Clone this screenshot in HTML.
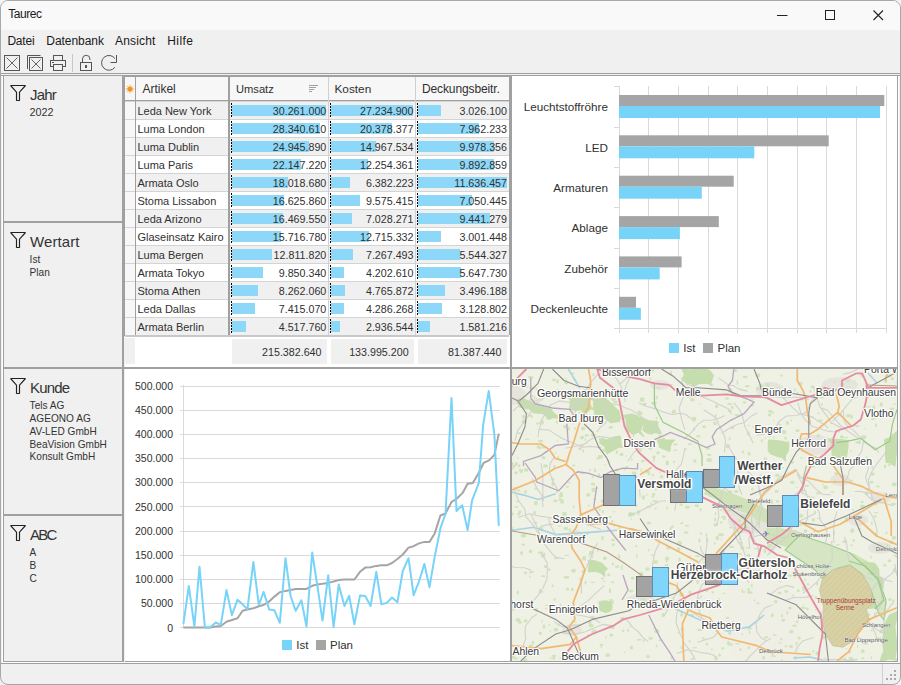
<!DOCTYPE html><html><head><meta charset="utf-8"><style>
*{box-sizing:border-box;margin:0;padding:0}
html,body{width:901px;height:685px;overflow:hidden;background:#f4f4f4;font-family:'Liberation Sans',sans-serif;color:#333}
.a{position:absolute}
.t{position:absolute;white-space:nowrap;line-height:1}
</style></head><body>
<div class="a" style="left:0;top:0;width:901px;height:685px;border:1px solid #a8a8a8;border-radius:8px;background:#f0f0f0;overflow:hidden">

<div class="a" style="left:-1px;top:-1px;width:901px;height:685px">
<div class="a" style="left:1px;top:1px;width:899px;height:29px;background:#f9f9f9;"></div>
<div class="t" style="left:8.2px;top:8.0px;font-size:12px;color:#1a1a1a;font-weight:400;letter-spacing:-0.45px">Taurec</div>
<svg class="a" style="left:0;top:0" width="901" height="30">
<line x1="777" y1="15.5" x2="787.5" y2="15.5" stroke="#222" stroke-width="1"/>
<rect x="825.5" y="10.5" width="9" height="9" fill="none" stroke="#222" stroke-width="1"/>
<path d="M873.5 10.5 L883 20 M883 10.5 L873.5 20" stroke="#222" stroke-width="1.1"/>
</svg>
<div class="t" style="left:7.4px;top:35.0px;font-size:12px;color:#1a1a1a;font-weight:400;letter-spacing:-0.2px">Datei</div>
<div class="t" style="left:46.3px;top:35.0px;font-size:12px;color:#1a1a1a;font-weight:400;letter-spacing:-0.05px">Datenbank</div>
<div class="t" style="left:115.1px;top:35.0px;font-size:12px;color:#1a1a1a;font-weight:400;letter-spacing:0.15px">Ansicht</div>
<div class="t" style="left:167.3px;top:35.0px;font-size:12px;color:#1a1a1a;font-weight:400;letter-spacing:0.4px">Hilfe</div>
<svg class="a" style="left:0;top:0" width="130" height="80" fill="none" stroke="#555" stroke-width="1">
<rect x="4.5" y="55.5" width="15" height="15"/>
<path d="M6.5 57.5 L17.5 68.5 M17.5 57.5 L6.5 68.5" stroke="#666"/>
<path d="M27.5 69 V55.5 H40.5"/>
<rect x="29.5" y="57.5" width="13" height="13"/>
<path d="M31.5 59.5 L40.5 68.5 M40.5 59.5 L31.5 68.5" stroke="#666"/>
<rect x="53.5" y="55.5" width="9" height="5"/>
<rect x="50.5" y="60.5" width="15" height="6"/>
<rect x="53.5" y="64.5" width="9" height="6" fill="#f0f0f0"/>
<line x1="52" y1="62.5" x2="54" y2="62.5"/>
<line x1="72.5" y1="54" x2="72.5" y2="72" stroke="#c8c8c8"/>
<rect x="80.5" y="62.5" width="11" height="8"/>
<path d="M82.5 62.5 V59 A3.7 3.7 0 0 1 89.9 59 V60"/>
<rect x="85.5" y="65.5" width="1" height="2" fill="#555"/>
<path d="M115.1 58.7 A7.4 7.4 0 1 0 114.9 67.3"/>
<path d="M116.5 55 V62.5 H110.5"/>
</svg>
<div class="a" style="left:1px;top:73px;width:899px;height:1px;background:#a0a0a0;"></div>
<div class="a" style="left:1px;top:75px;width:899px;height:1px;background:#a0a0a0;"></div>
<div class="a" style="left:1px;top:663px;width:899px;height:1px;background:#a0a0a0;"></div>
<div class="a" style="left:882px;top:664px;width:1px;height:20px;background:#d0d0d0;"></div>
<svg class="a" style="left:884px;top:668px" width="14" height="14" fill="#aaa"><rect x="10" y="2" width="2" height="2"/><rect x="6" y="6" width="2" height="2"/><rect x="10" y="6" width="2" height="2"/><rect x="2" y="10" width="2" height="2"/><rect x="6" y="10" width="2" height="2"/><rect x="10" y="10" width="2" height="2"/></svg>
<div class="a" style="left:3px;top:76px;width:119px;height:586px;background:#f0f0f0;border-left:1px solid #a0a0a0;border-bottom:1px solid #a0a0a0"></div>
<div class="a" style="left:2px;top:76px;width:1px;height:587px;background:#fff;"></div>
<svg class="a" style="left:0;top:75.0px" width="40" height="30" fill="none" stroke="#222" stroke-width="1.15" stroke-linejoin="miter" stroke-miterlimit="1.3"><path d="M10.6 10.5 H25.5 L19.5 17.2 V25.5 H16.5 V17.2 Z"/></svg>
<div class="t" style="left:30.0px;top:87.0px;font-size:15px;color:#333;font-weight:400;letter-spacing:-0.8px">Jahr</div>
<div class="t" style="left:29.6px;top:107.0px;font-size:10.8px;color:#333;font-weight:400;">2022</div>
<div class="a" style="left:4px;top:221px;width:118px;height:2px;background:#a0a0a0;"></div>
<svg class="a" style="left:0;top:222.0px" width="40" height="30" fill="none" stroke="#222" stroke-width="1.15" stroke-linejoin="miter" stroke-miterlimit="1.3"><path d="M10.6 10.5 H25.5 L19.5 17.2 V25.5 H16.5 V17.2 Z"/></svg>
<div class="t" style="left:30.0px;top:234.0px;font-size:15px;color:#333;font-weight:400;letter-spacing:0.1px">Wertart</div>
<div class="t" style="left:29.6px;top:255.0px;font-size:10.1px;color:#333;font-weight:400;">Ist</div>
<div class="t" style="left:29.6px;top:268.0px;font-size:10.1px;color:#333;font-weight:400;">Plan</div>
<div class="a" style="left:4px;top:367px;width:118px;height:2px;background:#a0a0a0;"></div>
<svg class="a" style="left:0;top:368.0px" width="40" height="30" fill="none" stroke="#222" stroke-width="1.15" stroke-linejoin="miter" stroke-miterlimit="1.3"><path d="M10.6 10.5 H25.5 L19.5 17.2 V25.5 H16.5 V17.2 Z"/></svg>
<div class="t" style="left:30.0px;top:380.0px;font-size:15px;color:#333;font-weight:400;letter-spacing:-0.8px">Kunde</div>
<div class="t" style="left:29.6px;top:401.0px;font-size:10.1px;color:#333;font-weight:400;">Tels AG</div>
<div class="t" style="left:29.6px;top:414.0px;font-size:10.1px;color:#333;font-weight:400;">AGEONO AG</div>
<div class="t" style="left:29.6px;top:427.0px;font-size:10.1px;color:#333;font-weight:400;">AV-LED GmbH</div>
<div class="t" style="left:29.6px;top:440.0px;font-size:10.1px;color:#333;font-weight:400;">BeaVision GmbH</div>
<div class="t" style="left:29.6px;top:452.0px;font-size:10.1px;color:#333;font-weight:400;">Konsult GmbH</div>
<div class="a" style="left:4px;top:514px;width:118px;height:2px;background:#a0a0a0;"></div>
<svg class="a" style="left:0;top:515.0px" width="40" height="30" fill="none" stroke="#222" stroke-width="1.15" stroke-linejoin="miter" stroke-miterlimit="1.3"><path d="M10.6 10.5 H25.5 L19.5 17.2 V25.5 H16.5 V17.2 Z"/></svg>
<div class="t" style="left:30.0px;top:527.0px;font-size:15px;color:#333;font-weight:400;letter-spacing:-1.8px">ABC</div>
<div class="t" style="left:29.6px;top:548.0px;font-size:10.1px;color:#333;font-weight:400;">A</div>
<div class="t" style="left:29.6px;top:561.0px;font-size:10.1px;color:#333;font-weight:400;">B</div>
<div class="t" style="left:29.6px;top:574.0px;font-size:10.1px;color:#333;font-weight:400;">C</div>
<div class="a" style="left:122px;top:76px;width:2px;height:587px;background:#a0a0a0;"></div>
<div class="a" style="left:124px;top:76px;width:1px;height:260px;background:#a0a0a0;"></div>
<div class="a" style="left:510px;top:76px;width:2px;height:587px;background:#a0a0a0;"></div>
<div class="a" style="left:122px;top:367px;width:776px;height:2px;background:#a0a0a0;"></div>
<div class="a" style="left:122px;top:75px;width:776px;height:1px;background:#a0a0a0;"></div>
<div class="a" style="left:122px;top:76px;width:388px;height:1px;background:#a0a0a0;"></div>
<div class="a" style="left:897px;top:76px;width:1px;height:587px;background:#a0a0a0;"></div>
<div class="a" style="left:898px;top:76px;width:1px;height:587px;background:#fff;"></div>
<div class="a" style="left:125px;top:661px;width:773px;height:1px;background:#a0a0a0;"></div>
<div class="a" style="left:3px;top:662px;width:896px;height:1px;background:#fff;"></div>
<div class="a" style="left:125px;top:77px;width:385px;height:290px;background:#fff;"></div>
<div class="a" style="left:125px;top:77px;width:385px;height:23px;background:#f7f7f7;"></div>
<div class="a" style="left:136px;top:101px;width:373px;height:18px;background:#f0f0f0;"></div>
<div class="a" style="left:125px;top:101px;width:10px;height:18px;background:#f7f7f7;"></div>
<div class="a" style="left:125px;top:101px;width:384px;height:1px;background:#d4d4d4;"></div>
<div class="a" style="left:136px;top:119px;width:373px;height:18px;background:#fff;"></div>
<div class="a" style="left:125px;top:119px;width:10px;height:18px;background:#f7f7f7;"></div>
<div class="a" style="left:125px;top:119px;width:384px;height:1px;background:#d4d4d4;"></div>
<div class="a" style="left:136px;top:137px;width:373px;height:18px;background:#f0f0f0;"></div>
<div class="a" style="left:125px;top:137px;width:10px;height:18px;background:#f7f7f7;"></div>
<div class="a" style="left:125px;top:137px;width:384px;height:1px;background:#d4d4d4;"></div>
<div class="a" style="left:136px;top:155px;width:373px;height:18px;background:#fff;"></div>
<div class="a" style="left:125px;top:155px;width:10px;height:18px;background:#f7f7f7;"></div>
<div class="a" style="left:125px;top:155px;width:384px;height:1px;background:#d4d4d4;"></div>
<div class="a" style="left:136px;top:173px;width:373px;height:18px;background:#f0f0f0;"></div>
<div class="a" style="left:125px;top:173px;width:10px;height:18px;background:#f7f7f7;"></div>
<div class="a" style="left:125px;top:173px;width:384px;height:1px;background:#d4d4d4;"></div>
<div class="a" style="left:136px;top:191px;width:373px;height:18px;background:#fff;"></div>
<div class="a" style="left:125px;top:191px;width:10px;height:18px;background:#f7f7f7;"></div>
<div class="a" style="left:125px;top:191px;width:384px;height:1px;background:#d4d4d4;"></div>
<div class="a" style="left:136px;top:209px;width:373px;height:18px;background:#f0f0f0;"></div>
<div class="a" style="left:125px;top:209px;width:10px;height:18px;background:#f7f7f7;"></div>
<div class="a" style="left:125px;top:209px;width:384px;height:1px;background:#d4d4d4;"></div>
<div class="a" style="left:136px;top:227px;width:373px;height:18px;background:#fff;"></div>
<div class="a" style="left:125px;top:227px;width:10px;height:18px;background:#f7f7f7;"></div>
<div class="a" style="left:125px;top:227px;width:384px;height:1px;background:#d4d4d4;"></div>
<div class="a" style="left:136px;top:245px;width:373px;height:18px;background:#f0f0f0;"></div>
<div class="a" style="left:125px;top:245px;width:10px;height:18px;background:#f7f7f7;"></div>
<div class="a" style="left:125px;top:245px;width:384px;height:1px;background:#d4d4d4;"></div>
<div class="a" style="left:136px;top:263px;width:373px;height:18px;background:#fff;"></div>
<div class="a" style="left:125px;top:263px;width:10px;height:18px;background:#f7f7f7;"></div>
<div class="a" style="left:125px;top:263px;width:384px;height:1px;background:#d4d4d4;"></div>
<div class="a" style="left:136px;top:281px;width:373px;height:18px;background:#f0f0f0;"></div>
<div class="a" style="left:125px;top:281px;width:10px;height:18px;background:#f7f7f7;"></div>
<div class="a" style="left:125px;top:281px;width:384px;height:1px;background:#d4d4d4;"></div>
<div class="a" style="left:136px;top:299px;width:373px;height:18px;background:#fff;"></div>
<div class="a" style="left:125px;top:299px;width:10px;height:18px;background:#f7f7f7;"></div>
<div class="a" style="left:125px;top:299px;width:384px;height:1px;background:#d4d4d4;"></div>
<div class="a" style="left:136px;top:317px;width:373px;height:18px;background:#f0f0f0;"></div>
<div class="a" style="left:125px;top:317px;width:10px;height:18px;background:#f7f7f7;"></div>
<div class="a" style="left:125px;top:317px;width:384px;height:1px;background:#d4d4d4;"></div>
<div class="a" style="left:125px;top:100px;width:385px;height:1px;background:#a0a0a0;"></div>
<div class="a" style="left:509px;top:77px;width:1px;height:258px;background:#a0a0a0;"></div>
<div class="a" style="left:135px;top:77px;width:1px;height:258px;background:#a0a0a0;"></div>
<div class="a" style="left:228px;top:77px;width:2px;height:258px;background:#a0a0a0;"></div>
<div class="a" style="left:328px;top:77px;width:1px;height:258px;background:#d0d0d0;"></div>
<div class="a" style="left:415px;top:77px;width:1px;height:258px;background:#d0d0d0;"></div>
<div class="t" style="left:137.4px;top:106.0px;font-size:11px;color:#303030;font-weight:400;">Leda New York</div>
<div class="a" style="left:232px;top:105px;width:94px;height:11px;background:#8dd8f8;"></div>
<div class="a" style="left:231px;top:103px;width:1px;height:15px;background:#000;background:repeating-linear-gradient(#000 0 2px,transparent 2px 3px)"></div>
<div class="t" style="left:236.3px;width:90px;text-align:right;top:106.0px;font-size:10.7px;color:#303030;font-weight:400;">30.261.000</div>
<div class="a" style="left:331px;top:105px;width:82px;height:11px;background:#8dd8f8;"></div>
<div class="a" style="left:330px;top:103px;width:1px;height:15px;background:#000;background:repeating-linear-gradient(#000 0 2px,transparent 2px 3px)"></div>
<div class="t" style="left:323.5px;width:90px;text-align:right;top:106.0px;font-size:10.7px;color:#303030;font-weight:400;">27.234.900</div>
<div class="a" style="left:418px;top:105px;width:23px;height:11px;background:#8dd8f8;"></div>
<div class="a" style="left:417px;top:103px;width:1px;height:15px;background:#000;background:repeating-linear-gradient(#000 0 2px,transparent 2px 3px)"></div>
<div class="t" style="left:417.0px;width:90px;text-align:right;top:106.0px;font-size:10.7px;color:#303030;font-weight:400;">3.026.100</div>
<div class="t" style="left:137.4px;top:124.0px;font-size:11px;color:#303030;font-weight:400;">Luma London</div>
<div class="a" style="left:232px;top:123px;width:88px;height:11px;background:#8dd8f8;"></div>
<div class="a" style="left:231px;top:121px;width:1px;height:15px;background:#000;background:repeating-linear-gradient(#000 0 2px,transparent 2px 3px)"></div>
<div class="t" style="left:236.3px;width:90px;text-align:right;top:124.0px;font-size:10.7px;color:#303030;font-weight:400;">28.340.610</div>
<div class="a" style="left:331px;top:123px;width:61px;height:11px;background:#8dd8f8;"></div>
<div class="a" style="left:330px;top:121px;width:1px;height:15px;background:#000;background:repeating-linear-gradient(#000 0 2px,transparent 2px 3px)"></div>
<div class="t" style="left:323.5px;width:90px;text-align:right;top:124.0px;font-size:10.7px;color:#303030;font-weight:400;">20.378.377</div>
<div class="a" style="left:418px;top:123px;width:61px;height:11px;background:#8dd8f8;"></div>
<div class="a" style="left:417px;top:121px;width:1px;height:15px;background:#000;background:repeating-linear-gradient(#000 0 2px,transparent 2px 3px)"></div>
<div class="t" style="left:417.0px;width:90px;text-align:right;top:124.0px;font-size:10.7px;color:#303030;font-weight:400;">7.962.233</div>
<div class="t" style="left:137.4px;top:142.0px;font-size:11px;color:#303030;font-weight:400;">Luma Dublin</div>
<div class="a" style="left:232px;top:141px;width:77px;height:11px;background:#8dd8f8;"></div>
<div class="a" style="left:231px;top:139px;width:1px;height:15px;background:#000;background:repeating-linear-gradient(#000 0 2px,transparent 2px 3px)"></div>
<div class="t" style="left:236.3px;width:90px;text-align:right;top:142.0px;font-size:10.7px;color:#303030;font-weight:400;">24.945.890</div>
<div class="a" style="left:331px;top:141px;width:45px;height:11px;background:#8dd8f8;"></div>
<div class="a" style="left:330px;top:139px;width:1px;height:15px;background:#000;background:repeating-linear-gradient(#000 0 2px,transparent 2px 3px)"></div>
<div class="t" style="left:323.5px;width:90px;text-align:right;top:142.0px;font-size:10.7px;color:#303030;font-weight:400;">14.967.534</div>
<div class="a" style="left:418px;top:141px;width:76px;height:11px;background:#8dd8f8;"></div>
<div class="a" style="left:417px;top:139px;width:1px;height:15px;background:#000;background:repeating-linear-gradient(#000 0 2px,transparent 2px 3px)"></div>
<div class="t" style="left:417.0px;width:90px;text-align:right;top:142.0px;font-size:10.7px;color:#303030;font-weight:400;">9.978.356</div>
<div class="t" style="left:137.4px;top:160.0px;font-size:11px;color:#303030;font-weight:400;">Luma Paris</div>
<div class="a" style="left:232px;top:159px;width:69px;height:11px;background:#8dd8f8;"></div>
<div class="a" style="left:231px;top:157px;width:1px;height:15px;background:#000;background:repeating-linear-gradient(#000 0 2px,transparent 2px 3px)"></div>
<div class="t" style="left:236.3px;width:90px;text-align:right;top:160.0px;font-size:10.7px;color:#303030;font-weight:400;">22.147.220</div>
<div class="a" style="left:331px;top:159px;width:37px;height:11px;background:#8dd8f8;"></div>
<div class="a" style="left:330px;top:157px;width:1px;height:15px;background:#000;background:repeating-linear-gradient(#000 0 2px,transparent 2px 3px)"></div>
<div class="t" style="left:323.5px;width:90px;text-align:right;top:160.0px;font-size:10.7px;color:#303030;font-weight:400;">12.254.361</div>
<div class="a" style="left:418px;top:159px;width:76px;height:11px;background:#8dd8f8;"></div>
<div class="a" style="left:417px;top:157px;width:1px;height:15px;background:#000;background:repeating-linear-gradient(#000 0 2px,transparent 2px 3px)"></div>
<div class="t" style="left:417.0px;width:90px;text-align:right;top:160.0px;font-size:10.7px;color:#303030;font-weight:400;">9.892.859</div>
<div class="t" style="left:137.4px;top:178.0px;font-size:11px;color:#303030;font-weight:400;">Armata Oslo</div>
<div class="a" style="left:232px;top:177px;width:56px;height:11px;background:#8dd8f8;"></div>
<div class="a" style="left:231px;top:175px;width:1px;height:15px;background:#000;background:repeating-linear-gradient(#000 0 2px,transparent 2px 3px)"></div>
<div class="t" style="left:236.3px;width:90px;text-align:right;top:178.0px;font-size:10.7px;color:#303030;font-weight:400;">18.018.680</div>
<div class="a" style="left:331px;top:177px;width:19px;height:11px;background:#8dd8f8;"></div>
<div class="a" style="left:330px;top:175px;width:1px;height:15px;background:#000;background:repeating-linear-gradient(#000 0 2px,transparent 2px 3px)"></div>
<div class="t" style="left:323.5px;width:90px;text-align:right;top:178.0px;font-size:10.7px;color:#303030;font-weight:400;">6.382.223</div>
<div class="a" style="left:418px;top:177px;width:89px;height:11px;background:#8dd8f8;"></div>
<div class="a" style="left:417px;top:175px;width:1px;height:15px;background:#000;background:repeating-linear-gradient(#000 0 2px,transparent 2px 3px)"></div>
<div class="t" style="left:417.0px;width:90px;text-align:right;top:178.0px;font-size:10.7px;color:#303030;font-weight:400;">11.636.457</div>
<div class="t" style="left:137.4px;top:196.0px;font-size:11px;color:#303030;font-weight:400;">Stoma Lissabon</div>
<div class="a" style="left:232px;top:195px;width:52px;height:11px;background:#8dd8f8;"></div>
<div class="a" style="left:231px;top:193px;width:1px;height:15px;background:#000;background:repeating-linear-gradient(#000 0 2px,transparent 2px 3px)"></div>
<div class="t" style="left:236.3px;width:90px;text-align:right;top:196.0px;font-size:10.7px;color:#303030;font-weight:400;">16.625.860</div>
<div class="a" style="left:331px;top:195px;width:29px;height:11px;background:#8dd8f8;"></div>
<div class="a" style="left:330px;top:193px;width:1px;height:15px;background:#000;background:repeating-linear-gradient(#000 0 2px,transparent 2px 3px)"></div>
<div class="t" style="left:323.5px;width:90px;text-align:right;top:196.0px;font-size:10.7px;color:#303030;font-weight:400;">9.575.415</div>
<div class="a" style="left:418px;top:195px;width:54px;height:11px;background:#8dd8f8;"></div>
<div class="a" style="left:417px;top:193px;width:1px;height:15px;background:#000;background:repeating-linear-gradient(#000 0 2px,transparent 2px 3px)"></div>
<div class="t" style="left:417.0px;width:90px;text-align:right;top:196.0px;font-size:10.7px;color:#303030;font-weight:400;">7.050.445</div>
<div class="t" style="left:137.4px;top:214.0px;font-size:11px;color:#303030;font-weight:400;">Leda Arizono</div>
<div class="a" style="left:232px;top:213px;width:51px;height:11px;background:#8dd8f8;"></div>
<div class="a" style="left:231px;top:211px;width:1px;height:15px;background:#000;background:repeating-linear-gradient(#000 0 2px,transparent 2px 3px)"></div>
<div class="t" style="left:236.3px;width:90px;text-align:right;top:214.0px;font-size:10.7px;color:#303030;font-weight:400;">16.469.550</div>
<div class="a" style="left:331px;top:213px;width:21px;height:11px;background:#8dd8f8;"></div>
<div class="a" style="left:330px;top:211px;width:1px;height:15px;background:#000;background:repeating-linear-gradient(#000 0 2px,transparent 2px 3px)"></div>
<div class="t" style="left:323.5px;width:90px;text-align:right;top:214.0px;font-size:10.7px;color:#303030;font-weight:400;">7.028.271</div>
<div class="a" style="left:418px;top:213px;width:72px;height:11px;background:#8dd8f8;"></div>
<div class="a" style="left:417px;top:211px;width:1px;height:15px;background:#000;background:repeating-linear-gradient(#000 0 2px,transparent 2px 3px)"></div>
<div class="t" style="left:417.0px;width:90px;text-align:right;top:214.0px;font-size:10.7px;color:#303030;font-weight:400;">9.441.279</div>
<div class="t" style="left:137.4px;top:232.0px;font-size:11px;color:#303030;font-weight:400;">Glaseinsatz Kairo</div>
<div class="a" style="left:232px;top:231px;width:49px;height:11px;background:#8dd8f8;"></div>
<div class="a" style="left:231px;top:229px;width:1px;height:15px;background:#000;background:repeating-linear-gradient(#000 0 2px,transparent 2px 3px)"></div>
<div class="t" style="left:236.3px;width:90px;text-align:right;top:232.0px;font-size:10.7px;color:#303030;font-weight:400;">15.716.780</div>
<div class="a" style="left:331px;top:231px;width:38px;height:11px;background:#8dd8f8;"></div>
<div class="a" style="left:330px;top:229px;width:1px;height:15px;background:#000;background:repeating-linear-gradient(#000 0 2px,transparent 2px 3px)"></div>
<div class="t" style="left:323.5px;width:90px;text-align:right;top:232.0px;font-size:10.7px;color:#303030;font-weight:400;">12.715.332</div>
<div class="a" style="left:418px;top:231px;width:23px;height:11px;background:#8dd8f8;"></div>
<div class="a" style="left:417px;top:229px;width:1px;height:15px;background:#000;background:repeating-linear-gradient(#000 0 2px,transparent 2px 3px)"></div>
<div class="t" style="left:417.0px;width:90px;text-align:right;top:232.0px;font-size:10.7px;color:#303030;font-weight:400;">3.001.448</div>
<div class="t" style="left:137.4px;top:250.0px;font-size:11px;color:#303030;font-weight:400;">Luma Bergen</div>
<div class="a" style="left:232px;top:249px;width:40px;height:11px;background:#8dd8f8;"></div>
<div class="a" style="left:231px;top:247px;width:1px;height:15px;background:#000;background:repeating-linear-gradient(#000 0 2px,transparent 2px 3px)"></div>
<div class="t" style="left:236.3px;width:90px;text-align:right;top:250.0px;font-size:10.7px;color:#303030;font-weight:400;">12.811.820</div>
<div class="a" style="left:331px;top:249px;width:22px;height:11px;background:#8dd8f8;"></div>
<div class="a" style="left:330px;top:247px;width:1px;height:15px;background:#000;background:repeating-linear-gradient(#000 0 2px,transparent 2px 3px)"></div>
<div class="t" style="left:323.5px;width:90px;text-align:right;top:250.0px;font-size:10.7px;color:#303030;font-weight:400;">7.267.493</div>
<div class="a" style="left:418px;top:249px;width:42px;height:11px;background:#8dd8f8;"></div>
<div class="a" style="left:417px;top:247px;width:1px;height:15px;background:#000;background:repeating-linear-gradient(#000 0 2px,transparent 2px 3px)"></div>
<div class="t" style="left:417.0px;width:90px;text-align:right;top:250.0px;font-size:10.7px;color:#303030;font-weight:400;">5.544.327</div>
<div class="t" style="left:137.4px;top:268.0px;font-size:11px;color:#303030;font-weight:400;">Armata Tokyo</div>
<div class="a" style="left:232px;top:267px;width:31px;height:11px;background:#8dd8f8;"></div>
<div class="a" style="left:231px;top:265px;width:1px;height:15px;background:#000;background:repeating-linear-gradient(#000 0 2px,transparent 2px 3px)"></div>
<div class="t" style="left:236.3px;width:90px;text-align:right;top:268.0px;font-size:10.7px;color:#303030;font-weight:400;">9.850.340</div>
<div class="a" style="left:331px;top:267px;width:13px;height:11px;background:#8dd8f8;"></div>
<div class="a" style="left:330px;top:265px;width:1px;height:15px;background:#000;background:repeating-linear-gradient(#000 0 2px,transparent 2px 3px)"></div>
<div class="t" style="left:323.5px;width:90px;text-align:right;top:268.0px;font-size:10.7px;color:#303030;font-weight:400;">4.202.610</div>
<div class="a" style="left:418px;top:267px;width:43px;height:11px;background:#8dd8f8;"></div>
<div class="a" style="left:417px;top:265px;width:1px;height:15px;background:#000;background:repeating-linear-gradient(#000 0 2px,transparent 2px 3px)"></div>
<div class="t" style="left:417.0px;width:90px;text-align:right;top:268.0px;font-size:10.7px;color:#303030;font-weight:400;">5.647.730</div>
<div class="t" style="left:137.4px;top:286.0px;font-size:11px;color:#303030;font-weight:400;">Stoma Athen</div>
<div class="a" style="left:232px;top:285px;width:26px;height:11px;background:#8dd8f8;"></div>
<div class="a" style="left:231px;top:283px;width:1px;height:15px;background:#000;background:repeating-linear-gradient(#000 0 2px,transparent 2px 3px)"></div>
<div class="t" style="left:236.3px;width:90px;text-align:right;top:286.0px;font-size:10.7px;color:#303030;font-weight:400;">8.262.060</div>
<div class="a" style="left:331px;top:285px;width:14px;height:11px;background:#8dd8f8;"></div>
<div class="a" style="left:330px;top:283px;width:1px;height:15px;background:#000;background:repeating-linear-gradient(#000 0 2px,transparent 2px 3px)"></div>
<div class="t" style="left:323.5px;width:90px;text-align:right;top:286.0px;font-size:10.7px;color:#303030;font-weight:400;">4.765.872</div>
<div class="a" style="left:418px;top:285px;width:27px;height:11px;background:#8dd8f8;"></div>
<div class="a" style="left:417px;top:283px;width:1px;height:15px;background:#000;background:repeating-linear-gradient(#000 0 2px,transparent 2px 3px)"></div>
<div class="t" style="left:417.0px;width:90px;text-align:right;top:286.0px;font-size:10.7px;color:#303030;font-weight:400;">3.496.188</div>
<div class="t" style="left:137.4px;top:304.0px;font-size:11px;color:#303030;font-weight:400;">Leda Dallas</div>
<div class="a" style="left:232px;top:303px;width:23px;height:11px;background:#8dd8f8;"></div>
<div class="a" style="left:231px;top:301px;width:1px;height:15px;background:#000;background:repeating-linear-gradient(#000 0 2px,transparent 2px 3px)"></div>
<div class="t" style="left:236.3px;width:90px;text-align:right;top:304.0px;font-size:10.7px;color:#303030;font-weight:400;">7.415.070</div>
<div class="a" style="left:331px;top:303px;width:13px;height:11px;background:#8dd8f8;"></div>
<div class="a" style="left:330px;top:301px;width:1px;height:15px;background:#000;background:repeating-linear-gradient(#000 0 2px,transparent 2px 3px)"></div>
<div class="t" style="left:323.5px;width:90px;text-align:right;top:304.0px;font-size:10.7px;color:#303030;font-weight:400;">4.286.268</div>
<div class="a" style="left:418px;top:303px;width:24px;height:11px;background:#8dd8f8;"></div>
<div class="a" style="left:417px;top:301px;width:1px;height:15px;background:#000;background:repeating-linear-gradient(#000 0 2px,transparent 2px 3px)"></div>
<div class="t" style="left:417.0px;width:90px;text-align:right;top:304.0px;font-size:10.7px;color:#303030;font-weight:400;">3.128.802</div>
<div class="t" style="left:137.4px;top:322.0px;font-size:11px;color:#303030;font-weight:400;">Armata Berlin</div>
<div class="a" style="left:232px;top:321px;width:14px;height:11px;background:#8dd8f8;"></div>
<div class="a" style="left:231px;top:319px;width:1px;height:15px;background:#000;background:repeating-linear-gradient(#000 0 2px,transparent 2px 3px)"></div>
<div class="t" style="left:236.3px;width:90px;text-align:right;top:322.0px;font-size:10.7px;color:#303030;font-weight:400;">4.517.760</div>
<div class="a" style="left:331px;top:321px;width:9px;height:11px;background:#8dd8f8;"></div>
<div class="a" style="left:330px;top:319px;width:1px;height:15px;background:#000;background:repeating-linear-gradient(#000 0 2px,transparent 2px 3px)"></div>
<div class="t" style="left:323.5px;width:90px;text-align:right;top:322.0px;font-size:10.7px;color:#303030;font-weight:400;">2.936.544</div>
<div class="a" style="left:418px;top:321px;width:12px;height:11px;background:#8dd8f8;"></div>
<div class="a" style="left:417px;top:319px;width:1px;height:15px;background:#000;background:repeating-linear-gradient(#000 0 2px,transparent 2px 3px)"></div>
<div class="t" style="left:417.0px;width:90px;text-align:right;top:322.0px;font-size:10.7px;color:#303030;font-weight:400;">1.581.216</div>
<svg class="a" style="left:124px;top:83px" width="12" height="12"><g stroke="#fbb970" stroke-width="1"><path d="M6 1.5 V10.5 M1.5 6 H10.5 M2.8 2.8 L9.2 9.2 M9.2 2.8 L2.8 9.2"/></g><circle cx="6" cy="6" r="2.6" fill="#f7931e"/></svg>
<div class="t" style="left:142.4px;top:83.0px;font-size:12px;color:#303030;font-weight:400;">Artikel</div>
<div class="t" style="left:235.9px;top:84.0px;font-size:11.2px;color:#303030;font-weight:400;">Umsatz</div>
<div class="t" style="left:334.5px;top:84.0px;font-size:11.8px;color:#303030;font-weight:400;">Kosten</div>
<div class="t" style="left:422.0px;top:83.0px;font-size:12px;color:#303030;font-weight:400;letter-spacing:-0.12px">Deckungsbeitr.</div>
<svg class="a" style="left:309px;top:84px" width="10" height="9" stroke="#a0a0a0" stroke-width="1"><path d="M0 1.5 H9 M0 3.5 H7 M0 5.5 H5 M0 7.5 H3"/></svg>
<div class="a" style="left:125px;top:335px;width:384px;height:2px;background:#c8c8c8;"></div>
<div class="a" style="left:125px;top:338px;width:10px;height:26px;background:#f0f0f0;"></div>
<div class="a" style="left:232px;top:339px;width:95px;height:25px;background:#f0f0f0;"></div>
<div class="t" style="left:231.5px;width:90px;text-align:right;top:347.0px;font-size:10.7px;color:#303030;font-weight:400;">215.382.640</div>
<div class="a" style="left:331px;top:339px;width:83px;height:25px;background:#f0f0f0;"></div>
<div class="t" style="left:318.6px;width:90px;text-align:right;top:347.0px;font-size:10.7px;color:#303030;font-weight:400;">133.995.200</div>
<div class="a" style="left:418px;top:339px;width:89px;height:25px;background:#f0f0f0;"></div>
<div class="t" style="left:411.5px;width:90px;text-align:right;top:347.0px;font-size:10.7px;color:#303030;font-weight:400;">81.387.440</div>
<div class="a" style="left:512px;top:76px;width:385px;height:291px;background:#fff;"></div>
<svg class="a" style="left:512px;top:77px" width="385" height="290">
<line x1="107.5" y1="9" x2="107.5" y2="256" stroke="#d9d9d9"/>
<line x1="136.5" y1="9" x2="136.5" y2="256" stroke="#d9d9d9"/>
<line x1="166.5" y1="9" x2="166.5" y2="256" stroke="#d9d9d9"/>
<line x1="196.5" y1="9" x2="196.5" y2="256" stroke="#d9d9d9"/>
<line x1="225.5" y1="9" x2="225.5" y2="256" stroke="#d9d9d9"/>
<line x1="255.5" y1="9" x2="255.5" y2="256" stroke="#d9d9d9"/>
<line x1="285.5" y1="9" x2="285.5" y2="256" stroke="#d9d9d9"/>
<line x1="314.5" y1="9" x2="314.5" y2="256" stroke="#d9d9d9"/>
<line x1="344.5" y1="9" x2="344.5" y2="256" stroke="#d9d9d9"/>
<line x1="374.5" y1="9" x2="374.5" y2="256" stroke="#d9d9d9"/>
<line x1="102" y1="9.5" x2="107" y2="9.5" stroke="#d9d9d9"/>
<line x1="102" y1="50.5" x2="107" y2="50.5" stroke="#d9d9d9"/>
<line x1="102" y1="90.5" x2="107" y2="90.5" stroke="#d9d9d9"/>
<line x1="102" y1="130.5" x2="107" y2="130.5" stroke="#d9d9d9"/>
<line x1="102" y1="171.5" x2="107" y2="171.5" stroke="#d9d9d9"/>
<line x1="102" y1="211.5" x2="107" y2="211.5" stroke="#d9d9d9"/>
<line x1="102" y1="251.5" x2="107" y2="251.5" stroke="#d9d9d9"/>
<line x1="102" y1="251.5" x2="374" y2="251.5" stroke="#d9d9d9"/>
<rect x="107" y="18.0" width="265.3" height="11" fill="#a5a5a5"/>
<rect x="107" y="29.0" width="261.0" height="12" fill="#78d3f8"/>
<rect x="107" y="58.3" width="209.7" height="11" fill="#a5a5a5"/>
<rect x="107" y="69.3" width="135.3" height="12" fill="#78d3f8"/>
<rect x="107" y="98.7" width="114.7" height="11" fill="#a5a5a5"/>
<rect x="107" y="109.7" width="82.8" height="12" fill="#78d3f8"/>
<rect x="107" y="139.1" width="99.8" height="11" fill="#a5a5a5"/>
<rect x="107" y="150.1" width="60.9" height="12" fill="#78d3f8"/>
<rect x="107" y="179.4" width="62.6" height="11" fill="#a5a5a5"/>
<rect x="107" y="190.4" width="40.7" height="12" fill="#78d3f8"/>
<rect x="107" y="219.8" width="17.0" height="11" fill="#a5a5a5"/>
<rect x="107" y="230.8" width="21.9" height="12" fill="#78d3f8"/>
</svg>
<div class="t" style="left:487.9px;width:120px;text-align:right;top:101.0px;font-size:11.7px;color:#303030;font-weight:400;">Leuchtstoffröhre</div>
<div class="t" style="left:487.9px;width:120px;text-align:right;top:142.0px;font-size:11.7px;color:#303030;font-weight:400;">LED</div>
<div class="t" style="left:487.9px;width:120px;text-align:right;top:182.0px;font-size:11.7px;color:#303030;font-weight:400;">Armaturen</div>
<div class="t" style="left:487.9px;width:120px;text-align:right;top:222.0px;font-size:11.7px;color:#303030;font-weight:400;">Ablage</div>
<div class="t" style="left:487.9px;width:120px;text-align:right;top:263.0px;font-size:11.7px;color:#303030;font-weight:400;">Zubehör</div>
<div class="t" style="left:487.9px;width:120px;text-align:right;top:303.0px;font-size:11.7px;color:#303030;font-weight:400;">Deckenleuchte</div>
<div class="a" style="left:669px;top:343px;width:10px;height:10px;background:#7dd4fa;"></div>
<div class="t" style="left:683.3px;top:343.0px;font-size:11.5px;color:#303030;font-weight:400;">Ist</div>
<div class="a" style="left:703px;top:343px;width:10px;height:10px;background:#a5a5a5;"></div>
<div class="t" style="left:717.5px;top:343.0px;font-size:11.5px;color:#303030;font-weight:400;">Plan</div>
<div class="a" style="left:125px;top:369px;width:385px;height:292px;background:#fff;"></div>
<svg class="a" style="left:125px;top:369px" width="385" height="292">
<line x1="55" y1="258.5" x2="375" y2="258.5" stroke="#d9d9d9"/>
<line x1="55" y1="234.5" x2="375" y2="234.5" stroke="#d9d9d9"/>
<line x1="55" y1="210.5" x2="375" y2="210.5" stroke="#d9d9d9"/>
<line x1="55" y1="186.5" x2="375" y2="186.5" stroke="#d9d9d9"/>
<line x1="55" y1="162.5" x2="375" y2="162.5" stroke="#d9d9d9"/>
<line x1="55" y1="137.5" x2="375" y2="137.5" stroke="#d9d9d9"/>
<line x1="55" y1="113.5" x2="375" y2="113.5" stroke="#d9d9d9"/>
<line x1="55" y1="89.5" x2="375" y2="89.5" stroke="#d9d9d9"/>
<line x1="55" y1="65.5" x2="375" y2="65.5" stroke="#d9d9d9"/>
<line x1="55" y1="41.5" x2="375" y2="41.5" stroke="#d9d9d9"/>
<line x1="55" y1="17.5" x2="375" y2="17.5" stroke="#d9d9d9"/>
<line x1="58.5" y1="16" x2="58.5" y2="259" stroke="#d9d9d9"/>
<polyline fill="none" stroke="#a5a5a5" stroke-width="2" stroke-linejoin="round" points="58.4,258.5 85.3,258.5 90.7,257.6 95.8,257.0 101.5,252.8 106.9,251.0 112.5,249.2 117.6,241.7 122.4,240.5 128.4,239.3 133.8,237.2 138.6,236.0 144.2,232.4 149.4,227.6 154.8,223.3 160.5,221.9 165.6,221.0 170.7,219.9 181.5,219.9 187.2,216.8 192.7,215.4 197.5,214.8 203.2,213.9 208.6,212.5 213.7,211.1 219.4,210.5 229.4,210.5 235.0,202.8 240.2,198.6 245.6,198.3 251.3,196.9 256.4,196.3 261.8,196.3 267.0,194.0 272.4,190.0 277.8,185.5 283.5,178.6 288.6,177.2 294.0,174.4 299.4,172.9 304.5,172.9 309.7,164.4 315.4,146.5 320.5,144.5 326.5,133.0 332.2,129.3 337.6,123.9 342.6,114.7 347.8,114.0 353.3,104.8 358.7,93.8 364.4,91.1 369.4,85.9 373.8,64.6"/>
<polyline fill="none" stroke="#78d3f8" stroke-width="2" stroke-linejoin="round" points="58.4,255.2 63.8,216.9 69.4,257.6 74.5,197.8 79.9,258.5 85.1,258.5 90.7,253.4 95.8,255.8 101.5,221.1 106.9,246.2 112.5,230.7 117.8,235.6 122.4,240.2 128.4,193.0 133.8,236.0 138.6,222.9 144.2,240.4 149.4,241.3 154.8,253.8 160.5,189.2 165.6,227.0 170.7,241.8 176.4,231.3 181.5,257.5 187.2,183.5 192.7,219.1 197.5,251.5 203.2,206.3 208.6,258.1 213.7,215.6 219.4,237.0 224.2,226.8 229.4,255.2 235.0,226.5 240.2,227.0 245.6,237.0 251.3,202.8 256.4,235.3 261.8,233.9 267.0,228.5 272.4,233.3 277.8,202.0 283.5,189.2 288.6,226.2 294.0,212.5 299.4,194.9 304.5,218.2 309.7,187.7 315.6,158.6 320.5,145.0 326.5,29.1 331.5,142.0 337.2,136.3 342.6,161.1 347.1,131.3 353.8,114.0 358.2,55.6 363.7,22.1 369.4,65.6 373.8,156.9"/>
</svg>
<div class="t" style="left:113.0px;width:60px;text-align:right;top:623.0px;font-size:10.5px;color:#303030;font-weight:400;">0</div>
<div class="t" style="left:113.0px;width:60px;text-align:right;top:598.0px;font-size:10.5px;color:#303030;font-weight:400;">50.000</div>
<div class="t" style="left:113.0px;width:60px;text-align:right;top:574.0px;font-size:10.5px;color:#303030;font-weight:400;">100.000</div>
<div class="t" style="left:113.0px;width:60px;text-align:right;top:550.0px;font-size:10.5px;color:#303030;font-weight:400;">150.000</div>
<div class="t" style="left:113.0px;width:60px;text-align:right;top:526.0px;font-size:10.5px;color:#303030;font-weight:400;">200.000</div>
<div class="t" style="left:113.0px;width:60px;text-align:right;top:502.0px;font-size:10.5px;color:#303030;font-weight:400;">250.000</div>
<div class="t" style="left:113.0px;width:60px;text-align:right;top:477.0px;font-size:10.5px;color:#303030;font-weight:400;">300.000</div>
<div class="t" style="left:113.0px;width:60px;text-align:right;top:453.0px;font-size:10.5px;color:#303030;font-weight:400;">350.000</div>
<div class="t" style="left:113.0px;width:60px;text-align:right;top:429.0px;font-size:10.5px;color:#303030;font-weight:400;">400.000</div>
<div class="t" style="left:113.0px;width:60px;text-align:right;top:405.0px;font-size:10.5px;color:#303030;font-weight:400;">450.000</div>
<div class="t" style="left:113.0px;width:60px;text-align:right;top:381.0px;font-size:10.5px;color:#303030;font-weight:400;">500.000</div>
<div class="a" style="left:282px;top:640px;width:10px;height:10px;background:#78d3f8;"></div>
<div class="t" style="left:296.2px;top:640.0px;font-size:11.5px;color:#303030;font-weight:400;">Ist</div>
<div class="a" style="left:316px;top:640px;width:10px;height:10px;background:#a5a5a5;"></div>
<div class="t" style="left:330.0px;top:640.0px;font-size:11.5px;color:#303030;font-weight:400;">Plan</div>
<svg class="a" style="left:512px;top:369px" width="385" height="292" viewBox="0 0 385 292">
<defs><pattern id="hatch" width="4" height="4" patternUnits="userSpaceOnUse" patternTransform="rotate(45)"><rect width="4" height="4" fill="#d6d2a6"/><line x1="0" y1="0" x2="0" y2="4" stroke="#dcbc92" stroke-width="1"/></pattern></defs>
<rect width="385" height="292" fill="#eff1e4"/>
<ellipse cx="0" cy="26" rx="14" ry="10" fill="#e4e2dc" opacity="0.9"/>
<ellipse cx="148" cy="16" rx="10" ry="5" fill="#e4e2dc" opacity="0.9"/>
<ellipse cx="258" cy="21" rx="14" ry="8" fill="#e4e2dc" opacity="0.9"/>
<ellipse cx="328" cy="16" rx="18" ry="8" fill="#e4e2dc" opacity="0.9"/>
<ellipse cx="303" cy="76" rx="18" ry="10" fill="#e4e2dc" opacity="0.9"/>
<ellipse cx="238" cy="151" rx="22" ry="14" fill="#e4e2dc" opacity="0.9"/>
<ellipse cx="188" cy="206" rx="14" ry="6" fill="#e4e2dc" opacity="0.9"/>
<ellipse cx="128" cy="231" rx="14" ry="6" fill="#e4e2dc" opacity="0.9"/>
<ellipse cx="60" cy="261" rx="10" ry="6" fill="#e4e2dc" opacity="0.9"/>
<ellipse cx="63" cy="166" rx="8" ry="5" fill="#e4e2dc" opacity="0.9"/>
<ellipse cx="51" cy="171" rx="10" ry="4" fill="#e4e2dc" opacity="0.9"/>
<ellipse cx="328" cy="111" rx="10" ry="6" fill="#e4e2dc" opacity="0.9"/>
<ellipse cx="346" cy="151" rx="10" ry="6" fill="#e4e2dc" opacity="0.9"/>
<ellipse cx="368" cy="179" rx="12" ry="6" fill="#e4e2dc" opacity="0.9"/>
<ellipse cx="368" cy="129" rx="10" ry="6" fill="#e4e2dc" opacity="0.9"/>
<ellipse cx="218" cy="141" rx="8" ry="5" fill="#e4e2dc" opacity="0.9"/>
<ellipse cx="318" cy="261" rx="10" ry="8" fill="#e4e2dc" opacity="0.9"/>
<polygon points="216.0,216.0 258.0,206.0 288.0,231.0 288.0,292.0 228.0,292.0 208.0,271.0" fill="#f0eee6" opacity="0.7"/>
<path fill="#d0e4bb" d="M171.7 163.5a2.4 1.3 0 1 0 4.9 0a2.4 1.3 0 1 0 -4.9 0M194.5 171.5a1.0 1.3 0 1 0 1.9 0a1.0 1.3 0 1 0 -1.9 0M241.7 231.5a0.8 1.0 0 1 0 1.6 0a0.8 1.0 0 1 0 -1.6 0M32.9 236.4a2.0 0.7 0 1 0 4.0 0a2.0 0.7 0 1 0 -4.0 0M376.2 281.7a1.9 1.5 0 1 0 3.8 0a1.9 1.5 0 1 0 -3.8 0M59.0 4.4a1.7 0.7 0 1 0 3.3 0a1.7 0.7 0 1 0 -3.3 0M72.6 70.6a0.7 1.2 0 1 0 1.3 0a0.7 1.2 0 1 0 -1.3 0M168.0 246.0a1.6 1.5 0 1 0 3.3 0a1.6 1.5 0 1 0 -3.3 0M190.9 193.4a1.5 1.0 0 1 0 3.0 0a1.5 1.0 0 1 0 -3.0 0M381.8 290.7a2.3 1.6 0 1 0 4.6 0a2.3 1.6 0 1 0 -4.6 0M120.2 67.1a1.2 0.7 0 1 0 2.4 0a1.2 0.7 0 1 0 -2.4 0M292.7 116.9a2.3 1.1 0 1 0 4.6 0a2.3 1.1 0 1 0 -4.6 0M368.2 247.4a0.6 0.9 0 1 0 1.2 0a0.6 0.9 0 1 0 -1.2 0M347.9 137.2a2.6 1.2 0 1 0 5.1 0a2.6 1.2 0 1 0 -5.1 0M26.0 183.8a2.2 1.0 0 1 0 4.3 0a2.2 1.0 0 1 0 -4.3 0M31.0 97.1a2.5 1.7 0 1 0 5.1 0a2.5 1.7 0 1 0 -5.1 0M44.6 71.9a0.8 0.7 0 1 0 1.6 0a0.8 0.7 0 1 0 -1.6 0M305.1 51.9a1.7 1.2 0 1 0 3.4 0a1.7 1.2 0 1 0 -3.4 0M72.6 213.7a0.9 1.5 0 1 0 1.7 0a0.9 1.5 0 1 0 -1.7 0M43.8 122.9a1.0 1.0 0 1 0 2.1 0a1.0 1.0 0 1 0 -2.1 0M372.6 234.6a1.2 1.8 0 1 0 2.4 0a1.2 1.8 0 1 0 -2.4 0M78.8 115.1a2.3 1.5 0 1 0 4.6 0a2.3 1.5 0 1 0 -4.6 0M37.6 288.9a1.0 1.0 0 1 0 2.1 0a1.0 1.0 0 1 0 -2.1 0M296.3 96.1a1.2 0.7 0 1 0 2.4 0a1.2 0.7 0 1 0 -2.4 0M33.6 170.2a1.1 1.4 0 1 0 2.2 0a1.1 1.4 0 1 0 -2.2 0M140.6 132.3a2.5 1.3 0 1 0 5.0 0a2.5 1.3 0 1 0 -5.0 0M220.2 253.0a1.0 0.8 0 1 0 1.9 0a1.0 0.8 0 1 0 -1.9 0M348.6 238.8a1.1 0.9 0 1 0 2.2 0a1.1 0.9 0 1 0 -2.2 0M283.7 274.6a1.0 1.9 0 1 0 2.0 0a1.0 1.9 0 1 0 -2.0 0M338.2 176.2a1.4 0.7 0 1 0 2.9 0a1.4 0.7 0 1 0 -2.9 0M13.8 281.1a1.1 1.6 0 1 0 2.2 0a1.1 1.6 0 1 0 -2.2 0M97.1 240.5a1.8 1.0 0 1 0 3.6 0a1.8 1.0 0 1 0 -3.6 0M66.8 210.3a0.7 0.9 0 1 0 1.5 0a0.7 0.9 0 1 0 -1.5 0M213.5 248.9a1.8 1.0 0 1 0 3.7 0a1.8 1.0 0 1 0 -3.7 0M352.6 59.6a0.6 1.0 0 1 0 1.3 0a0.6 1.0 0 1 0 -1.3 0M170.6 17.7a1.0 1.1 0 1 0 1.9 0a1.0 1.1 0 1 0 -1.9 0M219.0 38.4a1.3 1.8 0 1 0 2.6 0a1.3 1.8 0 1 0 -2.6 0M375.5 191.8a2.0 1.4 0 1 0 4.0 0a2.0 1.4 0 1 0 -4.0 0M53.4 10.2a0.6 1.9 0 1 0 1.3 0a0.6 1.9 0 1 0 -1.3 0M269.2 281.1a0.6 1.5 0 1 0 1.3 0a0.6 1.5 0 1 0 -1.3 0M184.4 213.3a1.2 2.0 0 1 0 2.5 0a1.2 2.0 0 1 0 -2.5 0M26.9 159.5a2.1 1.9 0 1 0 4.1 0a2.1 1.9 0 1 0 -4.1 0M281.6 205.5a2.2 1.9 0 1 0 4.4 0a2.2 1.9 0 1 0 -4.4 0M133.1 200.1a2.4 1.8 0 1 0 4.8 0a2.4 1.8 0 1 0 -4.8 0M158.3 230.8a2.3 1.4 0 1 0 4.7 0a2.3 1.4 0 1 0 -4.7 0M238.8 111.6a1.8 1.5 0 1 0 3.5 0a1.8 1.5 0 1 0 -3.5 0M28.3 186.7a2.6 1.8 0 1 0 5.2 0a2.6 1.8 0 1 0 -5.2 0M278.3 113.4a2.1 1.4 0 1 0 4.1 0a2.1 1.4 0 1 0 -4.1 0M168.8 244.8a0.8 1.7 0 1 0 1.5 0a0.8 1.7 0 1 0 -1.5 0M9.9 175.6a1.6 0.9 0 1 0 3.1 0a1.6 0.9 0 1 0 -3.1 0M267.0 145.2a1.8 1.9 0 1 0 3.7 0a1.8 1.9 0 1 0 -3.7 0M97.3 3.3a1.2 1.5 0 1 0 2.4 0a1.2 1.5 0 1 0 -2.4 0M75.6 49.5a2.4 1.5 0 1 0 4.8 0a2.4 1.5 0 1 0 -4.8 0M168.9 260.4a1.3 1.5 0 1 0 2.5 0a1.3 1.5 0 1 0 -2.5 0M74.2 125.8a2.2 1.9 0 1 0 4.4 0a2.2 1.9 0 1 0 -4.4 0M337.1 112.3a1.8 1.0 0 1 0 3.5 0a1.8 1.0 0 1 0 -3.5 0M50.2 145.0a2.3 1.8 0 1 0 4.5 0a2.3 1.8 0 1 0 -4.5 0M272.7 277.4a1.2 0.8 0 1 0 2.3 0a1.2 0.8 0 1 0 -2.3 0M172.5 80.3a1.0 1.2 0 1 0 2.1 0a1.0 1.2 0 1 0 -2.1 0M239.7 144.2a1.2 1.8 0 1 0 2.5 0a1.2 1.8 0 1 0 -2.5 0M377.3 132.1a0.7 0.6 0 1 0 1.5 0a0.7 0.6 0 1 0 -1.5 0M334.0 12.1a2.0 1.4 0 1 0 4.0 0a2.0 1.4 0 1 0 -4.0 0M118.3 231.1a0.6 0.8 0 1 0 1.3 0a0.6 0.8 0 1 0 -1.3 0M172.9 7.2a2.3 0.9 0 1 0 4.5 0a2.3 0.9 0 1 0 -4.5 0M52.4 13.7a1.9 1.2 0 1 0 3.7 0a1.9 1.2 0 1 0 -3.7 0M240.3 191.3a2.2 1.9 0 1 0 4.4 0a2.2 1.9 0 1 0 -4.4 0M262.0 58.2a1.6 0.9 0 1 0 3.1 0a1.6 0.9 0 1 0 -3.1 0M2.1 137.9a2.0 0.9 0 1 0 4.1 0a2.0 0.9 0 1 0 -4.1 0M102.9 101.0a2.0 1.3 0 1 0 4.0 0a2.0 1.3 0 1 0 -4.0 0M235.2 220.8a1.4 1.7 0 1 0 2.8 0a1.4 1.7 0 1 0 -2.8 0M346.4 25.5a2.5 1.6 0 1 0 4.9 0a2.5 1.6 0 1 0 -4.9 0M48.2 132.4a1.9 1.9 0 1 0 3.7 0a1.9 1.9 0 1 0 -3.7 0M142.7 166.1a2.4 1.7 0 1 0 4.7 0a2.4 1.7 0 1 0 -4.7 0M361.6 135.4a1.9 0.9 0 1 0 3.8 0a1.9 0.9 0 1 0 -3.8 0M276.1 239.0a1.9 1.6 0 1 0 3.8 0a1.9 1.6 0 1 0 -3.8 0M79.6 262.8a2.6 2.0 0 1 0 5.1 0a2.6 2.0 0 1 0 -5.1 0M205.5 230.9a1.2 1.9 0 1 0 2.5 0a1.2 1.9 0 1 0 -2.5 0M328.7 101.8a0.8 1.2 0 1 0 1.5 0a0.8 1.2 0 1 0 -1.5 0M210.3 224.3a1.6 0.6 0 1 0 3.1 0a1.6 0.6 0 1 0 -3.1 0M309.3 18.7a2.2 0.8 0 1 0 4.4 0a2.2 0.8 0 1 0 -4.4 0M128.1 230.1a0.9 0.8 0 1 0 1.8 0a0.9 0.8 0 1 0 -1.8 0M196.6 211.3a2.3 1.6 0 1 0 4.6 0a2.3 1.6 0 1 0 -4.6 0M361.6 143.8a2.5 0.7 0 1 0 5.0 0a2.5 0.7 0 1 0 -5.0 0M84.1 153.8a1.2 1.6 0 1 0 2.4 0a1.2 1.6 0 1 0 -2.4 0M243.7 152.7a2.3 1.4 0 1 0 4.6 0a2.3 1.4 0 1 0 -4.6 0M117.7 111.3a2.3 1.9 0 1 0 4.6 0a2.3 1.9 0 1 0 -4.6 0M77.6 248.4a2.5 1.3 0 1 0 5.1 0a2.5 1.3 0 1 0 -5.1 0M218.9 58.7a1.7 1.3 0 1 0 3.3 0a1.7 1.3 0 1 0 -3.3 0M230.5 8.1a2.5 1.3 0 1 0 5.1 0a2.5 1.3 0 1 0 -5.1 0M152.5 233.9a1.7 1.3 0 1 0 3.5 0a1.7 1.3 0 1 0 -3.5 0M264.4 19.2a1.7 1.2 0 1 0 3.4 0a1.7 1.2 0 1 0 -3.4 0M367.3 269.6a1.1 1.3 0 1 0 2.3 0a1.1 1.3 0 1 0 -2.3 0M46.7 126.6a2.2 1.9 0 1 0 4.5 0a2.2 1.9 0 1 0 -4.5 0M182.5 92.6a1.0 1.5 0 1 0 2.0 0a1.0 1.5 0 1 0 -2.0 0M354.1 37.8a2.2 0.6 0 1 0 4.3 0a2.2 0.6 0 1 0 -4.3 0M72.8 66.4a2.0 1.1 0 1 0 3.9 0a2.0 1.1 0 1 0 -3.9 0M136.0 181.0a0.8 1.6 0 1 0 1.6 0a0.8 1.6 0 1 0 -1.6 0M46.2 149.1a1.1 0.9 0 1 0 2.2 0a1.1 0.9 0 1 0 -2.2 0M202.8 127.5a1.4 1.2 0 1 0 2.7 0a1.4 1.2 0 1 0 -2.7 0M202.8 46.6a1.0 1.5 0 1 0 2.0 0a1.0 1.5 0 1 0 -2.0 0M243.5 154.6a2.3 1.5 0 1 0 4.6 0a2.3 1.5 0 1 0 -4.6 0M327.8 67.9a2.1 1.7 0 1 0 4.2 0a2.1 1.7 0 1 0 -4.2 0M346.3 92.2a1.2 1.9 0 1 0 2.5 0a1.2 1.9 0 1 0 -2.5 0M81.6 291.5a2.4 0.8 0 1 0 4.8 0a2.4 0.8 0 1 0 -4.8 0M91.0 212.2a1.1 0.7 0 1 0 2.2 0a1.1 0.7 0 1 0 -2.2 0M318.2 123.1a2.2 0.8 0 1 0 4.4 0a2.2 0.8 0 1 0 -4.4 0M154.4 200.1a0.6 0.9 0 1 0 1.3 0a0.6 0.9 0 1 0 -1.3 0M260.2 266.1a2.5 0.8 0 1 0 5.1 0a2.5 0.8 0 1 0 -5.1 0M193.1 221.4a1.6 1.6 0 1 0 3.2 0a1.6 1.6 0 1 0 -3.2 0M72.0 20.6a0.8 0.7 0 1 0 1.6 0a0.8 0.7 0 1 0 -1.6 0M210.7 150.3a1.7 0.8 0 1 0 3.5 0a1.7 0.8 0 1 0 -3.5 0M68.8 59.5a2.3 2.0 0 1 0 4.6 0a2.3 2.0 0 1 0 -4.6 0M356.1 27.8a0.7 1.9 0 1 0 1.4 0a0.7 1.9 0 1 0 -1.4 0M176.6 223.3a1.3 1.3 0 1 0 2.5 0a1.3 1.3 0 1 0 -2.5 0M196.6 125.6a1.8 0.6 0 1 0 3.6 0a1.8 0.6 0 1 0 -3.6 0M268.9 246.5a1.0 1.2 0 1 0 1.9 0a1.0 1.2 0 1 0 -1.9 0M283.7 118.3a1.0 0.8 0 1 0 2.0 0a1.0 0.8 0 1 0 -2.0 0M194.9 4.5a2.4 1.7 0 1 0 4.8 0a2.4 1.7 0 1 0 -4.8 0M269.4 251.3a1.9 1.2 0 1 0 3.7 0a1.9 1.2 0 1 0 -3.7 0M228.3 147.3a2.6 1.7 0 1 0 5.1 0a2.6 1.7 0 1 0 -5.1 0M97.3 266.1a2.1 1.7 0 1 0 4.2 0a2.1 1.7 0 1 0 -4.2 0M311.2 118.4a2.4 1.8 0 1 0 4.8 0a2.4 1.8 0 1 0 -4.8 0M265.4 224.0a2.1 1.2 0 1 0 4.3 0a2.1 1.2 0 1 0 -4.3 0M276.9 20.6a1.3 1.3 0 1 0 2.6 0a1.3 1.3 0 1 0 -2.6 0M2.2 103.8a1.9 1.5 0 1 0 3.8 0a1.9 1.5 0 1 0 -3.8 0M87.4 275.8a1.9 1.1 0 1 0 3.9 0a1.9 1.1 0 1 0 -3.9 0M252.3 166.3a1.7 1.1 0 1 0 3.3 0a1.7 1.1 0 1 0 -3.3 0M383.0 187.5a2.0 1.7 0 1 0 4.0 0a2.0 1.7 0 1 0 -4.0 0M375.5 6.7a1.8 1.6 0 1 0 3.7 0a1.8 1.6 0 1 0 -3.7 0M98.1 117.3a0.7 0.9 0 1 0 1.4 0a0.7 0.9 0 1 0 -1.4 0M143.5 28.7a1.1 1.9 0 1 0 2.2 0a1.1 1.9 0 1 0 -2.2 0M209.2 148.3a2.5 1.4 0 1 0 5.1 0a2.5 1.4 0 1 0 -5.1 0M380.9 186.3a2.2 0.7 0 1 0 4.4 0a2.2 0.7 0 1 0 -4.4 0M229.4 221.7a0.7 1.9 0 1 0 1.4 0a0.7 1.9 0 1 0 -1.4 0M60.6 137.8a0.9 1.3 0 1 0 1.9 0a0.9 1.3 0 1 0 -1.9 0M232.8 17.1a2.5 1.2 0 1 0 5.0 0a2.5 1.2 0 1 0 -5.0 0M201.5 174.6a1.3 1.0 0 1 0 2.7 0a1.3 1.0 0 1 0 -2.7 0M251.1 163.7a1.2 1.6 0 1 0 2.3 0a1.2 1.6 0 1 0 -2.3 0M112.9 4.1a1.1 0.7 0 1 0 2.2 0a1.1 0.7 0 1 0 -2.2 0M58.9 220.4a1.4 1.9 0 1 0 2.8 0a1.4 1.9 0 1 0 -2.8 0M285.5 14.6a2.6 1.9 0 1 0 5.2 0a2.6 1.9 0 1 0 -5.2 0M26.8 264.4a1.5 1.3 0 1 0 2.9 0a1.5 1.3 0 1 0 -2.9 0M373.0 71.2a1.6 1.9 0 1 0 3.3 0a1.6 1.9 0 1 0 -3.3 0M275.7 136.8a2.6 1.7 0 1 0 5.1 0a2.6 1.7 0 1 0 -5.1 0M230.5 33.6a1.8 1.2 0 1 0 3.7 0a1.8 1.2 0 1 0 -3.7 0M76.8 15.2a1.7 0.8 0 1 0 3.3 0a1.7 0.8 0 1 0 -3.3 0M169.0 195.0a1.5 1.0 0 1 0 3.0 0a1.5 1.0 0 1 0 -3.0 0M222.0 122.5a2.2 1.3 0 1 0 4.3 0a2.2 1.3 0 1 0 -4.3 0M382.0 278.2a2.1 0.9 0 1 0 4.1 0a2.1 0.9 0 1 0 -4.1 0M41.7 260.7a2.2 1.5 0 1 0 4.3 0a2.2 1.5 0 1 0 -4.3 0M136.3 79.3a2.0 1.4 0 1 0 3.9 0a2.0 1.4 0 1 0 -3.9 0M225.7 184.9a2.1 0.9 0 1 0 4.2 0a2.1 0.9 0 1 0 -4.2 0M93.4 286.1a2.4 1.8 0 1 0 4.9 0a2.4 1.8 0 1 0 -4.9 0M14.1 17.7a1.1 1.2 0 1 0 2.3 0a1.1 1.2 0 1 0 -2.3 0M238.3 29.9a1.7 0.7 0 1 0 3.4 0a1.7 0.7 0 1 0 -3.4 0M31.6 197.5a1.7 1.5 0 1 0 3.4 0a1.7 1.5 0 1 0 -3.4 0M142.7 139.7a1.0 1.1 0 1 0 2.0 0a1.0 1.1 0 1 0 -2.0 0M286.0 244.9a0.7 0.8 0 1 0 1.5 0a0.7 0.8 0 1 0 -1.5 0M309.4 182.1a2.1 0.9 0 1 0 4.3 0a2.1 0.9 0 1 0 -4.3 0M161.2 75.4a2.2 1.1 0 1 0 4.4 0a2.2 1.1 0 1 0 -4.4 0M250.4 288.8a1.3 1.4 0 1 0 2.5 0a1.3 1.4 0 1 0 -2.5 0M285.8 268.9a1.5 1.1 0 1 0 2.9 0a1.5 1.1 0 1 0 -2.9 0M36.6 255.6a0.8 0.7 0 1 0 1.5 0a0.8 0.7 0 1 0 -1.5 0M215.3 141.6a2.0 1.0 0 1 0 3.9 0a2.0 1.0 0 1 0 -3.9 0M297.5 22.2a1.0 1.5 0 1 0 2.1 0a1.0 1.5 0 1 0 -2.1 0M29.4 88.7a2.0 1.6 0 1 0 4.1 0a2.0 1.6 0 1 0 -4.1 0M107.6 41.7a1.3 1.6 0 1 0 2.6 0a1.3 1.6 0 1 0 -2.6 0M139.0 34.3a2.0 1.4 0 1 0 4.0 0a2.0 1.4 0 1 0 -4.0 0M351.2 274.5a2.4 1.2 0 1 0 4.9 0a2.4 1.2 0 1 0 -4.9 0M307.9 89.0a1.2 1.2 0 1 0 2.5 0a1.2 1.2 0 1 0 -2.5 0M358.7 261.3a1.1 1.1 0 1 0 2.2 0a1.1 1.1 0 1 0 -2.2 0M139.4 106.1a1.4 1.1 0 1 0 2.8 0a1.4 1.1 0 1 0 -2.8 0M72.9 164.6a2.2 1.4 0 1 0 4.4 0a2.2 1.4 0 1 0 -4.4 0M321.1 164.3a1.0 1.7 0 1 0 1.9 0a1.0 1.7 0 1 0 -1.9 0M338.5 82.2a0.6 1.3 0 1 0 1.3 0a0.6 1.3 0 1 0 -1.3 0M207.0 165.7a2.5 1.5 0 1 0 5.1 0a2.5 1.5 0 1 0 -5.1 0M308.0 18.7a1.7 1.7 0 1 0 3.4 0a1.7 1.7 0 1 0 -3.4 0M30.3 23.8a2.1 1.9 0 1 0 4.1 0a2.1 1.9 0 1 0 -4.1 0M31.7 185.2a0.9 1.6 0 1 0 1.8 0a0.9 1.6 0 1 0 -1.8 0M248.8 71.7a1.0 1.7 0 1 0 2.1 0a1.0 1.7 0 1 0 -2.1 0M199.4 223.3a1.4 1.1 0 1 0 2.8 0a1.4 1.1 0 1 0 -2.8 0M371.2 196.3a1.6 1.4 0 1 0 3.2 0a1.6 1.4 0 1 0 -3.2 0M275.1 206.8a2.4 1.2 0 1 0 4.9 0a2.4 1.2 0 1 0 -4.9 0M315.8 194.7a2.3 1.7 0 1 0 4.6 0a2.3 1.7 0 1 0 -4.6 0M318.5 259.5a2.5 1.5 0 1 0 5.0 0a2.5 1.5 0 1 0 -5.0 0M199.5 207.3a2.2 1.2 0 1 0 4.4 0a2.2 1.2 0 1 0 -4.4 0M159.8 42.7a2.1 2.0 0 1 0 4.2 0a2.1 2.0 0 1 0 -4.2 0M143.6 49.0a1.0 1.2 0 1 0 2.0 0a1.0 1.2 0 1 0 -2.0 0M111.7 283.2a0.7 1.0 0 1 0 1.4 0a0.7 1.0 0 1 0 -1.4 0M42.1 189.2a2.2 0.9 0 1 0 4.3 0a2.2 0.9 0 1 0 -4.3 0M22.2 134.0a1.8 1.9 0 1 0 3.5 0a1.8 1.9 0 1 0 -3.5 0M13.0 31.7a1.0 0.9 0 1 0 1.9 0a1.0 0.9 0 1 0 -1.9 0M88.8 209.4a1.8 0.9 0 1 0 3.6 0a1.8 0.9 0 1 0 -3.6 0M70.3 82.1a0.9 1.7 0 1 0 1.9 0a0.9 1.7 0 1 0 -1.9 0M117.8 160.1a2.2 1.3 0 1 0 4.5 0a2.2 1.3 0 1 0 -4.5 0M97.9 259.1a2.4 1.1 0 1 0 4.9 0a2.4 1.1 0 1 0 -4.9 0M209.2 279.4a1.6 0.9 0 1 0 3.1 0a1.6 0.9 0 1 0 -3.1 0M16.9 276.7a2.2 1.1 0 1 0 4.4 0a2.2 1.1 0 1 0 -4.4 0M202.0 150.6a1.1 2.0 0 1 0 2.3 0a1.1 2.0 0 1 0 -2.3 0M252.5 69.4a0.6 1.3 0 1 0 1.2 0a0.6 1.3 0 1 0 -1.2 0M141.0 232.7a2.0 1.4 0 1 0 4.1 0a2.0 1.4 0 1 0 -4.1 0M59.3 45.8a1.2 1.0 0 1 0 2.5 0a1.2 1.0 0 1 0 -2.5 0M332.8 150.7a1.9 2.0 0 1 0 3.7 0a1.9 2.0 0 1 0 -3.7 0M101.7 156.1a0.9 1.7 0 1 0 1.8 0a0.9 1.7 0 1 0 -1.8 0M-1.8 239.9a2.3 1.8 0 1 0 4.6 0a2.3 1.8 0 1 0 -4.6 0M29.7 78.8a2.0 0.7 0 1 0 4.1 0a2.0 0.7 0 1 0 -4.1 0M182.3 136.8a2.5 1.4 0 1 0 5.0 0a2.5 1.4 0 1 0 -5.0 0M327.9 88.6a2.2 1.2 0 1 0 4.4 0a2.2 1.2 0 1 0 -4.4 0M350.7 26.6a2.3 0.9 0 1 0 4.5 0a2.3 0.9 0 1 0 -4.5 0M208.3 153.5a0.9 1.8 0 1 0 1.8 0a0.9 1.8 0 1 0 -1.8 0M119.1 90.7a0.8 1.0 0 1 0 1.5 0a0.8 1.0 0 1 0 -1.5 0M178.6 208.8a1.3 1.6 0 1 0 2.6 0a1.3 1.6 0 1 0 -2.6 0M39.2 115.1a1.5 2.0 0 1 0 3.0 0a1.5 2.0 0 1 0 -3.0 0M318.8 190.9a0.6 1.1 0 1 0 1.2 0a0.6 1.1 0 1 0 -1.2 0M271.6 69.3a1.7 1.2 0 1 0 3.5 0a1.7 1.2 0 1 0 -3.5 0M1.8 289.6a2.2 0.9 0 1 0 4.4 0a2.2 0.9 0 1 0 -4.4 0M235.8 84.8a1.4 1.4 0 1 0 2.7 0a1.4 1.4 0 1 0 -2.7 0M113.4 98.5a1.4 1.5 0 1 0 2.8 0a1.4 1.5 0 1 0 -2.8 0M96.7 58.4a2.1 1.1 0 1 0 4.1 0a2.1 1.1 0 1 0 -4.1 0M361.8 164.3a2.0 1.1 0 1 0 4.1 0a2.0 1.1 0 1 0 -4.1 0M317.5 26.9a0.9 0.7 0 1 0 1.8 0a0.9 0.7 0 1 0 -1.8 0M260.0 206.8a1.0 1.2 0 1 0 1.9 0a1.0 1.2 0 1 0 -1.9 0M321.4 173.1a0.8 0.9 0 1 0 1.6 0a0.8 0.9 0 1 0 -1.6 0M59.1 36.2a1.4 0.7 0 1 0 2.8 0a1.4 0.7 0 1 0 -2.8 0M352.8 124.7a1.6 1.5 0 1 0 3.2 0a1.6 1.5 0 1 0 -3.2 0M293.9 239.8a1.4 1.1 0 1 0 2.7 0a1.4 1.1 0 1 0 -2.7 0M157.3 4.5a1.4 1.6 0 1 0 2.8 0a1.4 1.6 0 1 0 -2.8 0M376.1 230.6a1.9 1.5 0 1 0 3.8 0a1.9 1.5 0 1 0 -3.8 0M5.9 96.7a1.3 1.5 0 1 0 2.6 0a1.3 1.5 0 1 0 -2.6 0M39.3 110.3a1.6 1.7 0 1 0 3.2 0a1.6 1.7 0 1 0 -3.2 0M316.8 178.5a0.9 1.7 0 1 0 1.8 0a0.9 1.7 0 1 0 -1.8 0M346.3 160.1a1.3 1.3 0 1 0 2.6 0a1.3 1.3 0 1 0 -2.6 0M52.0 208.3a2.6 1.3 0 1 0 5.1 0a2.6 1.3 0 1 0 -5.1 0M274.4 244.0a1.0 1.9 0 1 0 2.0 0a1.0 1.9 0 1 0 -2.0 0M240.7 57.8a0.8 0.9 0 1 0 1.5 0a0.8 0.9 0 1 0 -1.5 0M220.7 203.6a1.3 1.9 0 1 0 2.5 0a1.3 1.9 0 1 0 -2.5 0M138.2 135.2a0.8 2.0 0 1 0 1.7 0a0.8 2.0 0 1 0 -1.7 0M50.5 264.0a1.7 1.4 0 1 0 3.4 0a1.7 1.4 0 1 0 -3.4 0M213.3 77.2a2.4 2.0 0 1 0 4.8 0a2.4 2.0 0 1 0 -4.8 0M313.9 175.6a0.8 1.8 0 1 0 1.7 0a0.8 1.8 0 1 0 -1.7 0M110.0 261.9a1.1 1.4 0 1 0 2.2 0a1.1 1.4 0 1 0 -2.2 0M318.1 54.2a1.7 0.7 0 1 0 3.4 0a1.7 0.7 0 1 0 -3.4 0M9.8 52.6a2.6 1.9 0 1 0 5.1 0a2.6 1.9 0 1 0 -5.1 0M251.5 89.8a1.9 1.6 0 1 0 3.9 0a1.9 1.6 0 1 0 -3.9 0M144.7 172.8a2.2 0.6 0 1 0 4.4 0a2.2 0.6 0 1 0 -4.4 0M75.9 136.7a0.9 1.1 0 1 0 1.8 0a0.9 1.1 0 1 0 -1.8 0M217.6 50.7a1.6 1.0 0 1 0 3.3 0a1.6 1.0 0 1 0 -3.3 0M216.8 97.0a1.9 0.7 0 1 0 3.8 0a1.9 0.7 0 1 0 -3.8 0M255.8 42.3a2.5 1.4 0 1 0 5.0 0a2.5 1.4 0 1 0 -5.0 0M179.1 120.1a1.8 1.6 0 1 0 3.7 0a1.8 1.6 0 1 0 -3.7 0M290.3 219.5a1.6 2.0 0 1 0 3.1 0a1.6 2.0 0 1 0 -3.1 0M321.3 249.7a1.4 1.2 0 1 0 2.8 0a1.4 1.2 0 1 0 -2.8 0M216.2 264.3a1.7 1.3 0 1 0 3.3 0a1.7 1.3 0 1 0 -3.3 0M165.2 264.1a1.2 0.7 0 1 0 2.5 0a1.2 0.7 0 1 0 -2.5 0M277.3 262.8a2.1 1.4 0 1 0 4.1 0a2.1 1.4 0 1 0 -4.1 0M287.7 89.0a1.8 0.7 0 1 0 3.6 0a1.8 0.7 0 1 0 -3.6 0M46.3 130.5a1.6 1.2 0 1 0 3.2 0a1.6 1.2 0 1 0 -3.2 0M18.4 202.9a1.7 0.9 0 1 0 3.3 0a1.7 0.9 0 1 0 -3.3 0M116.9 115.5a1.1 0.7 0 1 0 2.1 0a1.1 0.7 0 1 0 -2.1 0M348.9 282.2a1.9 1.8 0 1 0 3.9 0a1.9 1.8 0 1 0 -3.9 0M161.2 235.1a1.0 1.6 0 1 0 2.1 0a1.0 1.6 0 1 0 -2.1 0M217.4 263.8a0.8 1.7 0 1 0 1.6 0a0.8 1.7 0 1 0 -1.6 0M45.2 157.0a2.5 0.6 0 1 0 5.0 0a2.5 0.6 0 1 0 -5.0 0M92.7 87.4a1.2 0.7 0 1 0 2.5 0a1.2 0.7 0 1 0 -2.5 0M343.2 238.1a1.4 1.1 0 1 0 2.8 0a1.4 1.1 0 1 0 -2.8 0M224.8 13.4a0.7 1.9 0 1 0 1.3 0a0.7 1.9 0 1 0 -1.3 0M116.1 145.5a2.5 2.0 0 1 0 4.9 0a2.5 2.0 0 1 0 -4.9 0M180.8 60.3a1.2 1.9 0 1 0 2.4 0a1.2 1.9 0 1 0 -2.4 0M343.0 57.1a2.3 1.1 0 1 0 4.6 0a2.3 1.1 0 1 0 -4.6 0M179.5 50.2a2.4 2.0 0 1 0 4.7 0a2.4 2.0 0 1 0 -4.7 0M76.8 184.7a1.0 1.8 0 1 0 2.0 0a1.0 1.8 0 1 0 -2.0 0M17.2 31.0a2.1 1.0 0 1 0 4.1 0a2.1 1.0 0 1 0 -4.1 0M344.6 253.9a2.0 0.8 0 1 0 4.1 0a2.0 0.8 0 1 0 -4.1 0M266.5 273.8a1.5 0.7 0 1 0 3.0 0a1.5 0.7 0 1 0 -3.0 0M83.9 89.7a2.0 0.9 0 1 0 4.0 0a2.0 0.9 0 1 0 -4.0 0M67.8 68.8a1.9 1.7 0 1 0 3.9 0a1.9 1.7 0 1 0 -3.9 0M141.0 193.3a2.4 1.4 0 1 0 4.7 0a2.4 1.4 0 1 0 -4.7 0M85.7 87.9a2.5 1.5 0 1 0 4.9 0a2.5 1.5 0 1 0 -4.9 0M105.8 186.9a0.8 2.0 0 1 0 1.6 0a0.8 2.0 0 1 0 -1.6 0M167.9 154.3a1.7 0.7 0 1 0 3.3 0a1.7 0.7 0 1 0 -3.3 0M229.8 83.1a1.1 1.7 0 1 0 2.2 0a1.1 1.7 0 1 0 -2.2 0M31.4 83.3a2.1 0.9 0 1 0 4.2 0a2.1 0.9 0 1 0 -4.2 0M106.5 160.0a1.0 1.9 0 1 0 1.9 0a1.0 1.9 0 1 0 -1.9 0M378.8 9.8a1.5 1.7 0 1 0 3.0 0a1.5 1.7 0 1 0 -3.0 0M146.5 271.3a1.6 0.9 0 1 0 3.2 0a1.6 0.9 0 1 0 -3.2 0M212.7 188.3a1.3 1.5 0 1 0 2.6 0a1.3 1.5 0 1 0 -2.6 0M299.8 150.9a1.6 1.8 0 1 0 3.2 0a1.6 1.8 0 1 0 -3.2 0M260.9 152.0a2.5 0.8 0 1 0 5.0 0a2.5 0.8 0 1 0 -5.0 0M298.4 48.2a1.8 0.9 0 1 0 3.6 0a1.8 0.9 0 1 0 -3.6 0M167.4 225.7a2.2 1.7 0 1 0 4.3 0a2.2 1.7 0 1 0 -4.3 0M89.8 142.8a1.0 1.4 0 1 0 2.1 0a1.0 1.4 0 1 0 -2.1 0M190.3 10.3a1.8 1.6 0 1 0 3.6 0a1.8 1.6 0 1 0 -3.6 0M219.5 254.9a1.0 0.8 0 1 0 1.9 0a1.0 0.8 0 1 0 -1.9 0M5.4 144.9a1.5 1.2 0 1 0 2.9 0a1.5 1.2 0 1 0 -2.9 0M100.5 233.2a0.7 1.9 0 1 0 1.5 0a0.7 1.9 0 1 0 -1.5 0M216.8 158.6a2.2 0.9 0 1 0 4.4 0a2.2 0.9 0 1 0 -4.4 0M55.6 90.8a0.7 1.0 0 1 0 1.4 0a0.7 1.0 0 1 0 -1.4 0M238.0 153.4a1.1 1.4 0 1 0 2.3 0a1.1 1.4 0 1 0 -2.3 0M33.1 239.6a0.9 1.0 0 1 0 1.9 0a0.9 1.0 0 1 0 -1.9 0M59.3 201.7a2.3 1.7 0 1 0 4.5 0a2.3 1.7 0 1 0 -4.5 0M22.2 119.9a1.3 0.9 0 1 0 2.7 0a1.3 0.9 0 1 0 -2.7 0M372.1 12.3a1.6 1.7 0 1 0 3.2 0a1.6 1.7 0 1 0 -3.2 0M378.2 42.2a1.5 1.6 0 1 0 3.0 0a1.5 1.6 0 1 0 -3.0 0M12.7 70.3a2.4 0.8 0 1 0 4.8 0a2.4 0.8 0 1 0 -4.8 0M149.8 87.0a1.4 0.7 0 1 0 2.9 0a1.4 0.7 0 1 0 -2.9 0M11.1 290.9a2.1 1.6 0 1 0 4.3 0a2.1 1.6 0 1 0 -4.3 0M86.8 73.9a1.7 0.9 0 1 0 3.4 0a1.7 0.9 0 1 0 -3.4 0M176.4 272.3a1.3 1.1 0 1 0 2.7 0a1.3 1.1 0 1 0 -2.7 0M377.1 178.4a0.7 1.2 0 1 0 1.4 0a0.7 1.2 0 1 0 -1.4 0M248.9 17.1a1.3 1.6 0 1 0 2.6 0a1.3 1.6 0 1 0 -2.6 0M330.4 172.5a2.4 1.2 0 1 0 4.7 0a2.4 1.2 0 1 0 -4.7 0M149.9 246.2a1.4 1.7 0 1 0 2.7 0a1.4 1.7 0 1 0 -2.7 0M82.0 101.4a1.0 1.4 0 1 0 1.9 0a1.0 1.4 0 1 0 -1.9 0M62.1 59.5a1.0 1.3 0 1 0 2.1 0a1.0 1.3 0 1 0 -2.1 0M116.2 130.6a2.6 1.6 0 1 0 5.2 0a2.6 1.6 0 1 0 -5.2 0M330.8 59.7a1.4 0.7 0 1 0 2.7 0a1.4 0.7 0 1 0 -2.7 0M265.0 105.9a1.1 0.6 0 1 0 2.3 0a1.1 0.6 0 1 0 -2.3 0M68.7 76.6a1.4 1.9 0 1 0 2.8 0a1.4 1.9 0 1 0 -2.8 0M274.0 78.4a1.3 0.8 0 1 0 2.6 0a1.3 0.8 0 1 0 -2.6 0M358.5 105.0a2.1 1.6 0 1 0 4.3 0a2.1 1.6 0 1 0 -4.3 0M348.0 6.0a1.2 1.1 0 1 0 2.5 0a1.2 1.1 0 1 0 -2.5 0M30.8 257.7a1.3 1.7 0 1 0 2.5 0a1.3 1.7 0 1 0 -2.5 0M198.5 16.0a1.4 0.9 0 1 0 2.8 0a1.4 0.9 0 1 0 -2.8 0M13.9 44.1a1.8 0.6 0 1 0 3.6 0a1.8 0.6 0 1 0 -3.6 0M118.5 123.8a1.7 0.8 0 1 0 3.4 0a1.7 0.8 0 1 0 -3.4 0M270.0 76.0a2.1 1.5 0 1 0 4.1 0a2.1 1.5 0 1 0 -4.1 0M55.5 59.8a1.2 1.6 0 1 0 2.3 0a1.2 1.6 0 1 0 -2.3 0M153.7 112.9a2.3 0.9 0 1 0 4.7 0a2.3 0.9 0 1 0 -4.7 0M111.4 100.7a1.0 0.7 0 1 0 2.1 0a1.0 0.7 0 1 0 -2.1 0M7.7 184.1a1.7 1.7 0 1 0 3.5 0a1.7 1.7 0 1 0 -3.5 0M373.7 87.0a1.9 1.9 0 1 0 3.9 0a1.9 1.9 0 1 0 -3.9 0M81.3 201.2a1.9 1.9 0 1 0 3.9 0a1.9 1.9 0 1 0 -3.9 0M332.5 68.5a1.9 0.7 0 1 0 3.7 0a1.9 0.7 0 1 0 -3.7 0M163.9 114.6a0.7 1.1 0 1 0 1.4 0a0.7 1.1 0 1 0 -1.4 0M125.2 145.2a1.2 0.8 0 1 0 2.3 0a1.2 0.8 0 1 0 -2.3 0M154.0 138.8a0.9 1.5 0 1 0 1.9 0a0.9 1.5 0 1 0 -1.9 0M91.0 27.2a1.3 1.2 0 1 0 2.6 0a1.3 1.2 0 1 0 -2.6 0M56.1 170.1a2.0 1.4 0 1 0 4.0 0a2.0 1.4 0 1 0 -4.0 0M268.2 6.7a1.4 1.1 0 1 0 2.8 0a1.4 1.1 0 1 0 -2.8 0M23.5 118.1a0.7 1.3 0 1 0 1.4 0a0.7 1.3 0 1 0 -1.4 0M224.3 136.9a1.3 1.0 0 1 0 2.5 0a1.3 1.0 0 1 0 -2.5 0M6.7 101.3a2.4 1.4 0 1 0 4.8 0a2.4 1.4 0 1 0 -4.8 0M99.9 195.1a1.0 1.3 0 1 0 1.9 0a1.0 1.3 0 1 0 -1.9 0M235.5 278.8a1.3 1.4 0 1 0 2.7 0a1.3 1.4 0 1 0 -2.7 0M361.0 225.3a1.9 1.5 0 1 0 3.7 0a1.9 1.5 0 1 0 -3.7 0M157.1 121.3a1.2 1.8 0 1 0 2.3 0a1.2 1.8 0 1 0 -2.3 0M336.3 111.5a2.4 0.7 0 1 0 4.8 0a2.4 0.7 0 1 0 -4.8 0M51.1 148.1a1.2 1.1 0 1 0 2.4 0a1.2 1.1 0 1 0 -2.4 0M375.2 43.8a1.0 0.9 0 1 0 2.0 0a1.0 0.9 0 1 0 -2.0 0M261.3 68.5a0.6 1.4 0 1 0 1.2 0a0.6 1.4 0 1 0 -1.2 0M150.1 69.9a1.6 1.5 0 1 0 3.2 0a1.6 1.5 0 1 0 -3.2 0M209.3 182.3a1.7 1.8 0 1 0 3.4 0a1.7 1.8 0 1 0 -3.4 0M371.7 97.4a1.3 1.8 0 1 0 2.6 0a1.3 1.8 0 1 0 -2.6 0M118.7 209.1a2.0 1.6 0 1 0 4.0 0a2.0 1.6 0 1 0 -4.0 0M370.2 240.7a0.9 1.5 0 1 0 1.8 0a0.9 1.5 0 1 0 -1.8 0M187.6 164.6a1.3 1.0 0 1 0 2.7 0a1.3 1.0 0 1 0 -2.7 0M287.3 155.9a1.1 0.9 0 1 0 2.1 0a1.1 0.9 0 1 0 -2.1 0M123.5 51.9a1.6 0.8 0 1 0 3.3 0a1.6 0.8 0 1 0 -3.3 0M23.5 20.1a0.8 1.6 0 1 0 1.6 0a0.8 1.6 0 1 0 -1.6 0M41.3 131.9a2.1 1.3 0 1 0 4.3 0a2.1 1.3 0 1 0 -4.3 0M60.2 253.0a2.3 0.7 0 1 0 4.7 0a2.3 0.7 0 1 0 -4.7 0M95.6 148.2a2.2 1.1 0 1 0 4.4 0a2.2 1.1 0 1 0 -4.4 0M273.6 73.5a2.0 1.1 0 1 0 4.1 0a2.0 1.1 0 1 0 -4.1 0M126.2 221.7a2.3 1.8 0 1 0 4.6 0a2.3 1.8 0 1 0 -4.6 0M216.5 122.8a2.0 1.5 0 1 0 4.0 0a2.0 1.5 0 1 0 -4.0 0M319.1 234.0a0.9 1.1 0 1 0 1.7 0a0.9 1.1 0 1 0 -1.7 0M256.7 67.5a1.0 0.6 0 1 0 1.9 0a1.0 0.6 0 1 0 -1.9 0M222.9 274.8a2.5 0.8 0 1 0 5.1 0a2.5 0.8 0 1 0 -5.1 0M262.9 122.4a1.9 1.2 0 1 0 3.7 0a1.9 1.2 0 1 0 -3.7 0M358.7 288.7a0.7 1.6 0 1 0 1.4 0a0.7 1.6 0 1 0 -1.4 0M44.4 12.4a1.2 1.6 0 1 0 2.3 0a1.2 1.6 0 1 0 -2.3 0M381.3 35.1a1.3 0.6 0 1 0 2.5 0a1.3 0.6 0 1 0 -2.5 0M207.5 141.0a1.3 1.0 0 1 0 2.7 0a1.3 1.0 0 1 0 -2.7 0M307.0 244.9a1.2 1.1 0 1 0 2.3 0a1.2 1.1 0 1 0 -2.3 0M235.3 223.5a2.6 1.1 0 1 0 5.1 0a2.6 1.1 0 1 0 -5.1 0M265.0 159.4a2.2 0.8 0 1 0 4.4 0a2.2 0.8 0 1 0 -4.4 0M64.9 31.3a2.5 1.0 0 1 0 4.9 0a2.5 1.0 0 1 0 -4.9 0M186.7 35.1a1.2 0.6 0 1 0 2.5 0a1.2 0.6 0 1 0 -2.5 0M216.0 41.9a1.9 1.0 0 1 0 3.7 0a1.9 1.0 0 1 0 -3.7 0M86.3 140.8a1.3 1.0 0 1 0 2.7 0a1.3 1.0 0 1 0 -2.7 0M17.3 18.8a2.4 1.0 0 1 0 4.8 0a2.4 1.0 0 1 0 -4.8 0M28.6 53.3a1.6 2.0 0 1 0 3.1 0a1.6 2.0 0 1 0 -3.1 0M76.3 253.2a1.6 1.2 0 1 0 3.1 0a1.6 1.2 0 1 0 -3.1 0M310.0 115.6a0.7 1.4 0 1 0 1.4 0a0.7 1.4 0 1 0 -1.4 0M251.7 181.9a1.2 1.9 0 1 0 2.3 0a1.2 1.9 0 1 0 -2.3 0M331.4 290.3a1.5 1.8 0 1 0 3.0 0a1.5 1.8 0 1 0 -3.0 0M278.5 51.3a0.7 0.8 0 1 0 1.3 0a0.7 0.8 0 1 0 -1.3 0M44.4 21.8a1.3 1.7 0 1 0 2.6 0a1.3 1.7 0 1 0 -2.6 0M118.7 150.2a0.6 0.9 0 1 0 1.2 0a0.6 0.9 0 1 0 -1.2 0M367.7 3.2a1.7 1.7 0 1 0 3.3 0a1.7 1.7 0 1 0 -3.3 0M303.6 214.7a1.4 1.7 0 1 0 2.8 0a1.4 1.7 0 1 0 -2.8 0M316.1 224.2a2.6 0.7 0 1 0 5.1 0a2.6 0.7 0 1 0 -5.1 0M363.9 117.5a2.0 1.0 0 1 0 4.0 0a2.0 1.0 0 1 0 -4.0 0M348.5 6.9a1.8 0.9 0 1 0 3.5 0a1.8 0.9 0 1 0 -3.5 0M147.6 107.8a1.9 1.7 0 1 0 3.8 0a1.9 1.7 0 1 0 -3.8 0M139.1 186.3a1.3 1.0 0 1 0 2.6 0a1.3 1.0 0 1 0 -2.6 0M347.7 93.9a0.8 1.1 0 1 0 1.6 0a0.8 1.1 0 1 0 -1.6 0M283.4 61.7a2.1 1.4 0 1 0 4.2 0a2.1 1.4 0 1 0 -4.2 0M261.1 51.8a0.8 0.8 0 1 0 1.6 0a0.8 0.8 0 1 0 -1.6 0M134.3 125.8a0.6 1.3 0 1 0 1.2 0a0.6 1.3 0 1 0 -1.2 0M153.6 93.9a1.7 1.9 0 1 0 3.3 0a1.7 1.9 0 1 0 -3.3 0M77.6 257.1a1.2 1.7 0 1 0 2.5 0a1.2 1.7 0 1 0 -2.5 0M40.3 288.4a1.5 1.9 0 1 0 2.9 0a1.5 1.9 0 1 0 -2.9 0M82.5 119.2a2.0 0.8 0 1 0 4.0 0a2.0 0.8 0 1 0 -4.0 0M102.8 197.7a2.5 1.1 0 1 0 5.0 0a2.5 1.1 0 1 0 -5.0 0M68.0 104.3a2.6 0.8 0 1 0 5.2 0a2.6 0.8 0 1 0 -5.2 0M242.5 110.4a1.9 0.9 0 1 0 3.8 0a1.9 0.9 0 1 0 -3.8 0M235.0 259.2a2.3 1.5 0 1 0 4.6 0a2.3 1.5 0 1 0 -4.6 0M193.5 165.8a0.8 1.8 0 1 0 1.7 0a0.8 1.8 0 1 0 -1.7 0M263.7 132.3a1.9 1.2 0 1 0 3.9 0a1.9 1.2 0 1 0 -3.9 0M146.3 67.2a1.8 1.4 0 1 0 3.6 0a1.8 1.4 0 1 0 -3.6 0M196.5 9.4a1.9 1.2 0 1 0 3.7 0a1.9 1.2 0 1 0 -3.7 0M226.0 173.6a2.5 0.8 0 1 0 4.9 0a2.5 0.8 0 1 0 -4.9 0M178.4 289.9a2.1 1.0 0 1 0 4.2 0a2.1 1.0 0 1 0 -4.2 0M282.2 288.9a1.4 1.8 0 1 0 2.8 0a1.4 1.8 0 1 0 -2.8 0M47.2 289.1a1.6 0.9 0 1 0 3.2 0a1.6 0.9 0 1 0 -3.2 0M321.0 189.6a2.5 1.8 0 1 0 5.0 0a2.5 1.8 0 1 0 -5.0 0M304.5 149.4a2.6 0.7 0 1 0 5.2 0a2.6 0.7 0 1 0 -5.2 0M333.9 207.8a1.1 1.7 0 1 0 2.2 0a1.1 1.7 0 1 0 -2.2 0M172.5 156.6a2.3 0.9 0 1 0 4.7 0a2.3 0.9 0 1 0 -4.7 0M106.9 188.0a0.7 1.4 0 1 0 1.5 0a0.7 1.4 0 1 0 -1.5 0M302.0 143.3a1.1 1.7 0 1 0 2.2 0a1.1 1.7 0 1 0 -2.2 0M327.5 225.1a1.7 1.9 0 1 0 3.4 0a1.7 1.9 0 1 0 -3.4 0M305.4 44.3a1.3 0.7 0 1 0 2.7 0a1.3 0.7 0 1 0 -2.7 0M11.8 101.0a2.3 1.8 0 1 0 4.7 0a2.3 1.8 0 1 0 -4.7 0M43.8 53.1a1.4 1.8 0 1 0 2.8 0a1.4 1.8 0 1 0 -2.8 0M236.8 263.3a0.7 2.0 0 1 0 1.5 0a0.7 2.0 0 1 0 -1.5 0M77.2 183.7a2.4 1.6 0 1 0 4.7 0a2.4 1.6 0 1 0 -4.7 0M74.4 195.2a1.5 0.6 0 1 0 2.9 0a1.5 0.6 0 1 0 -2.9 0M128.9 92.1a1.9 1.0 0 1 0 3.7 0a1.9 1.0 0 1 0 -3.7 0M231.2 202.9a1.0 0.8 0 1 0 1.9 0a1.0 0.8 0 1 0 -1.9 0M266.2 136.2a0.9 0.8 0 1 0 1.7 0a0.9 0.8 0 1 0 -1.7 0M361.0 178.1a1.3 0.9 0 1 0 2.6 0a1.3 0.9 0 1 0 -2.6 0M380.9 202.0a2.1 1.1 0 1 0 4.1 0a2.1 1.1 0 1 0 -4.1 0M118.6 119.2a0.9 1.5 0 1 0 1.8 0a0.9 1.5 0 1 0 -1.8 0M162.1 239.5a1.4 1.2 0 1 0 2.8 0a1.4 1.2 0 1 0 -2.8 0M193.7 275.0a1.3 1.6 0 1 0 2.6 0a1.3 1.6 0 1 0 -2.6 0M89.3 169.1a1.2 1.8 0 1 0 2.3 0a1.2 1.8 0 1 0 -2.3 0M108.3 249.5a2.0 1.2 0 1 0 3.9 0a2.0 1.2 0 1 0 -3.9 0M357.4 113.2a2.1 1.4 0 1 0 4.2 0a2.1 1.4 0 1 0 -4.2 0M171.2 18.7a1.4 1.0 0 1 0 2.9 0a1.4 1.0 0 1 0 -2.9 0M168.6 278.7a1.2 1.6 0 1 0 2.4 0a1.2 1.6 0 1 0 -2.4 0M257.3 71.5a1.4 0.8 0 1 0 2.8 0a1.4 0.8 0 1 0 -2.8 0M343.3 73.5a1.4 1.1 0 1 0 2.9 0a1.4 1.1 0 1 0 -2.9 0M314.1 248.3a1.8 1.4 0 1 0 3.6 0a1.8 1.4 0 1 0 -3.6 0M37.5 261.8a0.8 1.1 0 1 0 1.6 0a0.8 1.1 0 1 0 -1.6 0M142.2 211.1a1.9 1.1 0 1 0 3.9 0a1.9 1.1 0 1 0 -3.9 0M345.0 277.3a0.6 1.5 0 1 0 1.3 0a0.6 1.5 0 1 0 -1.3 0M179.1 105.6a1.5 1.0 0 1 0 3.1 0a1.5 1.0 0 1 0 -3.1 0M255.7 176.8a2.5 2.0 0 1 0 5.1 0a2.5 2.0 0 1 0 -5.1 0M379.9 115.4a2.3 1.5 0 1 0 4.5 0a2.3 1.5 0 1 0 -4.5 0M269.2 291.3a0.7 1.2 0 1 0 1.5 0a0.7 1.2 0 1 0 -1.5 0M153.5 191.6a1.0 2.0 0 1 0 2.1 0a1.0 2.0 0 1 0 -2.1 0M79.7 108.0a0.9 1.2 0 1 0 1.8 0a0.9 1.2 0 1 0 -1.8 0M284.7 24.4a0.9 1.5 0 1 0 1.9 0a0.9 1.5 0 1 0 -1.9 0M238.7 216.7a1.1 1.7 0 1 0 2.2 0a1.1 1.7 0 1 0 -2.2 0M280.5 226.6a0.8 1.3 0 1 0 1.7 0a0.8 1.3 0 1 0 -1.7 0M3.6 251.0a2.5 1.9 0 1 0 5.0 0a2.5 1.9 0 1 0 -5.0 0M7.6 102.5a1.7 1.3 0 1 0 3.3 0a1.7 1.3 0 1 0 -3.3 0M41.6 230.5a1.2 1.3 0 1 0 2.4 0a1.2 1.3 0 1 0 -2.4 0M47.1 165.8a0.9 0.7 0 1 0 1.7 0a0.9 0.7 0 1 0 -1.7 0M195.0 85.8a2.2 0.9 0 1 0 4.3 0a2.2 0.9 0 1 0 -4.3 0M158.3 15.9a1.0 1.2 0 1 0 2.1 0a1.0 1.2 0 1 0 -2.1 0M212.6 134.1a2.3 0.7 0 1 0 4.6 0a2.3 0.7 0 1 0 -4.6 0M324.8 45.2a2.5 1.3 0 1 0 5.1 0a2.5 1.3 0 1 0 -5.1 0M154.2 178.8a2.3 1.9 0 1 0 4.7 0a2.3 1.9 0 1 0 -4.7 0M158.2 3.1a0.9 1.7 0 1 0 1.8 0a0.9 1.7 0 1 0 -1.8 0M281.8 208.1a0.9 1.3 0 1 0 1.8 0a0.9 1.3 0 1 0 -1.8 0M9.8 32.2a1.2 2.0 0 1 0 2.4 0a1.2 2.0 0 1 0 -2.4 0M246.9 247.5a0.7 1.2 0 1 0 1.4 0a0.7 1.2 0 1 0 -1.4 0M29.3 76.2a0.8 1.9 0 1 0 1.6 0a0.8 1.9 0 1 0 -1.6 0M124.7 142.8a1.9 1.8 0 1 0 3.8 0a1.9 1.8 0 1 0 -3.8 0M362.8 165.8a1.6 1.9 0 1 0 3.2 0a1.6 1.9 0 1 0 -3.2 0M149.8 87.4a2.1 1.0 0 1 0 4.2 0a2.1 1.0 0 1 0 -4.2 0M140.1 125.3a1.6 1.1 0 1 0 3.1 0a1.6 1.1 0 1 0 -3.1 0M165.0 131.6a0.7 1.8 0 1 0 1.4 0a0.7 1.8 0 1 0 -1.4 0M22.1 154.1a1.7 1.2 0 1 0 3.4 0a1.7 1.2 0 1 0 -3.4 0M84.4 29.0a1.3 1.0 0 1 0 2.7 0a1.3 1.0 0 1 0 -2.7 0M184.2 67.3a2.1 1.3 0 1 0 4.2 0a2.1 1.3 0 1 0 -4.2 0M0.9 118.7a2.5 0.6 0 1 0 5.1 0a2.5 0.6 0 1 0 -5.1 0M227.1 280.6a1.3 1.4 0 1 0 2.7 0a1.3 1.4 0 1 0 -2.7 0M140.2 87.9a1.8 1.4 0 1 0 3.6 0a1.8 1.4 0 1 0 -3.6 0M119.7 145.3a1.6 1.7 0 1 0 3.3 0a1.6 1.7 0 1 0 -3.3 0M19.3 27.1a1.1 1.0 0 1 0 2.2 0a1.1 1.0 0 1 0 -2.2 0M304.0 124.3a2.3 1.2 0 1 0 4.6 0a2.3 1.2 0 1 0 -4.6 0M109.3 198.5a0.8 2.0 0 1 0 1.5 0a0.8 2.0 0 1 0 -1.5 0M318.9 95.8a1.2 1.7 0 1 0 2.5 0a1.2 1.7 0 1 0 -2.5 0M302.8 187.5a0.7 1.7 0 1 0 1.4 0a0.7 1.7 0 1 0 -1.4 0M16.8 182.4a1.7 1.9 0 1 0 3.4 0a1.7 1.9 0 1 0 -3.4 0M243.4 6.5a2.5 1.7 0 1 0 4.9 0a2.5 1.7 0 1 0 -4.9 0M221.2 1.6a2.1 1.2 0 1 0 4.1 0a2.1 1.2 0 1 0 -4.1 0M259.2 287.2a2.4 0.7 0 1 0 4.9 0a2.4 0.7 0 1 0 -4.9 0M298.7 128.6a2.1 1.1 0 1 0 4.2 0a2.1 1.1 0 1 0 -4.2 0M171.5 127.6a0.8 1.0 0 1 0 1.7 0a0.8 1.0 0 1 0 -1.7 0M282.0 20.9a0.8 1.8 0 1 0 1.7 0a0.8 1.8 0 1 0 -1.7 0M255.7 160.1a0.8 0.8 0 1 0 1.7 0a0.8 0.8 0 1 0 -1.7 0M117.7 278.5a1.7 1.9 0 1 0 3.4 0a1.7 1.9 0 1 0 -3.4 0M79.6 121.1a1.7 1.8 0 1 0 3.3 0a1.7 1.8 0 1 0 -3.3 0M45.9 255.1a1.5 0.6 0 1 0 3.1 0a1.5 0.6 0 1 0 -3.1 0M164.3 110.2a1.9 1.9 0 1 0 3.9 0a1.9 1.9 0 1 0 -3.9 0M188.7 201.4a1.4 1.7 0 1 0 2.8 0a1.4 1.7 0 1 0 -2.8 0M39.6 216.8a0.9 1.4 0 1 0 1.9 0a0.9 1.4 0 1 0 -1.9 0M76.9 101.1a0.9 1.1 0 1 0 1.9 0a0.9 1.1 0 1 0 -1.9 0M226.3 151.8a1.4 1.4 0 1 0 2.8 0a1.4 1.4 0 1 0 -2.8 0M322.5 104.6a1.8 1.3 0 1 0 3.5 0a1.8 1.3 0 1 0 -3.5 0M375.5 95.8a2.0 0.9 0 1 0 4.0 0a2.0 0.9 0 1 0 -4.0 0M98.8 213.3a1.7 1.0 0 1 0 3.5 0a1.7 1.0 0 1 0 -3.5 0M23.4 240.9a1.4 1.6 0 1 0 2.7 0a1.4 1.6 0 1 0 -2.7 0M164.9 180.3a1.7 2.0 0 1 0 3.4 0a1.7 2.0 0 1 0 -3.4 0M348.6 133.1a1.6 0.9 0 1 0 3.1 0a1.6 0.9 0 1 0 -3.1 0M288.7 29.9a1.2 1.8 0 1 0 2.4 0a1.2 1.8 0 1 0 -2.4 0M11.8 204.0a1.7 1.4 0 1 0 3.5 0a1.7 1.4 0 1 0 -3.5 0M125.7 44.3a2.5 1.7 0 1 0 5.0 0a2.5 1.7 0 1 0 -5.0 0M308.0 28.5a2.2 0.9 0 1 0 4.3 0a2.2 0.9 0 1 0 -4.3 0M74.9 156.2a1.8 0.8 0 1 0 3.6 0a1.8 0.8 0 1 0 -3.6 0M292.1 170.1a2.4 1.9 0 1 0 4.8 0a2.4 1.9 0 1 0 -4.8 0M262.9 106.3a2.5 1.6 0 1 0 5.0 0a2.5 1.6 0 1 0 -5.0 0M109.9 250.4a2.1 1.0 0 1 0 4.1 0a2.1 1.0 0 1 0 -4.1 0M94.3 5.9a1.7 1.0 0 1 0 3.3 0a1.7 1.0 0 1 0 -3.3 0M112.0 73.8a0.9 1.3 0 1 0 1.7 0a0.9 1.3 0 1 0 -1.7 0M103.8 83.2a1.2 1.3 0 1 0 2.3 0a1.2 1.3 0 1 0 -2.3 0M334.1 46.8a2.3 1.8 0 1 0 4.6 0a2.3 1.8 0 1 0 -4.6 0M232.5 158.8a2.1 1.3 0 1 0 4.1 0a2.1 1.3 0 1 0 -4.1 0M251.9 268.4a2.2 1.0 0 1 0 4.3 0a2.2 1.0 0 1 0 -4.3 0M19.6 273.5a1.3 1.7 0 1 0 2.7 0a1.3 1.7 0 1 0 -2.7 0M88.5 132.2a1.3 1.6 0 1 0 2.7 0a1.3 1.6 0 1 0 -2.7 0M361.6 147.6a1.7 1.1 0 1 0 3.5 0a1.7 1.1 0 1 0 -3.5 0M88.6 277.4a0.8 1.9 0 1 0 1.6 0a0.8 1.9 0 1 0 -1.6 0M250.6 21.0a2.4 0.7 0 1 0 4.8 0a2.4 0.7 0 1 0 -4.8 0M215.1 35.0a2.6 1.0 0 1 0 5.2 0a2.6 1.0 0 1 0 -5.2 0M333.8 17.9a1.9 0.7 0 1 0 3.9 0a1.9 0.7 0 1 0 -3.9 0M8.9 166.7a2.6 1.6 0 1 0 5.1 0a2.6 1.6 0 1 0 -5.1 0M327.7 229.2a1.6 0.7 0 1 0 3.3 0a1.6 0.7 0 1 0 -3.3 0M201.2 53.9a1.7 1.1 0 1 0 3.3 0a1.7 1.1 0 1 0 -3.3 0M190.1 57.7a2.0 1.2 0 1 0 4.0 0a2.0 1.2 0 1 0 -4.0 0M185.5 23.0a1.6 1.4 0 1 0 3.1 0a1.6 1.4 0 1 0 -3.1 0M373.6 163.9a0.9 1.0 0 1 0 1.7 0a0.9 1.0 0 1 0 -1.7 0M126.7 205.0a2.5 2.0 0 1 0 5.0 0a2.5 2.0 0 1 0 -5.0 0M363.4 270.2a2.3 1.9 0 1 0 4.6 0a2.3 1.9 0 1 0 -4.6 0M6.0 143.0a1.8 1.6 0 1 0 3.6 0a1.8 1.6 0 1 0 -3.6 0M233.4 179.0a2.5 0.7 0 1 0 4.9 0a2.5 0.7 0 1 0 -4.9 0M199.2 280.2a0.7 0.8 0 1 0 1.3 0a0.7 0.8 0 1 0 -1.3 0M333.9 279.5a0.6 0.6 0 1 0 1.3 0a0.6 0.6 0 1 0 -1.3 0M317.8 201.0a1.6 1.4 0 1 0 3.3 0a1.6 1.4 0 1 0 -3.3 0M291.0 235.9a0.6 0.7 0 1 0 1.2 0a0.6 0.7 0 1 0 -1.2 0M303.5 284.8a2.3 1.2 0 1 0 4.5 0a2.3 1.2 0 1 0 -4.5 0M128.6 101.2a0.6 1.7 0 1 0 1.3 0a0.6 1.7 0 1 0 -1.3 0M99.3 171.0a1.7 1.1 0 1 0 3.3 0a1.7 1.1 0 1 0 -3.3 0M258.8 132.8a1.1 1.8 0 1 0 2.1 0a1.1 1.8 0 1 0 -2.1 0M66.5 43.8a1.1 1.3 0 1 0 2.2 0a1.1 1.3 0 1 0 -2.2 0M300.6 97.2a1.1 1.5 0 1 0 2.2 0a1.1 1.5 0 1 0 -2.2 0M99.1 152.6a1.1 1.8 0 1 0 2.2 0a1.1 1.8 0 1 0 -2.2 0M69.8 67.8a1.2 1.1 0 1 0 2.4 0a1.2 1.1 0 1 0 -2.4 0M277.5 196.8a2.2 1.4 0 1 0 4.4 0a2.2 1.4 0 1 0 -4.4 0M29.2 222.9a1.1 0.9 0 1 0 2.2 0a1.1 0.9 0 1 0 -2.2 0M158.2 289.0a1.3 1.1 0 1 0 2.7 0a1.3 1.1 0 1 0 -2.7 0M349.4 289.2a1.4 0.8 0 1 0 2.7 0a1.4 0.8 0 1 0 -2.7 0M302.7 228.4a1.3 1.7 0 1 0 2.6 0a1.3 1.7 0 1 0 -2.6 0M144.3 83.8a1.8 1.6 0 1 0 3.6 0a1.8 1.6 0 1 0 -3.6 0M182.6 239.0a0.6 1.3 0 1 0 1.3 0a0.6 1.3 0 1 0 -1.3 0M144.0 19.0a2.4 0.8 0 1 0 4.9 0a2.4 0.8 0 1 0 -4.9 0M76.6 256.4a2.5 1.9 0 1 0 5.0 0a2.5 1.9 0 1 0 -5.0 0M130.8 271.8a0.9 1.6 0 1 0 1.8 0a0.9 1.6 0 1 0 -1.8 0M363.2 56.3a0.9 1.5 0 1 0 1.7 0a0.9 1.5 0 1 0 -1.7 0M337.3 212.1a2.5 1.2 0 1 0 5.0 0a2.5 1.2 0 1 0 -5.0 0M142.2 35.1a1.1 1.9 0 1 0 2.3 0a1.1 1.9 0 1 0 -2.3 0M26.3 54.0a1.3 0.7 0 1 0 2.6 0a1.3 0.7 0 1 0 -2.6 0M117.3 53.4a0.8 1.3 0 1 0 1.7 0a0.8 1.3 0 1 0 -1.7 0M205.9 165.8a2.1 1.3 0 1 0 4.2 0a2.1 1.3 0 1 0 -4.2 0M363.6 23.8a1.0 0.7 0 1 0 2.1 0a1.0 0.7 0 1 0 -2.1 0M116.7 222.1a2.4 1.3 0 1 0 4.9 0a2.4 1.3 0 1 0 -4.9 0M60.0 96.5a1.7 1.0 0 1 0 3.5 0a1.7 1.0 0 1 0 -3.5 0M303.7 284.0a1.5 1.4 0 1 0 3.0 0a1.5 1.4 0 1 0 -3.0 0M324.7 135.8a1.0 1.9 0 1 0 2.0 0a1.0 1.9 0 1 0 -2.0 0M374.4 7.1a2.1 1.2 0 1 0 4.3 0a2.1 1.2 0 1 0 -4.3 0M19.0 47.5a0.9 1.6 0 1 0 1.9 0a0.9 1.6 0 1 0 -1.9 0M80.4 5.7a1.0 1.7 0 1 0 2.1 0a1.0 1.7 0 1 0 -2.1 0M190.7 190.6a1.5 0.9 0 1 0 3.1 0a1.5 0.9 0 1 0 -3.1 0M5.2 88.9a0.7 1.0 0 1 0 1.4 0a0.7 1.0 0 1 0 -1.4 0M236.7 107.9a1.5 1.5 0 1 0 3.1 0a1.5 1.5 0 1 0 -3.1 0M119.7 104.1a2.4 1.4 0 1 0 4.7 0a2.4 1.4 0 1 0 -4.7 0M159.0 157.7a1.5 1.1 0 1 0 3.0 0a1.5 1.1 0 1 0 -3.0 0M349.3 68.1a2.5 1.8 0 1 0 4.9 0a2.5 1.8 0 1 0 -4.9 0M337.9 47.5a1.6 2.0 0 1 0 3.2 0a1.6 2.0 0 1 0 -3.2 0M109.1 49.9a2.0 0.9 0 1 0 4.1 0a2.0 0.9 0 1 0 -4.1 0M222.2 46.0a2.5 1.0 0 1 0 5.0 0a2.5 1.0 0 1 0 -5.0 0M36.0 200.7a1.3 1.4 0 1 0 2.6 0a1.3 1.4 0 1 0 -2.6 0M189.8 269.4a1.6 1.1 0 1 0 3.3 0a1.6 1.1 0 1 0 -3.3 0M-0.5 145.0a1.1 1.4 0 1 0 2.3 0a1.1 1.4 0 1 0 -2.3 0M242.5 135.0a0.8 1.3 0 1 0 1.6 0a0.8 1.3 0 1 0 -1.6 0M182.9 187.3a2.5 1.0 0 1 0 5.1 0a2.5 1.0 0 1 0 -5.1 0M168.3 24.7a2.2 0.9 0 1 0 4.4 0a2.2 0.9 0 1 0 -4.4 0M318.1 233.0a1.1 1.9 0 1 0 2.2 0a1.1 1.9 0 1 0 -2.2 0M192.3 124.4a1.7 1.9 0 1 0 3.4 0a1.7 1.9 0 1 0 -3.4 0M187.4 140.8a1.2 1.8 0 1 0 2.4 0a1.2 1.8 0 1 0 -2.4 0M192.7 100.0a1.0 0.9 0 1 0 2.0 0a1.0 0.9 0 1 0 -2.0 0M318.6 234.6a2.6 1.9 0 1 0 5.1 0a2.6 1.9 0 1 0 -5.1 0M261.7 232.8a2.0 1.7 0 1 0 4.0 0a2.0 1.7 0 1 0 -4.0 0M306.3 51.5a2.2 1.0 0 1 0 4.5 0a2.2 1.0 0 1 0 -4.5 0M93.3 268.5a0.6 1.3 0 1 0 1.3 0a0.6 1.3 0 1 0 -1.3 0M130.3 231.2a1.8 1.9 0 1 0 3.6 0a1.8 1.9 0 1 0 -3.6 0M358.3 188.1a0.7 1.5 0 1 0 1.5 0a0.7 1.5 0 1 0 -1.5 0M39.8 286.8a2.3 1.0 0 1 0 4.7 0a2.3 1.0 0 1 0 -4.7 0M69.5 202.7a2.1 2.0 0 1 0 4.2 0a2.1 2.0 0 1 0 -4.2 0M237.8 36.6a2.1 0.7 0 1 0 4.1 0a2.1 0.7 0 1 0 -4.1 0M331.9 224.4a2.2 1.8 0 1 0 4.3 0a2.2 1.8 0 1 0 -4.3 0M217.2 275.5a1.9 1.3 0 1 0 3.8 0a1.9 1.3 0 1 0 -3.8 0M147.4 103.2a0.6 0.8 0 1 0 1.3 0a0.6 0.8 0 1 0 -1.3 0M304.4 66.8a1.9 1.7 0 1 0 3.8 0a1.9 1.7 0 1 0 -3.8 0M266.1 150.6a1.2 1.0 0 1 0 2.5 0a1.2 1.0 0 1 0 -2.5 0M70.2 189.2a2.0 1.9 0 1 0 3.9 0a2.0 1.9 0 1 0 -3.9 0M124.9 270.7a2.4 1.0 0 1 0 4.8 0a2.4 1.0 0 1 0 -4.8 0M364.0 180.9a2.5 1.7 0 1 0 5.1 0a2.5 1.7 0 1 0 -5.1 0M126.7 81.6a1.6 1.3 0 1 0 3.3 0a1.6 1.3 0 1 0 -3.3 0M12.0 251.9a1.7 1.3 0 1 0 3.3 0a1.7 1.3 0 1 0 -3.3 0M285.7 72.9a1.0 1.4 0 1 0 2.0 0a1.0 1.4 0 1 0 -2.0 0M92.2 95.6a0.7 0.7 0 1 0 1.5 0a0.7 0.7 0 1 0 -1.5 0M134.3 153.9a2.5 1.5 0 1 0 5.0 0a2.5 1.5 0 1 0 -5.0 0M158.5 118.8a1.1 1.3 0 1 0 2.1 0a1.1 1.3 0 1 0 -2.1 0M367.8 35.6a1.5 1.6 0 1 0 2.9 0a1.5 1.6 0 1 0 -2.9 0M291.6 162.1a1.9 1.9 0 1 0 3.8 0a1.9 1.9 0 1 0 -3.8 0M345.8 73.3a1.7 2.0 0 1 0 3.4 0a1.7 2.0 0 1 0 -3.4 0M201.0 55.3a2.1 0.7 0 1 0 4.3 0a2.1 0.7 0 1 0 -4.3 0M56.7 161.0a1.1 1.6 0 1 0 2.3 0a1.1 1.6 0 1 0 -2.3 0M277.7 93.2a2.1 1.5 0 1 0 4.3 0a2.1 1.5 0 1 0 -4.3 0M270.3 133.3a1.5 0.7 0 1 0 2.9 0a1.5 0.7 0 1 0 -2.9 0M180.4 278.8a2.4 0.7 0 1 0 4.8 0a2.4 0.7 0 1 0 -4.8 0M25.4 78.7a2.0 1.2 0 1 0 4.0 0a2.0 1.2 0 1 0 -4.0 0M47.5 124.3a1.7 1.6 0 1 0 3.5 0a1.7 1.6 0 1 0 -3.5 0M153.2 189.7a2.0 1.5 0 1 0 3.9 0a2.0 1.5 0 1 0 -3.9 0M17.0 207.5a0.9 0.7 0 1 0 1.7 0a0.9 0.7 0 1 0 -1.7 0M181.6 4.9a0.7 1.1 0 1 0 1.5 0a0.7 1.1 0 1 0 -1.5 0M177.9 30.8a2.5 1.8 0 1 0 5.0 0a2.5 1.8 0 1 0 -5.0 0M186.1 171.6a1.2 2.0 0 1 0 2.5 0a1.2 2.0 0 1 0 -2.5 0M45.1 88.8a1.0 1.8 0 1 0 2.1 0a1.0 1.8 0 1 0 -2.1 0M194.5 119.8a1.4 1.8 0 1 0 2.8 0a1.4 1.8 0 1 0 -2.8 0M97.1 231.1a2.0 1.2 0 1 0 4.0 0a2.0 1.2 0 1 0 -4.0 0M139.3 127.6a1.5 1.0 0 1 0 3.0 0a1.5 1.0 0 1 0 -3.0 0M239.0 120.1a1.2 1.7 0 1 0 2.4 0a1.2 1.7 0 1 0 -2.4 0M172.9 138.3a2.4 1.2 0 1 0 4.7 0a2.4 1.2 0 1 0 -4.7 0M142.2 262.2a2.6 1.7 0 1 0 5.1 0a2.6 1.7 0 1 0 -5.1 0M152.5 196.0a2.1 1.0 0 1 0 4.2 0a2.1 1.0 0 1 0 -4.2 0M276.8 277.3a1.9 1.5 0 1 0 3.8 0a1.9 1.5 0 1 0 -3.8 0M166.5 190.8a1.1 1.7 0 1 0 2.1 0a1.1 1.7 0 1 0 -2.1 0M206.3 286.1a1.3 1.6 0 1 0 2.6 0a1.3 1.6 0 1 0 -2.6 0M4.3 121.5a2.1 1.0 0 1 0 4.3 0a2.1 1.0 0 1 0 -4.3 0M234.8 64.5a1.4 2.0 0 1 0 2.8 0a1.4 2.0 0 1 0 -2.8 0M75.0 266.5a0.7 1.4 0 1 0 1.4 0a0.7 1.4 0 1 0 -1.4 0M314.8 244.5a1.4 1.4 0 1 0 2.8 0a1.4 1.4 0 1 0 -2.8 0M272.1 222.4a2.1 1.4 0 1 0 4.2 0a2.1 1.4 0 1 0 -4.2 0M95.1 205.9a1.7 1.4 0 1 0 3.4 0a1.7 1.4 0 1 0 -3.4 0M377.9 39.9a2.2 1.1 0 1 0 4.3 0a2.2 1.1 0 1 0 -4.3 0M278.6 277.5a1.1 1.4 0 1 0 2.3 0a1.1 1.4 0 1 0 -2.3 0M202.5 144.6a0.9 1.5 0 1 0 1.9 0a0.9 1.5 0 1 0 -1.9 0M342.8 193.7a1.2 1.7 0 1 0 2.4 0a1.2 1.7 0 1 0 -2.4 0M159.9 42.4a1.8 1.2 0 1 0 3.6 0a1.8 1.2 0 1 0 -3.6 0M202.2 289.4a1.7 1.9 0 1 0 3.5 0a1.7 1.9 0 1 0 -3.5 0M135.0 221.6a0.8 1.0 0 1 0 1.5 0a0.8 1.0 0 1 0 -1.5 0M264.1 201.5a2.3 1.1 0 1 0 4.5 0a2.3 1.1 0 1 0 -4.5 0M103.7 104.7a1.7 0.6 0 1 0 3.3 0a1.7 0.6 0 1 0 -3.3 0M143.3 191.9a0.9 1.0 0 1 0 1.8 0a0.9 1.0 0 1 0 -1.8 0M334.9 272.6a1.1 0.8 0 1 0 2.2 0a1.1 0.8 0 1 0 -2.2 0M43.1 25.0a2.2 1.6 0 1 0 4.4 0a2.2 1.6 0 1 0 -4.4 0M99.8 142.8a2.0 0.6 0 1 0 4.0 0a2.0 0.6 0 1 0 -4.0 0M314.3 251.0a1.0 1.6 0 1 0 2.0 0a1.0 1.6 0 1 0 -2.0 0M266.9 98.4a2.4 0.9 0 1 0 4.7 0a2.4 0.9 0 1 0 -4.7 0M181.0 91.6a1.5 1.7 0 1 0 3.0 0a1.5 1.7 0 1 0 -3.0 0M216.9 177.9a2.6 0.9 0 1 0 5.1 0a2.6 0.9 0 1 0 -5.1 0M84.9 181.0a0.9 1.9 0 1 0 1.8 0a0.9 1.9 0 1 0 -1.8 0M129.9 128.5a1.5 1.8 0 1 0 2.9 0a1.5 1.8 0 1 0 -2.9 0M351.5 197.7a0.9 1.1 0 1 0 1.9 0a0.9 1.1 0 1 0 -1.9 0M269.6 63.1a2.4 1.8 0 1 0 4.7 0a2.4 1.8 0 1 0 -4.7 0M86.1 106.4a1.1 1.6 0 1 0 2.1 0a1.1 1.6 0 1 0 -2.1 0M17.4 203.1a0.7 1.8 0 1 0 1.5 0a0.7 1.8 0 1 0 -1.5 0M208.4 170.3a0.8 0.7 0 1 0 1.6 0a0.8 0.7 0 1 0 -1.6 0M134.1 287.5a1.8 1.8 0 1 0 3.6 0a1.8 1.8 0 1 0 -3.6 0M23.5 29.7a0.6 1.6 0 1 0 1.3 0a0.6 1.6 0 1 0 -1.3 0M66.0 79.6a1.9 1.6 0 1 0 3.9 0a1.9 1.6 0 1 0 -3.9 0M122.9 136.5a1.2 1.4 0 1 0 2.4 0a1.2 1.4 0 1 0 -2.4 0M135.9 105.1a1.1 1.0 0 1 0 2.2 0a1.1 1.0 0 1 0 -2.2 0M99.2 4.7a1.2 1.4 0 1 0 2.4 0a1.2 1.4 0 1 0 -2.4 0M101.1 33.0a2.3 1.3 0 1 0 4.6 0a2.3 1.3 0 1 0 -4.6 0M194.7 91.1a2.4 1.7 0 1 0 4.7 0a2.4 1.7 0 1 0 -4.7 0M237.7 192.6a2.0 1.3 0 1 0 4.0 0a2.0 1.3 0 1 0 -4.0 0M157.5 113.9a1.6 1.3 0 1 0 3.2 0a1.6 1.3 0 1 0 -3.2 0M201.5 155.7a2.2 1.8 0 1 0 4.4 0a2.2 1.8 0 1 0 -4.4 0M85.0 6.5a1.2 0.6 0 1 0 2.4 0a1.2 0.6 0 1 0 -2.4 0M305.4 181.1a1.2 0.9 0 1 0 2.3 0a1.2 0.9 0 1 0 -2.3 0M332.4 244.1a2.0 1.6 0 1 0 3.9 0a2.0 1.6 0 1 0 -3.9 0M285.3 132.8a1.4 1.4 0 1 0 2.8 0a1.4 1.4 0 1 0 -2.8 0M336.5 289.5a2.4 1.8 0 1 0 4.9 0a2.4 1.8 0 1 0 -4.9 0M26.1 72.1a2.5 1.4 0 1 0 5.1 0a2.5 1.4 0 1 0 -5.1 0M195.9 90.5a2.3 1.3 0 1 0 4.6 0a2.3 1.3 0 1 0 -4.6 0M378.7 22.1a2.6 0.6 0 1 0 5.2 0a2.6 0.6 0 1 0 -5.2 0M55.2 113.7a1.9 0.8 0 1 0 3.8 0a1.9 0.8 0 1 0 -3.8 0M215.1 274.3a1.5 1.7 0 1 0 2.9 0a1.5 1.7 0 1 0 -2.9 0M226.9 170.1a0.9 1.2 0 1 0 1.9 0a0.9 1.2 0 1 0 -1.9 0M345.6 196.9a1.0 1.2 0 1 0 2.1 0a1.0 1.2 0 1 0 -2.1 0M207.5 98.3a1.8 1.5 0 1 0 3.5 0a1.8 1.5 0 1 0 -3.5 0M5.0 64.2a1.9 0.9 0 1 0 3.8 0a1.9 0.9 0 1 0 -3.8 0M26.8 222.5a1.3 1.9 0 1 0 2.5 0a1.3 1.9 0 1 0 -2.5 0M213.2 29.6a1.9 1.0 0 1 0 3.7 0a1.9 1.0 0 1 0 -3.7 0M311.4 211.5a2.1 0.7 0 1 0 4.2 0a2.1 0.7 0 1 0 -4.2 0M12.3 233.0a0.9 0.9 0 1 0 1.8 0a0.9 0.9 0 1 0 -1.8 0M10.0 47.7a1.5 1.9 0 1 0 3.1 0a1.5 1.9 0 1 0 -3.1 0M121.4 75.7a2.3 0.9 0 1 0 4.5 0a2.3 0.9 0 1 0 -4.5 0M242.1 179.6a2.5 0.7 0 1 0 4.9 0a2.5 0.7 0 1 0 -4.9 0M214.6 111.8a2.2 1.0 0 1 0 4.5 0a2.2 1.0 0 1 0 -4.5 0M273.7 54.1a1.6 2.0 0 1 0 3.2 0a1.6 2.0 0 1 0 -3.2 0M89.9 81.4a2.4 1.5 0 1 0 4.9 0a2.4 1.5 0 1 0 -4.9 0M24.3 54.5a1.1 1.0 0 1 0 2.1 0a1.1 1.0 0 1 0 -2.1 0M322.6 204.6a2.6 1.5 0 1 0 5.1 0a2.6 1.5 0 1 0 -5.1 0M239.7 111.9a2.0 1.3 0 1 0 4.1 0a2.0 1.3 0 1 0 -4.1 0M21.3 143.7a1.4 1.3 0 1 0 2.7 0a1.4 1.3 0 1 0 -2.7 0M16.2 8.2a2.6 1.1 0 1 0 5.1 0a2.6 1.1 0 1 0 -5.1 0M125.3 43.3a1.8 1.9 0 1 0 3.6 0a1.8 1.9 0 1 0 -3.6 0M67.8 146.1a1.6 1.7 0 1 0 3.2 0a1.6 1.7 0 1 0 -3.2 0M216.6 69.8a1.0 1.6 0 1 0 2.0 0a1.0 1.6 0 1 0 -2.0 0M29.4 252.5a0.7 0.9 0 1 0 1.3 0a0.7 0.9 0 1 0 -1.3 0M178.3 246.4a1.8 1.6 0 1 0 3.7 0a1.8 1.6 0 1 0 -3.7 0M292.3 210.9a0.7 1.8 0 1 0 1.4 0a0.7 1.8 0 1 0 -1.4 0M56.2 47.4a0.7 0.6 0 1 0 1.4 0a0.7 0.6 0 1 0 -1.4 0M336.9 111.2a0.8 0.7 0 1 0 1.5 0a0.8 0.7 0 1 0 -1.5 0M323.4 175.7a2.4 0.7 0 1 0 4.9 0a2.4 0.7 0 1 0 -4.9 0M42.4 83.7a1.0 0.8 0 1 0 2.0 0a1.0 0.8 0 1 0 -2.0 0M76.3 187.0a0.9 0.8 0 1 0 1.9 0a0.9 0.8 0 1 0 -1.9 0M205.3 109.6a0.9 1.4 0 1 0 1.8 0a0.9 1.4 0 1 0 -1.8 0M194.0 113.3a1.5 0.7 0 1 0 3.1 0a1.5 0.7 0 1 0 -3.1 0M235.5 56.5a1.3 0.6 0 1 0 2.5 0a1.3 0.6 0 1 0 -2.5 0M340.4 171.6a1.4 1.4 0 1 0 2.8 0a1.4 1.4 0 1 0 -2.8 0M360.5 38.6a1.4 1.6 0 1 0 2.7 0a1.4 1.6 0 1 0 -2.7 0M140.8 206.4a2.4 0.7 0 1 0 4.8 0a2.4 0.7 0 1 0 -4.8 0M107.4 85.5a2.1 1.7 0 1 0 4.2 0a2.1 1.7 0 1 0 -4.2 0M268.3 270.0a1.0 1.2 0 1 0 1.9 0a1.0 1.2 0 1 0 -1.9 0M327.5 223.5a0.8 2.0 0 1 0 1.7 0a0.8 2.0 0 1 0 -1.7 0M283.8 252.8a1.3 1.4 0 1 0 2.6 0a1.3 1.4 0 1 0 -2.6 0M367.4 262.2a1.8 1.8 0 1 0 3.5 0a1.8 1.8 0 1 0 -3.5 0M382.7 245.1a1.9 1.9 0 1 0 3.8 0a1.9 1.9 0 1 0 -3.8 0M53.6 117.9a1.7 0.8 0 1 0 3.5 0a1.7 0.8 0 1 0 -3.5 0M298.7 18.1a1.9 1.0 0 1 0 3.7 0a1.9 1.0 0 1 0 -3.7 0M123.3 177.2a1.0 1.2 0 1 0 2.0 0a1.0 1.2 0 1 0 -2.0 0M328.9 288.2a1.1 1.1 0 1 0 2.3 0a1.1 1.1 0 1 0 -2.3 0M264.8 55.4a2.3 0.9 0 1 0 4.6 0a2.3 0.9 0 1 0 -4.6 0M213.7 99.1a0.6 0.6 0 1 0 1.2 0a0.6 0.6 0 1 0 -1.2 0M-0.4 95.8a1.2 2.0 0 1 0 2.3 0a1.2 2.0 0 1 0 -2.3 0M243.5 19.1a2.0 0.9 0 1 0 4.1 0a2.0 0.9 0 1 0 -4.1 0M183.1 211.0a2.3 1.9 0 1 0 4.6 0a2.3 1.9 0 1 0 -4.6 0M160.7 92.8a1.4 1.0 0 1 0 2.8 0a1.4 1.0 0 1 0 -2.8 0M283.6 135.2a2.0 0.8 0 1 0 3.9 0a2.0 0.8 0 1 0 -3.9 0M300.4 282.3a1.0 1.5 0 1 0 2.0 0a1.0 1.5 0 1 0 -2.0 0M61.0 10.3a1.4 0.9 0 1 0 2.9 0a1.4 0.9 0 1 0 -2.9 0M279.4 167.1a1.9 2.0 0 1 0 3.9 0a1.9 2.0 0 1 0 -3.9 0M21.8 28.7a0.7 1.2 0 1 0 1.3 0a0.7 1.2 0 1 0 -1.3 0M315.7 199.7a1.7 1.8 0 1 0 3.4 0a1.7 1.8 0 1 0 -3.4 0M141.4 33.0a1.9 0.6 0 1 0 3.8 0a1.9 0.6 0 1 0 -3.8 0M87.4 8.7a0.9 0.7 0 1 0 1.8 0a0.9 0.7 0 1 0 -1.8 0M202.8 37.4a1.8 1.8 0 1 0 3.6 0a1.8 1.8 0 1 0 -3.6 0M130.7 35.1a1.9 1.6 0 1 0 3.9 0a1.9 1.6 0 1 0 -3.9 0M338.6 161.8a1.8 1.8 0 1 0 3.5 0a1.8 1.8 0 1 0 -3.5 0M259.5 284.7a1.2 1.7 0 1 0 2.3 0a1.2 1.7 0 1 0 -2.3 0M243.0 136.8a0.6 1.3 0 1 0 1.2 0a0.6 1.3 0 1 0 -1.2 0M99.8 175.6a1.6 1.3 0 1 0 3.2 0a1.6 1.3 0 1 0 -3.2 0M20.8 38.4a1.8 1.6 0 1 0 3.6 0a1.8 1.6 0 1 0 -3.6 0M380.2 231.5a1.2 1.2 0 1 0 2.4 0a1.2 1.2 0 1 0 -2.4 0M193.3 234.8a1.4 1.9 0 1 0 2.8 0a1.4 1.9 0 1 0 -2.8 0M184.8 116.2a1.6 1.1 0 1 0 3.1 0a1.6 1.1 0 1 0 -3.1 0M383.5 13.5a1.4 0.7 0 1 0 2.8 0a1.4 0.7 0 1 0 -2.8 0M260.1 44.0a0.9 1.2 0 1 0 1.8 0a0.9 1.2 0 1 0 -1.8 0M230.3 223.0a1.5 1.0 0 1 0 3.0 0a1.5 1.0 0 1 0 -3.0 0M140.6 259.4a1.0 0.6 0 1 0 2.1 0a1.0 0.6 0 1 0 -2.1 0M340.2 141.0a0.9 0.8 0 1 0 1.7 0a0.9 0.8 0 1 0 -1.7 0M342.1 218.7a0.7 1.5 0 1 0 1.5 0a0.7 1.5 0 1 0 -1.5 0M80.5 130.2a1.8 0.7 0 1 0 3.6 0a1.8 0.7 0 1 0 -3.6 0M359.3 97.9a0.9 1.7 0 1 0 1.8 0a0.9 1.7 0 1 0 -1.8 0M40.1 10.9a1.9 1.3 0 1 0 3.8 0a1.9 1.3 0 1 0 -3.8 0M345.7 230.9a1.0 0.7 0 1 0 2.0 0a1.0 0.7 0 1 0 -2.0 0M231.1 137.4a1.2 1.9 0 1 0 2.4 0a1.2 1.9 0 1 0 -2.4 0M79.5 187.8a0.7 1.9 0 1 0 1.5 0a0.7 1.9 0 1 0 -1.5 0M364.0 180.5a1.2 1.6 0 1 0 2.5 0a1.2 1.6 0 1 0 -2.5 0M347.2 232.1a0.7 1.3 0 1 0 1.4 0a0.7 1.3 0 1 0 -1.4 0M51.4 159.5a2.5 1.8 0 1 0 5.0 0a2.5 1.8 0 1 0 -5.0 0M94.6 161.2a1.2 0.8 0 1 0 2.5 0a1.2 0.8 0 1 0 -2.5 0M285.1 221.7a1.3 1.2 0 1 0 2.5 0a1.3 1.2 0 1 0 -2.5 0M266.6 212.5a1.5 0.8 0 1 0 3.1 0a1.5 0.8 0 1 0 -3.1 0M34.6 49.5a2.3 1.3 0 1 0 4.5 0a2.3 1.3 0 1 0 -4.5 0M246.8 106.4a1.3 0.8 0 1 0 2.7 0a1.3 0.8 0 1 0 -2.7 0M374.4 176.8a0.9 1.6 0 1 0 1.7 0a0.9 1.6 0 1 0 -1.7 0M228.1 179.1a2.1 1.5 0 1 0 4.3 0a2.1 1.5 0 1 0 -4.3 0M336.0 283.1a1.4 1.5 0 1 0 2.8 0a1.4 1.5 0 1 0 -2.8 0M142.8 119.9a1.3 1.5 0 1 0 2.7 0a1.3 1.5 0 1 0 -2.7 0M133.4 102.8a2.3 1.7 0 1 0 4.6 0a2.3 1.7 0 1 0 -4.6 0M259.0 246.3a1.4 1.5 0 1 0 2.7 0a1.4 1.5 0 1 0 -2.7 0M95.9 92.1a0.8 1.7 0 1 0 1.6 0a0.8 1.7 0 1 0 -1.6 0M353.3 88.4a1.4 0.8 0 1 0 2.7 0a1.4 0.8 0 1 0 -2.7 0M52.4 186.4a2.4 0.7 0 1 0 4.8 0a2.4 0.7 0 1 0 -4.8 0M97.0 221.7a1.1 1.8 0 1 0 2.1 0a1.1 1.8 0 1 0 -2.1 0M134.8 138.2a1.0 1.0 0 1 0 2.0 0a1.0 1.0 0 1 0 -2.0 0M161.4 81.2a2.1 0.6 0 1 0 4.1 0a2.1 0.6 0 1 0 -4.1 0M244.7 234.3a1.3 0.9 0 1 0 2.5 0a1.3 0.9 0 1 0 -2.5 0M44.0 22.6a2.2 1.4 0 1 0 4.4 0a2.2 1.4 0 1 0 -4.4 0M4.0 132.4a1.8 1.0 0 1 0 3.6 0a1.8 1.0 0 1 0 -3.6 0M12.1 122.9a1.3 2.0 0 1 0 2.6 0a1.3 2.0 0 1 0 -2.6 0M136.2 269.4a2.3 1.4 0 1 0 4.7 0a2.3 1.4 0 1 0 -4.7 0M47.7 235.9a0.8 1.4 0 1 0 1.6 0a0.8 1.4 0 1 0 -1.6 0M36.0 27.0a1.4 0.8 0 1 0 2.8 0a1.4 0.8 0 1 0 -2.8 0M379.5 168.8a2.4 1.9 0 1 0 4.8 0a2.4 1.9 0 1 0 -4.8 0M290.3 188.6a1.5 1.7 0 1 0 3.1 0a1.5 1.7 0 1 0 -3.1 0M256.0 46.1a1.7 1.2 0 1 0 3.3 0a1.7 1.2 0 1 0 -3.3 0M196.5 208.2a2.0 1.4 0 1 0 4.0 0a2.0 1.4 0 1 0 -4.0 0M302.9 241.0a0.8 0.8 0 1 0 1.6 0a0.8 0.8 0 1 0 -1.6 0M15.6 46.8a2.5 1.0 0 1 0 5.0 0a2.5 1.0 0 1 0 -5.0 0M167.3 135.9a1.7 1.0 0 1 0 3.5 0a1.7 1.0 0 1 0 -3.5 0M297.5 96.8a2.3 1.7 0 1 0 4.6 0a2.3 1.7 0 1 0 -4.6 0M-0.3 159.9a0.8 1.8 0 1 0 1.6 0a0.8 1.8 0 1 0 -1.6 0M24.6 78.0a2.1 1.4 0 1 0 4.3 0a2.1 1.4 0 1 0 -4.3 0M255.1 120.6a1.6 0.9 0 1 0 3.3 0a1.6 0.9 0 1 0 -3.3 0M176.1 75.1a2.0 0.7 0 1 0 3.9 0a2.0 0.7 0 1 0 -3.9 0M51.3 57.7a1.7 1.4 0 1 0 3.3 0a1.7 1.4 0 1 0 -3.3 0M-1.1 288.2a2.3 1.1 0 1 0 4.5 0a2.3 1.1 0 1 0 -4.5 0M58.6 241.2a2.6 0.8 0 1 0 5.1 0a2.6 0.8 0 1 0 -5.1 0M288.6 238.9a2.5 0.9 0 1 0 4.9 0a2.5 0.9 0 1 0 -4.9 0M45.3 48.0a1.1 1.9 0 1 0 2.1 0a1.1 1.9 0 1 0 -2.1 0M349.5 138.3a0.9 1.1 0 1 0 1.7 0a0.9 1.1 0 1 0 -1.7 0M90.8 189.3a2.0 1.7 0 1 0 4.1 0a2.0 1.7 0 1 0 -4.1 0M166.7 133.4a1.5 1.1 0 1 0 3.1 0a1.5 1.1 0 1 0 -3.1 0M173.2 200.1a2.0 1.1 0 1 0 4.0 0a2.0 1.1 0 1 0 -4.0 0M217.5 42.4a0.7 1.1 0 1 0 1.4 0a0.7 1.1 0 1 0 -1.4 0M137.6 9.5a0.8 1.2 0 1 0 1.5 0a0.8 1.2 0 1 0 -1.5 0M362.1 244.6a0.7 1.0 0 1 0 1.3 0a0.7 1.0 0 1 0 -1.3 0M141.1 90.8a0.9 1.4 0 1 0 1.7 0a0.9 1.4 0 1 0 -1.7 0M322.1 111.5a1.0 0.7 0 1 0 1.9 0a1.0 0.7 0 1 0 -1.9 0M4.8 223.5a1.1 1.6 0 1 0 2.1 0a1.1 1.6 0 1 0 -2.1 0M303.5 24.4a1.0 1.0 0 1 0 2.0 0a1.0 1.0 0 1 0 -2.0 0M294.8 215.2a1.2 1.2 0 1 0 2.4 0a1.2 1.2 0 1 0 -2.4 0M134.5 137.7a2.2 1.0 0 1 0 4.4 0a2.2 1.0 0 1 0 -4.4 0M310.2 268.6a1.8 1.9 0 1 0 3.6 0a1.8 1.9 0 1 0 -3.6 0M358.5 50.0a2.6 0.9 0 1 0 5.2 0a2.6 0.9 0 1 0 -5.2 0M308.6 35.4a1.2 1.2 0 1 0 2.4 0a1.2 1.2 0 1 0 -2.4 0M322.1 198.8a1.0 1.9 0 1 0 2.0 0a1.0 1.9 0 1 0 -2.0 0M332.5 148.9a0.7 1.0 0 1 0 1.4 0a0.7 1.0 0 1 0 -1.4 0M110.1 122.3a2.5 1.4 0 1 0 5.0 0a2.5 1.4 0 1 0 -5.0 0M314.5 20.8a1.1 1.6 0 1 0 2.2 0a1.1 1.6 0 1 0 -2.2 0M130.3 66.4a0.7 0.7 0 1 0 1.5 0a0.7 0.7 0 1 0 -1.5 0M157.4 159.5a1.4 1.4 0 1 0 2.8 0a1.4 1.4 0 1 0 -2.8 0M110.1 4.9a1.9 1.1 0 1 0 3.9 0a1.9 1.1 0 1 0 -3.9 0M188.1 110.3a1.1 0.7 0 1 0 2.3 0a1.1 0.7 0 1 0 -2.3 0M113.4 87.0a0.8 0.6 0 1 0 1.7 0a0.8 0.6 0 1 0 -1.7 0M182.7 5.7a2.4 1.1 0 1 0 4.7 0a2.4 1.1 0 1 0 -4.7 0M170.2 153.5a0.6 0.7 0 1 0 1.3 0a0.6 0.7 0 1 0 -1.3 0M300.8 162.5a1.6 1.1 0 1 0 3.2 0a1.6 1.1 0 1 0 -3.2 0M287.0 146.9a2.2 1.8 0 1 0 4.4 0a2.2 1.8 0 1 0 -4.4 0M342.2 212.0a1.9 1.2 0 1 0 3.9 0a1.9 1.2 0 1 0 -3.9 0M203.7 169.1a1.7 1.7 0 1 0 3.3 0a1.7 1.7 0 1 0 -3.3 0M328.3 15.2a2.1 1.5 0 1 0 4.2 0a2.1 1.5 0 1 0 -4.2 0M229.7 265.2a0.7 1.3 0 1 0 1.4 0a0.7 1.3 0 1 0 -1.4 0M143.6 276.9a0.9 1.4 0 1 0 1.9 0a0.9 1.4 0 1 0 -1.9 0M54.0 220.1a1.6 1.6 0 1 0 3.2 0a1.6 1.6 0 1 0 -3.2 0M117.6 257.9a0.6 0.9 0 1 0 1.2 0a0.6 0.9 0 1 0 -1.2 0M280.2 256.6a2.2 1.0 0 1 0 4.3 0a2.2 1.0 0 1 0 -4.3 0M29.1 207.1a2.1 0.7 0 1 0 4.1 0a2.1 0.7 0 1 0 -4.1 0M359.2 154.1a0.7 1.3 0 1 0 1.3 0a0.7 1.3 0 1 0 -1.3 0M127.8 30.5a2.4 1.9 0 1 0 4.7 0a2.4 1.9 0 1 0 -4.7 0M46.6 130.1a1.1 1.5 0 1 0 2.3 0a1.1 1.5 0 1 0 -2.3 0M40.9 97.4a1.4 1.3 0 1 0 2.8 0a1.4 1.3 0 1 0 -2.8 0M165.1 174.0a2.5 1.9 0 1 0 5.0 0a2.5 1.9 0 1 0 -5.0 0M348.3 242.1a1.1 0.9 0 1 0 2.1 0a1.1 0.9 0 1 0 -2.1 0M175.2 187.8a1.8 1.1 0 1 0 3.6 0a1.8 1.1 0 1 0 -3.6 0M381.2 91.2a0.6 0.7 0 1 0 1.3 0a0.6 0.7 0 1 0 -1.3 0M78.3 213.4a2.3 0.7 0 1 0 4.6 0a2.3 0.7 0 1 0 -4.6 0M89.1 70.8a2.2 1.9 0 1 0 4.3 0a2.2 1.9 0 1 0 -4.3 0M98.8 29.9a2.5 2.0 0 1 0 5.1 0a2.5 2.0 0 1 0 -5.1 0M273.8 138.0a2.1 1.7 0 1 0 4.2 0a2.1 1.7 0 1 0 -4.2 0M194.4 79.2a1.7 1.5 0 1 0 3.3 0a1.7 1.5 0 1 0 -3.3 0M124.0 186.7a0.9 2.0 0 1 0 1.8 0a0.9 2.0 0 1 0 -1.8 0M78.9 66.1a2.5 1.9 0 1 0 5.0 0a2.5 1.9 0 1 0 -5.0 0M353.9 245.6a2.3 1.7 0 1 0 4.6 0a2.3 1.7 0 1 0 -4.6 0M216.1 21.7a2.1 1.8 0 1 0 4.1 0a2.1 1.8 0 1 0 -4.1 0M321.8 12.7a0.7 1.6 0 1 0 1.4 0a0.7 1.6 0 1 0 -1.4 0M185.3 260.9a2.6 1.2 0 1 0 5.2 0a2.6 1.2 0 1 0 -5.2 0M258.1 194.2a2.0 1.1 0 1 0 4.0 0a2.0 1.1 0 1 0 -4.0 0M243.8 19.8a2.4 1.6 0 1 0 4.8 0a2.4 1.6 0 1 0 -4.8 0M308.0 135.0a1.0 1.2 0 1 0 2.0 0a1.0 1.2 0 1 0 -2.0 0M261.2 160.1a0.8 0.6 0 1 0 1.6 0a0.8 0.6 0 1 0 -1.6 0M152.1 71.5a1.1 0.9 0 1 0 2.1 0a1.1 0.9 0 1 0 -2.1 0M157.6 203.0a2.4 1.5 0 1 0 4.9 0a2.4 1.5 0 1 0 -4.9 0M6.2 253.3a1.8 1.6 0 1 0 3.6 0a1.8 1.6 0 1 0 -3.6 0M235.0 103.4a1.3 0.7 0 1 0 2.6 0a1.3 0.7 0 1 0 -2.6 0M253.7 15.8a2.0 1.9 0 1 0 3.9 0a2.0 1.9 0 1 0 -3.9 0M254.9 177.0a2.2 1.9 0 1 0 4.4 0a2.2 1.9 0 1 0 -4.4 0M311.3 289.1a1.5 0.6 0 1 0 3.0 0a1.5 0.6 0 1 0 -3.0 0M234.2 186.4a2.3 1.5 0 1 0 4.7 0a2.3 1.5 0 1 0 -4.7 0M137.6 1.4a2.3 1.5 0 1 0 4.5 0a2.3 1.5 0 1 0 -4.5 0M377.0 173.3a2.3 1.7 0 1 0 4.6 0a2.3 1.7 0 1 0 -4.6 0M379.1 135.0a2.4 1.2 0 1 0 4.8 0a2.4 1.2 0 1 0 -4.8 0M3.0 95.1a1.3 2.0 0 1 0 2.6 0a1.3 2.0 0 1 0 -2.6 0M150.0 80.2a2.0 0.7 0 1 0 4.0 0a2.0 0.7 0 1 0 -4.0 0M116.8 115.3a0.8 1.4 0 1 0 1.7 0a0.8 1.4 0 1 0 -1.7 0M161.6 234.2a1.3 2.0 0 1 0 2.6 0a1.3 2.0 0 1 0 -2.6 0M74.3 155.0a1.1 0.6 0 1 0 2.1 0a1.1 0.6 0 1 0 -2.1 0M114.9 261.5a1.2 1.3 0 1 0 2.4 0a1.2 1.3 0 1 0 -2.4 0"/>
<polygon points="6.1,30.0 11.8,30.1 16.6,32.0 24.4,35.2 29.5,36.7 35.8,39.7 38.0,39.4 43.1,45.1 46.1,47.5 44.5,49.3 42.3,48.8 35.8,49.7 33.0,46.0 30.2,44.5 21.2,43.8 16.9,39.8 13.2,39.8 9.3,38.4 7.8,38.2 7.7,36.2 4.9,34.1" fill="#c6ddae" stroke="#c6ddae" stroke-width="1" stroke-linejoin="round"/>
<polygon points="56.2,28.4 62.7,26.2 73.2,26.4 79.0,28.1 77.5,33.6 79.4,38.3 84.4,41.0 79.5,39.9 77.3,41.0 73.1,45.9 68.8,40.7 64.1,41.6 57.2,40.2 58.3,35.0 58.1,30.8" fill="#c6ddae" stroke="#c6ddae" stroke-width="1" stroke-linejoin="round"/>
<polygon points="79.1,29.7 85.9,30.2 92.6,28.6 97.8,33.0 104.4,39.7 107.0,42.3 108.5,49.0 107.2,52.9 105.4,52.7 98.8,53.8 93.2,49.6 89.4,48.0 83.4,47.0 81.9,40.8 81.5,32.0" fill="#c6ddae" stroke="#c6ddae" stroke-width="1" stroke-linejoin="round"/>
<polygon points="110.9,46.5 120.3,45.0 125.1,46.8 130.8,50.5 131.0,53.5 128.5,62.3 131.8,67.9 126.2,63.0 121.5,65.8 116.1,62.1 114.3,59.1 114.1,49.9" fill="#c6ddae" stroke="#c6ddae" stroke-width="1" stroke-linejoin="round"/>
<polygon points="87.4,69.7 94.3,70.9 101.9,67.9 108.2,67.0 109.1,73.7 109.6,77.0 110.9,78.5 107.3,78.1 100.4,81.8 94.9,85.0 92.9,77.8 88.7,75.0" fill="#c6ddae" stroke="#c6ddae" stroke-width="1" stroke-linejoin="round"/>
<polygon points="170.0,0.2 178.8,0.9 189.8,-2.0 198.3,1.9 201.5,6.6 199.5,12.0 198.5,16.0 196.3,14.4 186.6,14.7 181.2,18.3 179.5,14.9 173.4,13.7 169.4,9.4 171.4,8.0 172.3,5.2" fill="#c6ddae" stroke="#c6ddae" stroke-width="1" stroke-linejoin="round"/>
<polygon points="126.4,48.1 132.0,49.6 137.1,51.9 145.8,52.4 145.9,57.8 148.5,62.3 149.3,64.8 142.4,63.7 139.3,65.2 135.1,64.1 131.0,61.3 131.8,55.6" fill="#c6ddae" stroke="#c6ddae" stroke-width="1" stroke-linejoin="round"/>
<polygon points="146.7,70.9 149.3,70.2 153.6,71.1 163.0,71.0 159.1,74.9 158.4,78.1 158.2,81.6 157.1,82.4 153.0,80.5 146.7,78.0 147.6,76.7 145.3,71.2" fill="#c6ddae" stroke="#c6ddae" stroke-width="1" stroke-linejoin="round"/>
<polygon points="190.7,116.4 198.1,118.3 207.0,120.4 216.4,123.5 223.7,126.2 229.3,128.5 238.4,132.2 244.7,135.7 250.0,138.0 257.8,143.0 259.1,147.2 257.4,150.7 258.1,156.6 254.7,153.7 248.6,150.8 243.8,150.2 238.5,144.8 229.2,142.0 222.3,138.1 215.2,134.5 205.1,130.3 196.2,126.7 194.2,124.1 193.2,121.3" fill="#cfe2b8" stroke="#cfe2b8" stroke-width="1" stroke-linejoin="round"/>
<polygon points="254.6,159.4 264.8,159.2 274.6,160.7 283.3,161.6 294.1,166.4 302.5,172.0 312.5,176.4 322.5,178.4 333.7,182.4 343.4,185.8 347.7,188.7 352.5,191.0 356.8,193.7 351.0,194.1 344.9,196.2 338.5,195.3 328.7,195.0 321.6,195.5 313.5,194.0 304.0,190.0 294.6,186.0 284.3,181.0 273.7,177.6 265.9,175.0 254.5,170.2 255.0,166.0 254.2,163.0" fill="#cfe2b8" stroke="#cfe2b8" stroke-width="1" stroke-linejoin="round"/>
<polygon points="316.2,69.8 323.0,70.4 328.5,70.5 336.1,71.6 336.0,78.7 335.2,83.5 334.5,88.1 329.2,89.2 323.5,88.7 320.4,89.1 319.9,81.9 319.9,75.5" fill="#c6ddae" stroke="#c6ddae" stroke-width="1" stroke-linejoin="round"/>
<polygon points="372.4,70.7 378.0,68.7 379.5,66.4 387.1,61.0 387.2,73.4 384.5,82.9 382.9,97.4 382.0,96.2 378.3,94.1 374.1,93.5 373.6,86.0 373.7,78.7" fill="#c6ddae" stroke="#c6ddae" stroke-width="1" stroke-linejoin="round"/>
<polygon points="308.7,192.8 320.1,191.7 329.9,191.9 335.3,192.1 336.2,196.3 338.5,202.1 337.7,208.0 330.7,211.5 322.6,210.7 315.8,211.1 317.3,203.2 313.7,197.6" fill="#c6ddae" stroke="#c6ddae" stroke-width="1" stroke-linejoin="round"/>
<polygon points="335.3,191.4 345.2,194.3 352.4,193.5 362.9,194.2 366.7,200.0 367.1,207.2 370.8,210.0 371.1,219.2 369.5,224.9 371.9,230.1 367.5,232.9 365.8,236.7 363.4,239.2 360.6,239.0 358.4,239.4 352.8,239.1 355.5,231.0 355.6,227.4 357.7,221.8 353.6,216.6 350.4,210.7 347.7,202.6 344.6,199.5 340.8,196.0" fill="#c6ddae" stroke="#c6ddae" stroke-width="1" stroke-linejoin="round"/>
<polygon points="371.0,259.1 372.5,255.2 377.4,246.1 386.4,242.0 382.9,257.7 385.0,276.9 382.9,290.5 376.6,290.0 371.6,292.0 368.1,292.7 369.5,287.1 371.8,282.2 370.9,275.4 370.9,268.3 371.9,264.0" fill="#c6ddae" stroke="#c6ddae" stroke-width="1" stroke-linejoin="round"/>
<polygon points="256.7,71.0 265.9,71.7 271.6,72.5 276.9,74.6 276.4,81.8 273.5,86.7 273.4,92.1 270.2,88.6 265.3,87.5 258.0,84.6 256.2,81.7 256.3,74.1" fill="#c6ddae" stroke="#c6ddae" stroke-width="1" stroke-linejoin="round"/>
<polygon points="76.2,191.2 81.9,191.6 89.7,194.1 92.4,196.8 95.5,199.8 92.4,202.8 92.9,207.5 88.6,203.9 84.0,202.3 76.4,203.0 76.6,199.3 77.0,197.0" fill="#c6ddae" stroke="#c6ddae" stroke-width="1" stroke-linejoin="round"/>
<polygon points="87.7,232.4 93.9,231.8 97.1,232.9 99.6,232.3 100.0,238.8 99.5,239.1 98.1,242.4 93.6,243.5 87.9,241.6 86.1,239.4 87.7,236.6 86.9,233.3" fill="#c6ddae" stroke="#c6ddae" stroke-width="1" stroke-linejoin="round"/>
<polygon points="288.0,166.0 318.0,176.0 338.0,184.0 348.0,193.0 366.0,209.0 374.0,231.0 372.0,251.0 366.0,243.0 360.0,224.0 350.0,205.0 338.0,196.0 326.0,199.0 310.0,209.0 303.0,201.0 288.0,191.0 273.0,181.0" fill="#d6e6c4" stroke="#9fcb8c" stroke-width="1.1"/>
<polyline points="56.3,0.0 65.0,14.4 68.0,19.0" fill="none" stroke="#a9d3e3" stroke-width="1.6"/>
<polyline points="0.0,123.2 11.7,126.1 26.3,130.5 43.8,124.7" fill="none" stroke="#a9d3e3" stroke-width="1.6"/>
<polyline points="0.0,161.2 21.9,158.3 43.8,165.6 65.7,164.1 87.6,162.6 105.2,161.2" fill="none" stroke="#a9d3e3" stroke-width="1.6"/>
<polyline points="164.5,240.2 193.7,253.4 215.6,262.1 237.6,257.7 252.2,246.0" fill="none" stroke="#a9d3e3" stroke-width="1.6"/>
<polyline points="356.0,4.0 365.0,14.0" fill="none" stroke="#a9d3e3" stroke-width="1.6"/>
<polyline points="281.3,289.0 298.0,288.0 310.5,291.0" fill="none" stroke="#a9d3e3" stroke-width="1.6"/>
<polyline points="0.0,286.0 13.0,281.0 28.0,286.0" fill="none" stroke="#a9d3e3" stroke-width="1.6"/>
<path d="M230.0 125.8L227.1 118.8L226.0 110.4L225.9 100.1L225.0 91.0L220.8 84.8L215.3 74.9M152.2 246.9L157.7 236.5L159.4 231.7L164.9 223.8L165.6 213.5M26.0 68.1L26.7 63.0L28.1 56.8L29.7 50.5L33.5 44.6M303.5 144.4L295.9 147.9L286.3 152.8L281.1 156.6L276.4 166.6L267.5 173.5L260.1 178.9L257.2 185.3M245.1 44.0L239.2 47.2L231.7 53.7L224.8 55.5L217.5 59.3L209.6 64.3M291.0 224.2L297.6 219.4L304.9 213.2L311.5 204.6L316.1 197.0L320.2 190.7L320.1 183.7L319.7 172.1M52.8 263.6L62.2 265.4L73.5 262.7L82.2 258.9L90.8 255.4L102.0 257.1M347.8 220.7L346.3 227.5L343.8 233.0L343.1 238.3L341.0 247.2L337.3 254.2M360.7 211.0L351.5 206.5L340.4 207.2L332.2 209.1L325.3 206.4M88.3 253.7L80.7 249.2L72.7 247.2L65.4 245.7L59.6 243.9M97.4 34.6L107.3 35.7L112.5 38.6L119.4 41.1L129.4 47.5L135.9 55.1L143.0 58.9L148.2 61.0M42.2 88.0L38.3 94.4L37.2 102.1L40.8 112.1L45.8 120.7M164.8 284.6L175.5 280.7L183.2 282.0L188.5 283.5L195.8 284.4L200.6 285.7L205.3 288.7M162.8 141.6L164.3 132.1L162.8 122.9L159.7 111.6M172.9 79.3L171.6 85.9L169.3 95.3L165.4 99.3L160.1 107.9L154.9 116.2M259.7 27.0L266.2 28.1L276.1 28.8L285.8 28.0L296.9 30.5M259.2 269.2L251.9 273.4L244.4 280.8L238.2 286.8L235.0 290.9L228.3 294.8L222.6 295.6L214.1 297.5M59.5 21.7L68.2 23.4L76.4 27.6L82.0 30.3L88.6 35.0L92.2 38.9M113.2 32.9L112.3 26.3L108.8 16.7L104.5 9.6L98.0 2.1L90.2 -4.9L79.6 -10.5M18.9 234.6L25.0 227.6L30.6 219.8L34.6 211.1L35.3 202.7L35.2 194.1L31.8 188.3L30.1 182.4M183.4 290.4L177.2 280.4L172.3 274.4L170.3 269.6L167.5 263.3L164.0 253.8L164.6 245.3L166.3 240.0M254.0 271.5L249.2 269.0L245.0 263.2L243.9 254.8L248.3 244.8L253.1 238.7L260.8 235.7M41.9 252.1L47.2 256.5L53.1 258.3L62.3 256.0L69.1 255.7M366.4 123.6L358.2 124.4L348.2 122.4L342.7 122.5M281.9 218.4L275.0 216.6L265.7 219.6L257.8 226.1M380.3 212.8L374.7 211.3L365.9 206.7L355.8 204.6M332.5 112.4L335.6 108.4L337.3 101.4L341.1 97.7L345.0 88.3L349.4 83.1L351.6 72.3M373.6 265.3L364.6 260.4L355.5 254.3L348.3 250.2M2.4 120.2L6.3 131.2L12.8 140.4L13.9 147.7L20.0 154.6L26.5 164.4M214.9 211.4L220.9 203.5L231.1 199.5L242.3 201.7L247.9 201.3M364.7 270.6L363.7 265.2L360.2 257.8L353.5 249.4L349.1 246.8M173.7 14.7L182.0 17.5L187.3 24.1L191.0 28.2L199.3 31.6L205.4 34.7L216.2 39.8L219.5 45.2M167.4 109.4L175.0 108.5L184.2 109.0L190.9 111.5L195.9 112.2L201.8 112.0L211.7 117.8L220.3 125.7M293.0 155.0L295.9 148.4L295.2 142.7L297.5 135.9L294.4 124.5L290.3 114.9L285.0 104.4M31.0 138.2L29.7 126.3L24.5 118.6L20.3 109.4M179.1 49.5L173.5 45.3L168.1 44.2L159.8 45.5L151.0 42.9L143.9 39.9L134.2 37.2L127.0 34.1M44.8 21.0L36.7 25.4L29.6 28.4L24.6 31.7L17.4 34.3L6.9 36.6L1.0 42.0M135.9 272.2L131.0 268.7L126.3 262.8L120.3 257.9L114.8 250.6M190.3 226.7L183.2 232.6L179.9 239.6L175.4 242.4M247.9 125.8L246.9 119.6L246.6 111.3L249.6 105.2M242.5 167.6L247.5 166.1L258.6 165.3L269.1 168.5L276.2 168.2M231.0 179.8L229.1 172.3L227.3 165.7L223.2 158.6L221.2 152.9L216.5 146.2L211.3 138.7L206.1 132.6M69.5 224.6L69.3 216.5L68.9 209.9L73.9 199.8L78.5 190.3L81.4 180.4L85.7 174.3M285.0 102.6L288.8 108.5L296.4 112.1L300.1 115.8L304.0 120.1L310.6 125.3L318.8 125.9M330.9 236.9L341.5 232.1L346.4 228.2L352.1 223.8L360.8 220.1L364.2 214.6L369.3 208.7M261.8 137.1L263.5 142.5L265.0 151.6L265.2 160.2L265.5 172.1L262.2 179.4L255.2 186.2M310.0 291.4L317.6 290.6L328.1 290.6L339.3 291.9L345.5 290.1M337.1 191.6L335.6 184.8L334.7 174.6L332.4 167.8M348.6 231.1L355.5 232.9L364.1 232.9L370.9 235.1M366.9 83.5L363.2 78.7L354.3 74.7L350.2 70.5L342.0 61.9L335.0 56.6L332.3 52.2L331.3 41.8M283.5 100.2L278.8 103.2L268.1 107.9L263.8 112.5L257.1 120.6L250.4 127.5L249.0 133.8L245.7 143.3M35.1 26.5L28.0 31.9L23.7 34.6L18.5 44.0L11.5 53.7L5.6 61.7L2.9 71.6M328.5 246.0L333.7 250.0L337.4 261.0L346.1 267.7L351.4 273.6M221.6 33.5L228.1 41.7L230.4 47.0L231.9 52.7L233.2 58.2L237.0 65.4L241.1 74.1M356.9 97.9L353.6 107.9L354.8 112.9L358.2 120.6L360.4 129.6M85.0 63.0L89.0 57.5L94.0 53.5L96.1 48.7L95.0 41.4L93.2 35.1L94.5 25.5M292.3 45.2L296.0 40.1L299.4 32.2L307.3 24.8M331.1 5.1L338.2 3.6L346.7 -0.2L351.5 -7.8L353.9 -12.7L358.0 -18.8M115.8 92.3L121.4 84.0L127.2 79.2L138.8 77.9M244.7 66.3L251.6 65.2L259.6 60.3L264.2 57.7L266.7 52.7L274.5 47.0L284.3 46.5L293.5 43.7M382.6 199.0L380.4 204.1L372.6 210.3L369.9 219.2L369.9 230.6L367.2 240.4L361.7 248.1L355.5 253.1M307.7 38.6L315.2 41.0L321.3 48.0L328.3 56.2L336.7 62.8L345.8 69.0M266.0 154.9L268.1 149.1L275.5 140.6L278.5 129.9L284.0 124.8L293.3 120.9M218.2 113.1L210.5 121.7L208.5 130.5L205.6 136.3L206.9 147.5L204.6 157.2M128.1 128.0L127.6 119.9L125.5 109.9L123.1 104.7M191.6 40.7L199.3 45.5L204.4 49.5L207.0 56.3L212.4 66.7L213.5 72.0L212.5 83.3M55.0 27.8L60.8 23.4L70.2 22.3L76.2 21.1M18.8 200.9L12.4 198.8L3.4 198.5L-4.5 196.2L-13.1 189.9L-22.9 188.5L-33.9 186.9M107.4 15.5L114.4 9.3L117.0 2.5L121.0 -5.9L123.0 -10.7M207.6 252.7L205.2 264.3L201.2 268.4L191.8 271.3L185.2 273.6M236.7 214.1L231.2 203.6L231.7 194.1L233.2 186.9L231.1 179.9L225.7 172.1L221.9 163.5L222.2 158.6M79.3 29.1L71.4 35.0L65.4 35.8L59.1 33.7L47.5 31.9L38.4 36.0L33.6 43.2M365.4 162.8L363.2 153.7L360.7 147.3L356.8 141.9M267.3 25.6L276.2 33.6L280.4 38.4L288.1 45.3L298.5 47.3L307.7 52.9L312.3 55.5L316.3 59.4M206.6 8.9L215.8 15.6L222.1 16.9L226.2 19.9L235.5 22.1M371.3 270.2L372.1 261.4L371.5 256.1L372.9 247.1L374.6 242.1L381.8 232.6M169.7 10.9L171.8 22.3L171.0 28.8L167.0 39.2L169.6 50.4L172.9 60.9M4.8 93.4L2.0 98.6L-2.2 101.8L-11.9 106.1L-20.7 105.9M288.5 122.7L297.3 127.7L302.7 134.4L307.5 144.3L307.9 150.4L313.7 158.5L315.2 164.6L313.4 174.7M63.3 45.2L63.0 36.9L67.3 29.6L70.6 25.7L75.7 18.6L78.6 13.7L85.5 5.7L90.8 3.7M237.7 179.4L236.9 169.4L240.1 162.9L244.4 156.2M25.1 245.0L20.0 248.5L13.5 257.0L13.1 262.1L13.7 269.8L9.9 280.2M92.3 216.7L88.1 220.3L82.3 225.6L76.0 231.9L69.4 236.1L60.1 241.6L54.1 243.6M53.1 79.3L61.3 77.8L72.3 75.2L78.5 70.5L86.8 67.4L97.6 68.8L106.9 74.5M331.1 60.5L325.7 57.0L319.6 54.1L314.9 47.1L307.8 37.7L304.5 27.2L302.8 21.6L300.3 16.6M154.0 131.7L147.9 132.2L139.2 136.7L132.1 140.1L125.1 143.7L116.2 145.9M18.7 144.7L23.1 153.9L26.9 162.6L28.4 169.9L34.0 177.2L40.4 184.8L44.0 188.3L52.6 189.7M194.8 167.7L194.8 176.7L193.3 185.7L188.1 191.9L182.8 200.7L178.9 206.3L172.9 209.3M28.9 157.1L38.0 155.4L44.9 154.2L51.7 149.8L60.5 148.3L70.2 152.5L78.4 156.6L89.0 160.6M320.6 52.1L327.9 44.9L334.1 37.3L340.2 30.1L350.7 26.0L357.8 23.1L367.4 21.8M36.7 148.8L38.2 155.7L41.6 161.8L46.2 171.8M246.8 188.8L246.3 178.3L243.7 174.0L241.6 169.1L240.4 159.7L239.5 149.8L240.5 141.8M112.1 23.2L114.7 15.1L119.2 5.6L125.7 -1.9L133.0 -5.7L138.6 -7.4M31.4 132.2L30.9 122.9L30.8 111.0L30.8 104.6L28.9 94.1M212.6 46.6L207.8 49.0L201.0 51.0L192.0 51.3L186.4 54.9L179.5 63.4L171.8 70.2M325.1 142.4L323.0 148.9L321.7 157.5L321.6 164.6L321.7 172.9M70.5 151.3L64.6 151.0L55.9 154.8L48.3 154.0L38.3 148.5L28.7 147.4L17.2 144.8L5.8 148.5M26.2 60.3L37.2 61.1L41.9 64.4L50.2 69.5L60.8 74.0L71.1 78.3L78.7 77.4L89.5 78.6M190.7 250.7L187.0 241.5L186.1 234.1L185.2 229.1L187.2 222.7L189.6 216.2L198.6 208.8M352.9 123.8L357.6 128.9L363.5 131.9L371.3 134.0L381.2 136.7M378.2 76.3L371.8 85.8L366.7 92.4L363.3 97.2L360.0 102.3L356.4 110.8L357.4 118.3L355.2 123.3M236.0 102.1L240.8 107.4L245.4 115.0L248.4 122.9L249.3 132.6L250.2 139.5L247.4 148.5L247.1 158.8M382.7 194.8L384.6 205.8L387.9 209.8L393.9 219.2L398.1 226.6L403.3 233.9L404.5 243.0L403.1 251.2M340.2 224.6L330.7 228.9L321.2 231.2L311.9 238.3L309.4 246.0L310.4 253.3M328.1 62.7L320.7 62.6L315.4 62.1L305.4 58.9L300.5 57.5L292.2 49.8L288.8 43.8L285.7 33.7M148.0 173.1L143.3 182.3L142.2 187.4L140.5 195.9L141.8 206.5L145.0 212.4M301.6 226.7L293.0 228.4L282.1 228.5L273.5 231.2M218.3 255.2L210.7 257.0L202.1 254.1L192.4 250.4L184.8 246.3L179.5 242.1L175.1 239.5L167.6 231.8M283.4 283.7L285.4 278.0L290.6 272.1L301.7 268.4M217.1 211.3L212.4 203.9L203.6 197.4L199.6 194.2L195.3 191.5L189.6 181.8L188.3 177.0" fill="none" stroke="#d2d2ce" stroke-width="1.1" stroke-linejoin="round"/>
<polygon points="326.6,199.3 338.3,196.4 349.9,205.1 355.8,213.9 360.2,224.1 358.7,235.8 354.3,240.2 357.2,250.4 348.5,259.2 342.6,270.9 331.0,278.2 320.7,276.7 313.4,265.0 310.5,253.4 312.0,240.2 307.6,221.2 310.5,209.5 320.7,200.8" fill="url(#hatch)" stroke="#c9c09a" stroke-width="0.8"/>
<polyline points="142.4,14.4 142.4,36.1 151.1,53.4 171.3,63.5 185.7,72.2 190.0,86.6 190.0,97.0" fill="none" stroke="#9cc98a" stroke-width="1.2"/>
<polyline points="324.3,73.6 335.8,72.2 348.8,69.3 356.0,75.0 363.2,80.8 377.7,72.2 380.5,54.8 385.0,40.4" fill="none" stroke="#9cc98a" stroke-width="1.2"/>
<polyline points="294.4,96.9 291.5,108.6 290.1,121.8" fill="none" stroke="#9cc98a" stroke-width="1.2"/>
<polyline points="336.8,192.0 353.0,197.0 366.0,211.0 372.0,231.0 363.0,240.0" fill="none" stroke="#9cc98a" stroke-width="1.2"/>
<polyline points="18.8,8.7 18.8,28.9 23.1,34.6 40.4,39.0 57.7,40.4 62.0,46.2" fill="none" stroke="#b8a6c0" stroke-width="1.3"/>
<polyline points="54.8,54.8 56.3,75.0 43.3,76.5 28.9,86.6 11.5,92.4 11.5,97.0" fill="none" stroke="#b8a6c0" stroke-width="1.3"/>
<polyline points="221.8,0.0 220.4,11.5 216.0,17.3 220.4,24.5 236.2,30.3 242.0,33.2 231.9,44.7 217.5,52.0 204.5,60.6 200.2,67.8 203.0,75.0 194.4,78.6 177.1,70.7 158.3,63.5 152.5,66.4 142.4,70.7" fill="none" stroke="#b8a6c0" stroke-width="1.3"/>
<polyline points="13.1,94.0 23.4,108.6 24.8,113.0 46.7,121.8 61.4,105.7 65.7,102.8 76.0,104.2 89.1,108.6 97.9,102.8 111.0,99.1 125.6,99.8 125.6,94.0" fill="none" stroke="#b8a6c0" stroke-width="1.3"/>
<polyline points="84.7,117.4 81.8,137.8 93.5,155.3 102.2,167.0 113.9,181.6" fill="none" stroke="#b8a6c0" stroke-width="1.3"/>
<polyline points="136.8,246.0 148.4,269.4 157.2,282.6 163.0,292.0" fill="none" stroke="#b8a6c0" stroke-width="1.3"/>
<polyline points="111.0,206.0 116.0,221.0 110.0,231.0" fill="none" stroke="#b8a6c0" stroke-width="1.3"/>
<polyline points="76.5,0.0 78.6,11.5 77.9,28.9 76.5,39.0 70.7,46.2 66.4,57.7 62.0,72.2 57.7,83.7 54.0,95.5" fill="none" stroke="#f2b872" stroke-width="1.7" stroke-linejoin="round"/>
<polyline points="0.0,73.6 8.7,75.0 28.9,75.0 37.5,80.8 43.3,89.5 53.4,92.4" fill="none" stroke="#f2b872" stroke-width="1.7" stroke-linejoin="round"/>
<polyline points="0.0,121.0 23.4,111.5 42.4,99.8 54.0,95.5 61.4,101.3 67.2,111.5 67.2,130.5 68.7,145.1 64.3,158.3 58.4,167.0 59.9,178.7 68.7,192.0 73.0,200.8 68.7,213.9 61.4,232.9 62.8,250.4 57.0,257.7 64.3,268.0 58.4,275.3 29.2,279.6 0.0,276.7" fill="none" stroke="#f2b872" stroke-width="1.7" stroke-linejoin="round"/>
<polyline points="64.3,268.0 70.1,288.4" fill="none" stroke="#f2b872" stroke-width="1.7" stroke-linejoin="round"/>
<polyline points="68.7,145.9 92.0,135.6 102.2,133.4" fill="none" stroke="#f2b872" stroke-width="1.7" stroke-linejoin="round"/>
<polyline points="77.4,155.3 95.0,153.9 116.9,159.7 130.0,162.6" fill="none" stroke="#f2b872" stroke-width="1.7" stroke-linejoin="round"/>
<polyline points="128.0,105.7 139.7,98.4" fill="none" stroke="#f2b872" stroke-width="1.7" stroke-linejoin="round"/>
<polyline points="142.6,170.0 164.5,181.6 186.4,193.3" fill="none" stroke="#f2b872" stroke-width="1.7" stroke-linejoin="round"/>
<polyline points="204.0,184.6 233.2,152.4 244.9,134.9 252.2,123.2 268.0,111.0 285.0,101.0" fill="none" stroke="#f2b872" stroke-width="1.7" stroke-linejoin="round"/>
<polyline points="285.3,0.0 285.3,11.5 291.1,21.6 294.0,31.7 295.4,43.3 298.3,54.8" fill="none" stroke="#f2b872" stroke-width="1.7" stroke-linejoin="round"/>
<polyline points="324.3,24.5 327.2,37.5 325.7,43.3 305.5,60.6 298.3,64.9 289.6,64.9 288.2,69.3 289.6,80.8 299.7,86.6 307.0,89.5" fill="none" stroke="#f2b872" stroke-width="1.7" stroke-linejoin="round"/>
<polyline points="325.7,43.3 338.7,56.3" fill="none" stroke="#f2b872" stroke-width="1.7" stroke-linejoin="round"/>
<polyline points="373.3,11.5 376.2,0.0" fill="none" stroke="#f2b872" stroke-width="1.7" stroke-linejoin="round"/>
<polyline points="294.4,108.6 313.4,113.0 335.3,113.0 349.9,117.4 364.6,124.7 374.8,127.6 385.0,129.1" fill="none" stroke="#f2b872" stroke-width="1.7" stroke-linejoin="round"/>
<polyline points="319.3,94.0 331.0,110.1 331.0,126.1" fill="none" stroke="#f2b872" stroke-width="1.7" stroke-linejoin="round"/>
<polyline points="284.2,151.0 306.1,162.7 328.0,155.3 345.6,145.1 371.9,129.1" fill="none" stroke="#f2b872" stroke-width="1.7" stroke-linejoin="round"/>
<polyline points="345.6,149.5 364.6,167.0 385.0,175.8" fill="none" stroke="#f2b872" stroke-width="1.7" stroke-linejoin="round"/>
<polyline points="371.9,129.1 379.2,152.4 379.2,167.0" fill="none" stroke="#f2b872" stroke-width="1.7" stroke-linejoin="round"/>
<polyline points="157.2,213.9 164.5,216.8 171.8,228.5 176.2,241.7 170.4,254.8 171.8,292.0" fill="none" stroke="#f2b872" stroke-width="1.7" stroke-linejoin="round"/>
<polyline points="177.7,241.7 198.1,249.0 204.0,260.7 209.8,268.0 244.9,276.7 258.0,282.6 276.9,284.0 298.8,285.5" fill="none" stroke="#f2b872" stroke-width="1.7" stroke-linejoin="round"/>
<polyline points="325.1,292.0 336.8,282.6 345.6,265.0 357.2,250.4 385.0,238.7" fill="none" stroke="#f2b872" stroke-width="1.7" stroke-linejoin="round"/>
<polyline points="0.0,28.9 5.8,31.7 14.4,44.7 13.0,57.7 5.8,75.0 0.0,86.6" fill="none" stroke="#8c8c8c" stroke-width="1.1" stroke-linejoin="round"/>
<polyline points="7.2,31.7 14.4,26.0 26.0,14.4 31.7,0.0" fill="none" stroke="#8c8c8c" stroke-width="1.1" stroke-linejoin="round"/>
<polyline points="40.4,0.0 52.0,11.5 66.4,17.3 77.9,18.8" fill="none" stroke="#8c8c8c" stroke-width="1.1" stroke-linejoin="round"/>
<polyline points="72.1,54.8 80.8,63.5 86.6,77.9 95.2,89.5 98.1,97.0 104.0,106.0" fill="none" stroke="#8c8c8c" stroke-width="1.1" stroke-linejoin="round"/>
<polyline points="149.6,0.0 161.2,7.2 174.2,18.8 185.7,18.8 214.6,20.9 229.0,26.7 250.7,26.7 281.0,24.5 305.5,28.9 298.3,34.6 296.8,43.3 296.8,69.3 283.9,83.7 276.6,97.0 269.6,111.5 255.0,118.8 238.0,126.0" fill="none" stroke="#8c8c8c" stroke-width="1.1" stroke-linejoin="round"/>
<polyline points="242.0,0.0 247.8,14.4 250.7,26.7" fill="none" stroke="#8c8c8c" stroke-width="1.1" stroke-linejoin="round"/>
<polyline points="356.0,18.8 385.0,2.9" fill="none" stroke="#8c8c8c" stroke-width="1.1" stroke-linejoin="round"/>
<polyline points="189.3,117.4 201.0,126.1 215.6,137.8 230.3,148.0 239.0,155.3 255.0,171.0 269.0,179.0" fill="none" stroke="#8c8c8c" stroke-width="1.1" stroke-linejoin="round"/>
<polyline points="241.9,134.9 233.2,149.5 233.2,158.3 206.9,186.0 179.1,212.5 164.5,224.1 142.6,231.4 128.0,234.4 116.9,241.7 80.3,250.4 58.4,260.7 43.8,265.0 21.9,279.6 8.8,292.0" fill="none" stroke="#8c8c8c" stroke-width="1.1" stroke-linejoin="round"/>
<polyline points="128.0,149.5 136.8,162.6 149.9,168.5 186.4,184.6 193.7,189.0" fill="none" stroke="#8c8c8c" stroke-width="1.1" stroke-linejoin="round"/>
<polyline points="20.4,239.5 43.8,250.4 55.5,259.2 65.7,282.6 68.7,292.0" fill="none" stroke="#8c8c8c" stroke-width="1.1" stroke-linejoin="round"/>
<polyline points="328.0,94.0 331.0,108.6 331.0,126.1" fill="none" stroke="#8c8c8c" stroke-width="1.1" stroke-linejoin="round"/>
<polyline points="290.1,153.9 310.5,156.8 335.3,146.6 369.0,130.5" fill="none" stroke="#8c8c8c" stroke-width="1.1" stroke-linejoin="round"/>
<polyline points="342.6,149.5 349.9,167.0 360.2,172.9 385.0,184.6" fill="none" stroke="#8c8c8c" stroke-width="1.1" stroke-linejoin="round"/>
<polyline points="255.0,224.1 284.2,235.8 313.4,265.0 316.4,292.0" fill="none" stroke="#8c8c8c" stroke-width="1.1" stroke-linejoin="round"/>
<polyline points="0.0,162.0 29.2,167.0 65.7,172.9 94.9,183.1 111.0,193.3 130.0,206.6" fill="none" stroke="#b49a7c" stroke-width="1.1"/>
<polyline points="356.0,16.0 385.0,17.0" fill="none" stroke="#b49a7c" stroke-width="1.1"/>
<polyline points="0.0,17.3 5.8,8.7 14.4,0.0" fill="none" stroke="#e68aa0" stroke-width="1.8" stroke-linejoin="round"/>
<polyline points="85.1,0.0 88.0,8.7 101.0,18.8 106.8,28.9 109.7,43.3 112.6,57.7 119.8,72.2 127.0,83.7 133.0,89.0 144.5,99.1 153.0,103.0 164.5,104.2 174.7,105.7 189.3,127.6 201.0,133.4 211.3,137.8 218.6,149.5 230.3,159.7 237.6,162.6 241.9,174.3 252.2,177.3 265.2,186.0 276.9,189.0" fill="none" stroke="#e68aa0" stroke-width="1.8" stroke-linejoin="round"/>
<polyline points="249.2,177.3 246.3,187.5 236.1,199.3 206.9,216.1 179.1,225.6 157.2,237.3 128.0,246.0 111.0,250.4 102.2,256.3 80.3,265.0 61.4,275.3 55.5,282.6 54.0,292.0" fill="none" stroke="#e68aa0" stroke-width="1.8" stroke-linejoin="round"/>
<polyline points="128.0,10.1 142.4,14.4 156.9,15.9 165.5,23.1 175.6,27.4 190.0,26.7 214.6,25.3 229.0,27.4 250.7,28.1 255.0,28.9 269.4,36.1 283.9,31.7 302.6,26.0 312.7,18.8 322.8,21.6 330.0,18.8 330.0,11.5 344.5,4.3 350.2,4.3 354.6,14.4 356.0,18.8 385.0,18.8" fill="none" stroke="#e68aa0" stroke-width="1.8" stroke-linejoin="round"/>
<polyline points="85.0,0.0 98.0,5.0 113.0,7.0 128.0,10.1" fill="none" stroke="#e68aa0" stroke-width="1.8" stroke-linejoin="round"/>
<polyline points="354.6,14.4 354.6,28.9 353.1,36.1 348.8,50.5 341.6,56.3 324.3,62.0 321.4,69.3 321.4,76.5 312.7,85.1 307.0,89.5 298.8,96.9 293.0,108.6 291.5,115.9 285.7,126.1" fill="none" stroke="#e68aa0" stroke-width="1.8" stroke-linejoin="round"/>
<polyline points="278.4,158.3 269.6,165.6 255.0,174.3" fill="none" stroke="#e68aa0" stroke-width="1.8" stroke-linejoin="round"/>
<polyline points="282.8,199.3 290.1,212.5 298.8,228.5 309.0,246.0 310.5,265.0 307.6,279.6 306.1,292.0" fill="none" stroke="#e68aa0" stroke-width="1.8" stroke-linejoin="round"/>
<polyline points="276.9,189.0 282.8,199.3" fill="none" stroke="#e68aa0" stroke-width="1.8" stroke-linejoin="round"/>
<text x="250" y="168" font-size="9" fill="#8a6fc0" font-family="Liberation Sans">✈</text>
</svg>
<div class="a" style="left:512px;top:369px;width:385px;height:292px;overflow:hidden">
<div class="t" style="left:-0.2px;top:8px;font-size:10.4px;color:#3a3a3a;text-shadow:1px 0 0 #fff,-1px 0 0 #fff,0 1px 0 #fff,0 -1px 0 #fff,1px 1px 1px #fff,-1px -1px 1px #fff,1px -1px 1px #fff,-1px 1px 1px #fff">urg</div>
<div class="t" style="left:89.9px;top:-1px;font-size:10.4px;color:#3a3a3a;text-shadow:1px 0 0 #fff,-1px 0 0 #fff,0 1px 0 #fff,0 -1px 0 #fff,1px 1px 1px #fff,-1px -1px 1px #fff,1px -1px 1px #fff,-1px 1px 1px #fff">Bissendorf</div>
<div class="t" style="left:25.0px;top:19px;font-size:10.7px;color:#3a3a3a;text-shadow:1px 0 0 #fff,-1px 0 0 #fff,0 1px 0 #fff,0 -1px 0 #fff,1px 1px 1px #fff,-1px -1px 1px #fff,1px -1px 1px #fff,-1px 1px 1px #fff">Georgsmarienhütte</div>
<div class="t" style="left:163.8px;top:19px;font-size:10.4px;color:#3a3a3a;text-shadow:1px 0 0 #fff,-1px 0 0 #fff,0 1px 0 #fff,0 -1px 0 #fff,1px 1px 1px #fff,-1px -1px 1px #fff,1px -1px 1px #fff,-1px 1px 1px #fff">Melle</div>
<div class="t" style="left:250.0px;top:19px;font-size:10.4px;color:#3a3a3a;text-shadow:1px 0 0 #fff,-1px 0 0 #fff,0 1px 0 #fff,0 -1px 0 #fff,1px 1px 1px #fff,-1px -1px 1px #fff,1px -1px 1px #fff,-1px 1px 1px #fff">Bünde</div>
<div class="t" style="left:303.8px;top:19px;font-size:10.4px;color:#3a3a3a;text-shadow:1px 0 0 #fff,-1px 0 0 #fff,0 1px 0 #fff,0 -1px 0 #fff,1px 1px 1px #fff,-1px -1px 1px #fff,1px -1px 1px #fff,-1px 1px 1px #fff">Bad Oeynhausen</div>
<div class="t" style="left:352.1px;top:-4px;font-size:10.4px;color:#3a3a3a;text-shadow:1px 0 0 #fff,-1px 0 0 #fff,0 1px 0 #fff,0 -1px 0 #fff,1px 1px 1px #fff,-1px -1px 1px #fff,1px -1px 1px #fff,-1px 1px 1px #fff">Porta Westfalica</div>
<div class="t" style="left:46.6px;top:45px;font-size:10.4px;color:#3a3a3a;text-shadow:1px 0 0 #fff,-1px 0 0 #fff,0 1px 0 #fff,0 -1px 0 #fff,1px 1px 1px #fff,-1px -1px 1px #fff,1px -1px 1px #fff,-1px 1px 1px #fff">Bad Iburg</div>
<div class="t" style="left:352.1px;top:40px;font-size:10.4px;color:#3a3a3a;text-shadow:1px 0 0 #fff,-1px 0 0 #fff,0 1px 0 #fff,0 -1px 0 #fff,1px 1px 1px #fff,-1px -1px 1px #fff,1px -1px 1px #fff,-1px 1px 1px #fff">Vlotho</div>
<div class="t" style="left:242.4px;top:56px;font-size:10.4px;color:#3a3a3a;text-shadow:1px 0 0 #fff,-1px 0 0 #fff,0 1px 0 #fff,0 -1px 0 #fff,1px 1px 1px #fff,-1px -1px 1px #fff,1px -1px 1px #fff,-1px 1px 1px #fff">Enger</div>
<div class="t" style="left:111.6px;top:70px;font-size:10.4px;color:#3a3a3a;text-shadow:1px 0 0 #fff,-1px 0 0 #fff,0 1px 0 #fff,0 -1px 0 #fff,1px 1px 1px #fff,-1px -1px 1px #fff,1px -1px 1px #fff,-1px 1px 1px #fff">Dissen</div>
<div class="t" style="left:279.3px;top:70px;font-size:10.4px;color:#3a3a3a;text-shadow:1px 0 0 #fff,-1px 0 0 #fff,0 1px 0 #fff,0 -1px 0 #fff,1px 1px 1px #fff,-1px -1px 1px #fff,1px -1px 1px #fff,-1px 1px 1px #fff">Herford</div>
<div class="t" style="left:295.8px;top:88px;font-size:10.4px;color:#3a3a3a;text-shadow:1px 0 0 #fff,-1px 0 0 #fff,0 1px 0 #fff,0 -1px 0 #fff,1px 1px 1px #fff,-1px -1px 1px #fff,1px -1px 1px #fff,-1px 1px 1px #fff">Bad Salzuflen</div>
<div class="t" style="left:40.6px;top:146px;font-size:10.4px;color:#3a3a3a;text-shadow:1px 0 0 #fff,-1px 0 0 #fff,0 1px 0 #fff,0 -1px 0 #fff,1px 1px 1px #fff,-1px -1px 1px #fff,1px -1px 1px #fff,-1px 1px 1px #fff">Sassenberg</div>
<div class="t" style="left:106.8px;top:161px;font-size:10.4px;color:#3a3a3a;text-shadow:1px 0 0 #fff,-1px 0 0 #fff,0 1px 0 #fff,0 -1px 0 #fff,1px 1px 1px #fff,-1px -1px 1px #fff,1px -1px 1px #fff,-1px 1px 1px #fff">Harsewinkel</div>
<div class="t" style="left:25.0px;top:166px;font-size:10.4px;color:#3a3a3a;text-shadow:1px 0 0 #fff,-1px 0 0 #fff,0 1px 0 #fff,0 -1px 0 #fff,1px 1px 1px #fff,-1px -1px 1px #fff,1px -1px 1px #fff,-1px 1px 1px #fff">Warendorf</div>
<div class="t" style="left:164.2px;top:193px;font-size:12px;color:#3a3a3a;text-shadow:1px 0 0 #fff,-1px 0 0 #fff,0 1px 0 #fff,0 -1px 0 #fff,1px 1px 1px #fff,-1px -1px 1px #fff,1px -1px 1px #fff,-1px 1px 1px #fff">Gütersloh</div>
<div class="t" style="left:114.7px;top:231px;font-size:10.4px;color:#3a3a3a;text-shadow:1px 0 0 #fff,-1px 0 0 #fff,0 1px 0 #fff,0 -1px 0 #fff,1px 1px 1px #fff,-1px -1px 1px #fff,1px -1px 1px #fff,-1px 1px 1px #fff">Rheda-Wiedenbrück</div>
<div class="t" style="left:-37.5px;top:231px;font-size:10.4px;color:#3a3a3a;text-shadow:1px 0 0 #fff,-1px 0 0 #fff,0 1px 0 #fff,0 -1px 0 #fff,1px 1px 1px #fff,-1px -1px 1px #fff,1px -1px 1px #fff,-1px 1px 1px #fff">Sendenhorst</div>
<div class="t" style="left:36.7px;top:236px;font-size:10.4px;color:#3a3a3a;text-shadow:1px 0 0 #fff,-1px 0 0 #fff,0 1px 0 #fff,0 -1px 0 #fff,1px 1px 1px #fff,-1px -1px 1px #fff,1px -1px 1px #fff,-1px 1px 1px #fff">Ennigerloh</div>
<div class="t" style="left:189.5px;top:252px;font-size:10.4px;color:#3a3a3a;text-shadow:1px 0 0 #fff,-1px 0 0 #fff,0 1px 0 #fff,0 -1px 0 #fff,1px 1px 1px #fff,-1px -1px 1px #fff,1px -1px 1px #fff,-1px 1px 1px #fff">Rietberg</div>
<div class="t" style="left:0.5px;top:278px;font-size:10.4px;color:#3a3a3a;text-shadow:1px 0 0 #fff,-1px 0 0 #fff,0 1px 0 #fff,0 -1px 0 #fff,1px 1px 1px #fff,-1px -1px 1px #fff,1px -1px 1px #fff,-1px 1px 1px #fff">Ahlen</div>
<div class="t" style="left:49.4px;top:283px;font-size:10.4px;color:#3a3a3a;text-shadow:1px 0 0 #fff,-1px 0 0 #fff,0 1px 0 #fff,0 -1px 0 #fff,1px 1px 1px #fff,-1px -1px 1px #fff,1px -1px 1px #fff,-1px 1px 1px #fff">Beckum</div>
<div class="t" style="left:154.0px;top:101px;font-size:10.4px;color:#3a3a3a;text-shadow:1px 0 0 #fff,-1px 0 0 #fff,0 1px 0 #fff,0 -1px 0 #fff,1px 1px 1px #fff,-1px -1px 1px #fff,1px -1px 1px #fff,-1px 1px 1px #fff">Halle</div>
<div class="t" style="left:235.4px;top:129px;font-size:6px;color:#555;text-shadow:0 0 1px #fff,0 0 1px #fff">Bielefeld</div>
<div class="t" style="left:200.0px;top:134px;font-size:6px;color:#555;text-shadow:0 0 1px #fff,0 0 1px #fff">Steinhagen</div>
<div class="t" style="left:279.1px;top:163px;font-size:6px;color:#555;text-shadow:0 0 1px #fff,0 0 1px #fff">Oerlinghausen</div>
<div class="t" style="left:336.8px;top:145px;font-size:6px;color:#555;text-shadow:0 0 1px #fff,0 0 1px #fff">Lage</div>
<div class="t" style="left:363.8px;top:177px;font-size:6px;color:#555;text-shadow:0 0 1px #fff,0 0 1px #fff">Detmold</div>
<div class="t" style="left:373.3px;top:123px;font-size:6px;color:#555;text-shadow:0 0 1px #fff,0 0 1px #fff">Lemgo</div>
<div class="t" style="left:280.6px;top:194px;font-size:6px;color:#555;text-shadow:0 0 1px #fff,0 0 1px #fff">Schloss Holte-</div>
<div class="t" style="left:280.6px;top:202px;font-size:6px;color:#555;text-shadow:0 0 1px #fff,0 0 1px #fff">Stukenbrock</div>
<div class="t" style="left:285.7px;top:245px;font-size:6px;color:#555;text-shadow:0 0 1px #fff,0 0 1px #fff">Hövelhof</div>
<div class="t" style="left:350.0px;top:253px;font-size:6px;color:#555;text-shadow:0 0 1px #fff,0 0 1px #fff">Schlangen</div>
<div class="t" style="left:332.4px;top:268px;font-size:6px;color:#555;text-shadow:0 0 1px #fff,0 0 1px #fff">Bad Lippspringe</div>
<div class="t" style="left:247.0px;top:279px;font-size:6px;color:#555;text-shadow:0 0 1px #fff,0 0 1px #fff">Delbrück</div>
<div class="t" style="left:304.70000000000005px;top:229px;font-size:6.5px;color:#a83a3a">Truppenübungsplatz</div>
<div class="t" style="left:323.70000000000005px;top:236px;font-size:6.5px;color:#a83a3a">Senne</div>
</div>
<div class="a" style="left:603px;top:474px;width:17px;height:32px;background:#a3a3a3;border:1px solid #707070"></div>
<div class="a" style="left:619px;top:475px;width:17px;height:31px;background:#80d5fb;border:1px solid #5b8db5"></div>
<div class="a" style="left:670px;top:489px;width:17px;height:14px;background:#a3a3a3;border:1px solid #707070"></div>
<div class="a" style="left:686px;top:471px;width:17px;height:32px;background:#80d5fb;border:1px solid #5b8db5"></div>
<div class="a" style="left:703px;top:469px;width:17px;height:19px;background:#a3a3a3;border:1px solid #707070"></div>
<div class="a" style="left:719px;top:456px;width:16px;height:32px;background:#80d5fb;border:1px solid #5b8db5"></div>
<div class="a" style="left:767px;top:505px;width:16px;height:22px;background:#a3a3a3;border:1px solid #707070"></div>
<div class="a" style="left:782px;top:495px;width:17px;height:32px;background:#80d5fb;border:1px solid #5b8db5"></div>
<div class="a" style="left:705px;top:554px;width:17px;height:31px;background:#a3a3a3;border:1px solid #707070"></div>
<div class="a" style="left:721px;top:553px;width:17px;height:32px;background:#80d5fb;border:1px solid #5b8db5"></div>
<div class="a" style="left:636px;top:576px;width:17px;height:21px;background:#a3a3a3;border:1px solid #707070"></div>
<div class="a" style="left:652px;top:567px;width:17px;height:30px;background:#80d5fb;border:1px solid #5b8db5"></div>
<div class="t" style="left:637.3px;top:478px;font-size:12px;font-weight:bold;color:#454545;text-shadow:1px 0 0 #fff,-1px 0 0 #fff,0 1px 0 #fff,0 -1px 0 #fff,1px 1px 0 #fff,-1px -1px 0 #fff,1px -1px 0 #fff,-1px 1px 0 #fff,0 0 3px #fff,0 0 3px #fff,0 0 4px #fff">Versmold</div>
<div class="t" style="left:737.2px;top:460px;font-size:12px;font-weight:bold;color:#454545;text-shadow:1px 0 0 #fff,-1px 0 0 #fff,0 1px 0 #fff,0 -1px 0 #fff,1px 1px 0 #fff,-1px -1px 0 #fff,1px -1px 0 #fff,-1px 1px 0 #fff,0 0 3px #fff,0 0 3px #fff,0 0 4px #fff">Werther</div>
<div class="t" style="left:734.5px;top:474px;font-size:12px;font-weight:bold;color:#454545;text-shadow:1px 0 0 #fff,-1px 0 0 #fff,0 1px 0 #fff,0 -1px 0 #fff,1px 1px 0 #fff,-1px -1px 0 #fff,1px -1px 0 #fff,-1px 1px 0 #fff,0 0 3px #fff,0 0 3px #fff,0 0 4px #fff">/Westf.</div>
<div class="t" style="left:800.3px;top:498px;font-size:12px;font-weight:bold;color:#454545;text-shadow:1px 0 0 #fff,-1px 0 0 #fff,0 1px 0 #fff,0 -1px 0 #fff,1px 1px 0 #fff,-1px -1px 0 #fff,1px -1px 0 #fff,-1px 1px 0 #fff,0 0 3px #fff,0 0 3px #fff,0 0 4px #fff">Bielefeld</div>
<div class="t" style="left:738.6px;top:557px;font-size:12px;font-weight:bold;color:#454545;text-shadow:1px 0 0 #fff,-1px 0 0 #fff,0 1px 0 #fff,0 -1px 0 #fff,1px 1px 0 #fff,-1px -1px 0 #fff,1px -1px 0 #fff,-1px 1px 0 #fff,0 0 3px #fff,0 0 3px #fff,0 0 4px #fff">Gütersloh</div>
<div class="t" style="left:670.8px;top:569px;font-size:12px;font-weight:bold;color:#454545;text-shadow:1px 0 0 #fff,-1px 0 0 #fff,0 1px 0 #fff,0 -1px 0 #fff,1px 1px 0 #fff,-1px -1px 0 #fff,1px -1px 0 #fff,-1px 1px 0 #fff,0 0 3px #fff,0 0 3px #fff,0 0 4px #fff">Herzebrock-Clarholz</div>
</div></div></body></html>
